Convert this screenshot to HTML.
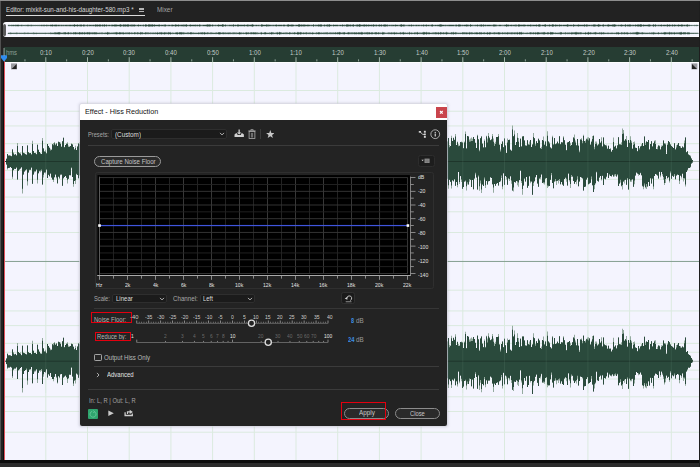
<!DOCTYPE html>
<html><head><meta charset="utf-8"><title>Effect - Hiss Reduction</title>
<style>
html,body{margin:0;padding:0;}
body{width:700px;height:467px;overflow:hidden;background:#222;position:relative;font-family:"Liberation Sans",sans-serif;}
#app,#dlg{position:absolute;left:0;top:0;width:700px;height:467px;overflow:hidden}
#app div,#dlg div,.abs{position:absolute}
.t{position:absolute;white-space:nowrap;transform-origin:0 50%;display:block}
</style></head><body>
<div id="app">
<div style="left:0.00px;top:0.00px;width:700.00px;height:1.00px;background:#8e8e8e"></div>
<div style="left:0.00px;top:1.00px;width:1.00px;height:466.00px;background:#505050"></div>
<span class="t" style="left:6.00px;top:4.93px;font-size:7.6px;line-height:9.12px;color:#d6d6d6;transform:scaleX(0.8215);">Editor: mixkit-sun-and-his-daughter-580.mp3 *</span>
<div style="left:139.40px;top:7.50px;width:4.80px;height:0.80px;background:#b4b4b4"></div>
<div style="left:139.40px;top:9.30px;width:4.80px;height:0.80px;background:#b4b4b4"></div>
<div style="left:139.40px;top:11.10px;width:4.80px;height:0.80px;background:#b4b4b4"></div>
<div style="left:6.00px;top:15.00px;width:138.60px;height:0.90px;background:#dcdcdc"></div>
<span class="t" style="left:157.20px;top:4.93px;font-size:7.6px;line-height:9.12px;color:#a6a6a6;transform:scaleX(0.8343);">Mixer</span>
<div style="left:3.00px;top:22.00px;width:697.00px;height:15.40px;background:#fbfbff;border-radius:3px 0 0 3px"></div>
<div style="left:5.50px;top:24.00px;width:694.50px;height:11.60px;background:#f5f5ff"></div>
<div style="left:3.00px;top:24.00px;width:2.60px;height:12.00px;background:#5a5a5a;border-radius:1.5px"></div>
<div style="left:4.00px;top:47.40px;width:695.00px;height:14.60px;background:#263d33"></div>
<div style="left:5.00px;top:62.00px;width:694.00px;height:398.40px;background:#fdfdff"></div>
<div style="left:5.00px;top:63.20px;width:694.00px;height:397.20px;background:#f4f4fe"></div>
<svg class="abs" style="left:0;top:0" width="700" height="467" viewBox="0 0 700 467"><path d="M8.0,25.24 L8.8,25.21 L9.6,25.22 L10.4,25.33 L11.2,25.19 L12.0,24.98 L12.8,25.30 L13.6,25.08 L14.4,25.29 L15.2,24.93 L16.0,25.31 L16.8,25.01 L17.6,24.97 L18.4,24.88 L19.2,25.25 L20.0,25.30 L20.8,25.23 L21.6,25.00 L22.4,25.17 L23.2,25.29 L24.0,25.33 L24.8,25.28 L25.6,25.21 L26.4,25.28 L27.2,24.90 L28.0,25.33 L28.8,24.92 L29.6,25.28 L30.4,25.17 L31.2,24.91 L32.0,25.19 L32.8,25.28 L33.6,25.25 L34.4,25.32 L35.2,25.21 L36.0,25.33 L36.8,25.32 L37.6,25.24 L38.4,25.28 L39.2,25.25 L40.0,25.15 L40.8,25.31 L41.6,25.05 L42.4,25.18 L43.2,25.03 L44.0,25.21 L44.8,24.96 L45.6,25.33 L46.4,24.93 L47.2,25.19 L48.0,25.00 L48.8,25.31 L49.6,25.29 L50.4,24.97 L51.2,24.98 L52.0,25.10 L52.8,24.76 L53.6,25.18 L54.4,24.97 L55.2,25.06 L56.0,24.84 L56.8,25.02 L57.6,25.13 L58.4,25.03 L59.2,25.05 L60.0,25.13 L60.8,25.15 L61.6,25.03 L62.4,25.15 L63.2,25.06 L64.0,25.22 L64.8,25.16 L65.6,25.10 L66.4,25.06 L67.2,25.13 L68.0,25.04 L68.8,25.13 L69.6,25.00 L70.4,24.98 L71.2,25.09 L72.0,25.18 L72.8,24.99 L73.6,25.05 L74.4,24.56 L75.2,25.07 L76.0,25.11 L76.8,25.03 L77.6,24.78 L78.4,25.11 L79.2,25.17 L80.0,24.70 L80.8,24.92 L81.6,24.87 L82.4,25.21 L83.2,25.12 L84.0,24.56 L84.8,25.22 L85.6,25.15 L86.4,25.19 L87.2,24.71 L88.0,25.20 L88.8,25.14 L89.6,24.98 L90.4,25.12 L91.2,25.06 L92.0,25.18 L92.8,25.08 L93.6,24.98 L94.4,25.13 L95.2,24.82 L96.0,24.65 L96.8,25.00 L97.6,24.81 L98.4,24.98 L99.2,24.98 L100.0,24.53 L100.8,25.10 L101.6,25.14 L102.4,24.73 L103.2,25.19 L104.0,24.64 L104.8,24.63 L105.6,25.15 L106.4,24.73 L107.2,25.18 L108.0,25.15 L108.8,25.10 L109.6,25.07 L110.4,25.19 L111.2,25.14 L112.0,24.75 L112.8,25.10 L113.6,25.03 L114.4,24.85 L115.2,24.99 L116.0,24.61 L116.8,25.11 L117.6,25.04 L118.4,25.10 L119.2,25.12 L120.0,24.70 L120.8,24.52 L121.6,25.05 L122.4,25.15 L123.2,24.62 L124.0,25.08 L124.8,24.73 L125.6,24.74 L126.4,25.02 L127.2,24.60 L128.0,24.98 L128.8,24.55 L129.6,25.17 L130.4,24.98 L131.2,24.67 L132.0,25.18 L132.8,24.70 L133.6,24.88 L134.4,24.80 L135.2,25.03 L136.0,25.19 L136.8,25.14 L137.6,25.10 L138.4,24.68 L139.2,25.18 L140.0,25.09 L140.8,25.08 L141.6,25.15 L142.4,25.16 L143.2,24.81 L144.0,25.13 L144.8,25.18 L145.6,24.62 L146.4,24.79 L147.2,25.16 L148.0,25.10 L148.8,24.57 L149.6,24.67 L150.4,24.81 L151.2,24.98 L152.0,24.60 L152.8,24.81 L153.6,25.07 L154.4,24.63 L155.2,25.06 L156.0,25.11 L156.8,25.09 L157.6,25.08 L158.4,24.91 L159.2,24.66 L160.0,25.10 L160.8,25.22 L161.6,25.00 L162.4,25.11 L163.2,24.94 L164.0,25.13 L164.8,24.71 L165.6,24.85 L166.4,25.16 L167.2,25.21 L168.0,25.13 L168.8,25.05 L169.6,25.10 L170.4,25.19 L171.2,25.15 L172.0,24.77 L172.8,24.99 L173.6,25.12 L174.4,25.13 L175.2,24.65 L176.0,24.76 L176.8,25.05 L177.6,25.06 L178.4,24.75 L179.2,25.03 L180.0,25.21 L180.8,24.97 L181.6,24.91 L182.4,25.00 L183.2,24.70 L184.0,25.21 L184.8,24.86 L185.6,24.93 L186.4,24.60 L187.2,25.12 L188.0,25.20 L188.8,25.19 L189.6,24.99 L190.4,24.80 L191.2,25.09 L192.0,25.08 L192.8,25.06 L193.6,24.99 L194.4,25.11 L195.2,24.85 L196.0,25.20 L196.8,25.02 L197.6,24.90 L198.4,25.20 L199.2,24.85 L200.0,24.77 L200.8,25.15 L201.6,25.20 L202.4,25.14 L203.2,25.08 L204.0,25.06 L204.8,25.08 L205.6,25.02 L206.4,24.98 L207.2,24.56 L208.0,24.90 L208.8,24.74 L209.6,24.68 L210.4,24.86 L211.2,25.19 L212.0,25.01 L212.8,24.72 L213.6,25.13 L214.4,25.22 L215.2,25.01 L216.0,25.20 L216.8,25.18 L217.6,25.11 L218.4,24.71 L219.2,24.99 L220.0,25.11 L220.8,25.03 L221.6,25.09 L222.4,24.59 L223.2,24.57 L224.0,25.21 L224.8,25.10 L225.6,24.82 L226.4,25.17 L227.2,25.13 L228.0,25.16 L228.8,25.16 L229.6,25.01 L230.4,25.07 L231.2,25.18 L232.0,24.84 L232.8,25.20 L233.6,24.52 L234.4,25.14 L235.2,25.00 L236.0,25.02 L236.8,25.22 L237.6,24.74 L238.4,24.83 L239.2,25.12 L240.0,25.04 L240.8,24.97 L241.6,24.99 L242.4,25.05 L243.2,25.02 L244.0,25.07 L244.8,24.86 L245.6,25.20 L246.4,25.07 L247.2,25.04 L248.0,24.54 L248.8,25.20 L249.6,25.05 L250.4,25.00 L251.2,25.01 L252.0,24.69 L252.8,24.45 L253.6,25.08 L254.4,25.22 L255.2,25.18 L256.0,25.00 L256.8,25.07 L257.6,25.19 L258.4,25.08 L259.2,25.13 L260.0,25.17 L260.8,25.15 L261.6,24.57 L262.4,24.81 L263.2,25.08 L264.0,25.00 L264.8,25.12 L265.6,25.09 L266.4,24.73 L267.2,24.77 L268.0,25.19 L268.8,24.80 L269.6,25.07 L270.4,25.05 L271.2,25.20 L272.0,25.01 L272.8,25.14 L273.6,25.06 L274.4,25.16 L275.2,25.01 L276.0,24.94 L276.8,24.78 L277.6,25.19 L278.4,25.04 L279.2,25.02 L280.0,24.99 L280.8,25.06 L281.6,24.97 L282.4,25.17 L283.2,25.11 L284.0,24.69 L284.8,25.08 L285.6,25.19 L286.4,25.13 L287.2,25.10 L288.0,24.52 L288.8,24.80 L289.6,25.10 L290.4,25.04 L291.2,24.75 L292.0,25.05 L292.8,24.76 L293.6,25.01 L294.4,25.21 L295.2,25.16 L296.0,24.97 L296.8,25.10 L297.6,25.08 L298.4,24.66 L299.2,24.55 L300.0,24.84 L300.8,25.11 L301.6,24.81 L302.4,24.98 L303.2,24.80 L304.0,24.98 L304.8,24.76 L305.6,25.03 L306.4,25.07 L307.2,25.06 L308.0,24.74 L308.8,25.12 L309.6,25.01 L310.4,25.13 L311.2,25.03 L312.0,25.18 L312.8,25.11 L313.6,24.62 L314.4,25.15 L315.2,25.15 L316.0,24.83 L316.8,25.20 L317.6,25.00 L318.4,24.68 L319.2,24.98 L320.0,24.66 L320.8,24.72 L321.6,24.65 L322.4,25.13 L323.2,25.18 L324.0,24.98 L324.8,24.77 L325.6,25.13 L326.4,25.10 L327.2,24.58 L328.0,25.15 L328.8,24.67 L329.6,24.57 L330.4,25.12 L331.2,25.07 L332.0,25.21 L332.8,25.21 L333.6,24.83 L334.4,25.11 L335.2,24.99 L336.0,25.09 L336.8,24.99 L337.6,24.97 L338.4,25.18 L339.2,25.20 L340.0,25.04 L340.8,25.12 L341.6,25.15 L342.4,24.69 L343.2,25.10 L344.0,25.17 L344.8,24.89 L345.6,25.18 L346.4,24.68 L347.2,24.54 L348.0,25.06 L348.8,24.77 L349.6,25.00 L350.4,24.75 L351.2,25.21 L352.0,24.86 L352.8,25.01 L353.6,24.60 L354.4,25.19 L355.2,25.07 L356.0,25.16 L356.8,24.75 L357.6,24.84 L358.4,25.06 L359.2,24.61 L360.0,24.55 L360.8,24.95 L361.6,25.03 L362.4,24.99 L363.2,24.89 L364.0,24.75 L364.8,24.78 L365.6,25.06 L366.4,24.80 L367.2,25.05 L368.0,25.08 L368.8,24.81 L369.6,25.09 L370.4,25.08 L371.2,25.12 L372.0,24.77 L372.8,25.16 L373.6,24.58 L374.4,25.06 L375.2,25.19 L376.0,24.71 L376.8,25.01 L377.6,25.21 L378.4,25.12 L379.2,24.70 L380.0,24.92 L380.8,25.04 L381.6,24.70 L382.4,25.17 L383.2,25.02 L384.0,24.75 L384.8,24.77 L385.6,24.77 L386.4,24.99 L387.2,24.63 L388.0,25.19 L388.8,25.20 L389.6,25.08 L390.4,25.15 L391.2,24.98 L392.0,25.17 L392.8,24.99 L393.6,25.06 L394.4,25.14 L395.2,24.87 L396.0,24.99 L396.8,25.11 L397.6,25.08 L398.4,25.15 L399.2,25.16 L400.0,25.03 L400.8,24.74 L401.6,24.49 L402.4,24.96 L403.2,25.11 L404.0,24.56 L404.8,25.19 L405.6,25.16 L406.4,25.21 L407.2,25.19 L408.0,25.14 L408.8,25.06 L409.6,25.00 L410.4,25.15 L411.2,24.65 L412.0,25.12 L412.8,25.19 L413.6,25.03 L414.4,25.22 L415.2,25.14 L416.0,25.05 L416.8,25.01 L417.6,25.14 L418.4,25.09 L419.2,25.07 L420.0,25.18 L420.8,25.22 L421.6,25.03 L422.4,25.21 L423.2,24.83 L424.0,24.98 L424.8,25.16 L425.6,25.06 L426.4,24.76 L427.2,25.22 L428.0,25.07 L428.8,25.09 L429.6,25.14 L430.4,25.13 L431.2,25.03 L432.0,24.76 L432.8,24.79 L433.6,25.22 L434.4,25.19 L435.2,25.11 L436.0,25.10 L436.8,25.21 L437.6,25.03 L438.4,25.01 L439.2,25.04 L440.0,24.56 L440.8,24.75 L441.6,24.81 L442.4,25.00 L443.2,25.11 L444.0,25.04 L444.8,25.18 L445.6,25.00 L446.4,25.17 L447.2,25.11 L448.0,25.21 L448.8,25.03 L449.6,25.00 L450.4,25.03 L451.2,24.99 L452.0,25.12 L452.8,25.06 L453.6,25.04 L454.4,25.17 L455.2,25.16 L456.0,24.64 L456.8,25.01 L457.6,25.20 L458.4,24.83 L459.2,24.87 L460.0,24.80 L460.8,24.98 L461.6,25.14 L462.4,25.00 L463.2,25.21 L464.0,25.03 L464.8,25.02 L465.6,24.99 L466.4,24.74 L467.2,25.11 L468.0,24.68 L468.8,25.20 L469.6,25.17 L470.4,24.62 L471.2,25.12 L472.0,25.01 L472.8,25.14 L473.6,25.19 L474.4,25.20 L475.2,24.99 L476.0,25.21 L476.8,25.10 L477.6,24.82 L478.4,25.20 L479.2,24.93 L480.0,25.14 L480.8,24.83 L481.6,24.66 L482.4,25.17 L483.2,24.60 L484.0,25.14 L484.8,25.11 L485.6,24.91 L486.4,25.15 L487.2,25.09 L488.0,25.09 L488.8,25.08 L489.6,25.06 L490.4,25.12 L491.2,25.19 L492.0,25.00 L492.8,25.13 L493.6,24.72 L494.4,24.80 L495.2,25.03 L496.0,24.78 L496.8,25.15 L497.6,25.21 L498.4,25.18 L499.2,25.05 L500.0,25.01 L500.8,25.07 L501.6,25.18 L502.4,25.14 L503.2,25.19 L504.0,25.13 L504.8,24.98 L505.6,25.12 L506.4,24.51 L507.2,25.04 L508.0,24.81 L508.8,24.99 L509.6,25.16 L510.4,25.11 L511.2,24.89 L512.0,25.02 L512.8,25.16 L513.6,25.07 L514.4,24.99 L515.2,25.14 L516.0,24.54 L516.8,25.21 L517.6,25.15 L518.4,24.66 L519.2,24.66 L520.0,24.94 L520.8,24.97 L521.6,24.92 L522.4,24.97 L523.2,24.99 L524.0,24.77 L524.8,24.89 L525.6,25.04 L526.4,25.22 L527.2,25.01 L528.0,25.04 L528.8,24.99 L529.6,25.12 L530.4,24.86 L531.2,24.88 L532.0,25.16 L532.8,24.98 L533.6,25.01 L534.4,25.07 L535.2,25.12 L536.0,25.06 L536.8,24.77 L537.6,25.22 L538.4,24.86 L539.2,24.73 L540.0,24.62 L540.8,25.17 L541.6,25.19 L542.4,25.04 L543.2,25.10 L544.0,25.06 L544.8,24.84 L545.6,24.62 L546.4,25.13 L547.2,25.09 L548.0,25.14 L548.8,25.07 L549.6,24.78 L550.4,25.07 L551.2,25.19 L552.0,24.84 L552.8,24.61 L553.6,24.85 L554.4,25.18 L555.2,24.67 L556.0,25.05 L556.8,24.92 L557.6,25.00 L558.4,25.16 L559.2,24.67 L560.0,25.04 L560.8,25.09 L561.6,24.98 L562.4,25.21 L563.2,25.05 L564.0,25.05 L564.8,25.07 L565.6,25.05 L566.4,25.04 L567.2,24.63 L568.0,24.60 L568.8,25.16 L569.6,25.09 L570.4,25.03 L571.2,24.99 L572.0,25.08 L572.8,25.14 L573.6,24.51 L574.4,25.06 L575.2,25.02 L576.0,25.18 L576.8,25.07 L577.6,24.98 L578.4,24.66 L579.2,24.99 L580.0,25.03 L580.8,25.03 L581.6,25.05 L582.4,25.00 L583.2,24.98 L584.0,25.10 L584.8,24.54 L585.6,25.14 L586.4,24.68 L587.2,24.67 L588.0,25.16 L588.8,25.08 L589.6,25.10 L590.4,25.16 L591.2,24.97 L592.0,25.14 L592.8,24.98 L593.6,24.74 L594.4,24.72 L595.2,24.68 L596.0,25.19 L596.8,25.03 L597.6,25.00 L598.4,24.47 L599.2,24.82 L600.0,24.97 L600.8,25.04 L601.6,25.22 L602.4,25.10 L603.2,24.45 L604.0,25.08 L604.8,25.20 L605.6,25.09 L606.4,25.14 L607.2,25.10 L608.0,24.68 L608.8,24.65 L609.6,25.06 L610.4,25.05 L611.2,25.09 L612.0,24.94 L612.8,24.68 L613.6,24.83 L614.4,24.60 L615.2,24.87 L616.0,25.00 L616.8,25.15 L617.6,25.21 L618.4,24.99 L619.2,25.21 L620.0,25.01 L620.8,24.95 L621.6,24.73 L622.4,25.00 L623.2,25.10 L624.0,25.19 L624.8,25.00 L625.6,24.46 L626.4,25.14 L627.2,25.01 L628.0,24.74 L628.8,25.06 L629.6,24.73 L630.4,24.85 L631.2,25.09 L632.0,25.15 L632.8,24.98 L633.6,25.03 L634.4,25.21 L635.2,24.74 L636.0,25.03 L636.8,25.10 L637.6,24.84 L638.4,24.66 L639.2,24.98 L640.0,24.64 L640.8,24.59 L641.6,24.63 L642.4,25.16 L643.2,24.82 L644.0,25.07 L644.8,25.10 L645.6,25.10 L646.4,25.11 L647.2,24.99 L648.0,25.07 L648.8,24.70 L649.6,24.74 L650.4,24.93 L651.2,25.21 L652.0,25.13 L652.8,25.05 L653.6,24.50 L654.4,25.17 L655.2,24.55 L656.0,25.07 L656.8,25.19 L657.6,25.15 L658.4,25.04 L659.2,25.15 L660.0,24.98 L660.8,25.10 L661.6,24.83 L662.4,25.19 L663.2,25.07 L664.0,25.06 L664.8,24.97 L665.6,25.11 L666.4,25.13 L667.2,24.54 L668.0,25.09 L668.8,25.08 L669.6,24.83 L670.4,25.04 L671.2,25.19 L672.0,25.03 L672.8,24.66 L673.6,25.17 L674.4,24.85 L675.2,25.07 L676.0,25.07 L676.8,25.16 L677.6,25.11 L678.4,24.75 L679.2,25.07 L680.0,25.07 L680.8,25.06 L681.6,24.68 L682.4,24.86 L683.2,25.13 L684.0,25.06 L684.8,25.02 L685.6,25.13 L686.4,25.05 L687.2,24.61 L688.0,25.01 L688.8,25.17 L689.6,25.09 L690.4,25.39 L691.2,25.37 L692.0,25.39 L692.8,25.41 L693.6,25.41 L694.4,25.25 L695.2,25.38 L696.0,25.29 L696.8,25.19 L697.6,25.35 L698.4,25.40 L698.4,25.60 L697.6,25.65 L696.8,25.81 L696.0,25.71 L695.2,25.62 L694.4,25.75 L693.6,25.59 L692.8,25.59 L692.0,25.61 L691.2,25.63 L690.4,25.61 L689.6,25.91 L688.8,25.83 L688.0,25.99 L687.2,26.39 L686.4,25.95 L685.6,25.87 L684.8,25.98 L684.0,25.94 L683.2,25.87 L682.4,26.14 L681.6,26.32 L680.8,25.94 L680.0,25.93 L679.2,25.93 L678.4,26.25 L677.6,25.89 L676.8,25.84 L676.0,25.93 L675.2,25.93 L674.4,26.15 L673.6,25.83 L672.8,26.34 L672.0,25.97 L671.2,25.81 L670.4,25.96 L669.6,26.17 L668.8,25.92 L668.0,25.91 L667.2,26.46 L666.4,25.87 L665.6,25.89 L664.8,26.03 L664.0,25.94 L663.2,25.93 L662.4,25.81 L661.6,26.17 L660.8,25.90 L660.0,26.02 L659.2,25.85 L658.4,25.96 L657.6,25.85 L656.8,25.81 L656.0,25.93 L655.2,26.45 L654.4,25.83 L653.6,26.50 L652.8,25.95 L652.0,25.87 L651.2,25.79 L650.4,26.07 L649.6,26.26 L648.8,26.30 L648.0,25.93 L647.2,26.01 L646.4,25.89 L645.6,25.90 L644.8,25.90 L644.0,25.93 L643.2,26.18 L642.4,25.84 L641.6,26.37 L640.8,26.41 L640.0,26.36 L639.2,26.02 L638.4,26.34 L637.6,26.16 L636.8,25.90 L636.0,25.97 L635.2,26.26 L634.4,25.79 L633.6,25.97 L632.8,26.02 L632.0,25.85 L631.2,25.91 L630.4,26.15 L629.6,26.27 L628.8,25.94 L628.0,26.26 L627.2,25.99 L626.4,25.86 L625.6,26.54 L624.8,26.00 L624.0,25.81 L623.2,25.90 L622.4,26.00 L621.6,26.27 L620.8,26.05 L620.0,25.99 L619.2,25.79 L618.4,26.01 L617.6,25.79 L616.8,25.85 L616.0,26.00 L615.2,26.13 L614.4,26.40 L613.6,26.17 L612.8,26.32 L612.0,26.06 L611.2,25.91 L610.4,25.95 L609.6,25.94 L608.8,26.35 L608.0,26.32 L607.2,25.90 L606.4,25.86 L605.6,25.91 L604.8,25.80 L604.0,25.92 L603.2,26.55 L602.4,25.90 L601.6,25.78 L600.8,25.96 L600.0,26.03 L599.2,26.18 L598.4,26.53 L597.6,26.00 L596.8,25.97 L596.0,25.81 L595.2,26.32 L594.4,26.28 L593.6,26.26 L592.8,26.02 L592.0,25.86 L591.2,26.03 L590.4,25.84 L589.6,25.90 L588.8,25.92 L588.0,25.84 L587.2,26.33 L586.4,26.32 L585.6,25.86 L584.8,26.46 L584.0,25.90 L583.2,26.02 L582.4,26.00 L581.6,25.95 L580.8,25.97 L580.0,25.97 L579.2,26.01 L578.4,26.34 L577.6,26.02 L576.8,25.93 L576.0,25.82 L575.2,25.98 L574.4,25.94 L573.6,26.49 L572.8,25.86 L572.0,25.92 L571.2,26.01 L570.4,25.97 L569.6,25.91 L568.8,25.84 L568.0,26.40 L567.2,26.37 L566.4,25.96 L565.6,25.95 L564.8,25.93 L564.0,25.95 L563.2,25.95 L562.4,25.79 L561.6,26.02 L560.8,25.91 L560.0,25.96 L559.2,26.33 L558.4,25.84 L557.6,26.00 L556.8,26.08 L556.0,25.95 L555.2,26.33 L554.4,25.82 L553.6,26.15 L552.8,26.39 L552.0,26.16 L551.2,25.81 L550.4,25.93 L549.6,26.22 L548.8,25.93 L548.0,25.86 L547.2,25.91 L546.4,25.87 L545.6,26.38 L544.8,26.16 L544.0,25.94 L543.2,25.90 L542.4,25.96 L541.6,25.81 L540.8,25.83 L540.0,26.38 L539.2,26.27 L538.4,26.14 L537.6,25.78 L536.8,26.23 L536.0,25.94 L535.2,25.88 L534.4,25.93 L533.6,25.99 L532.8,26.02 L532.0,25.84 L531.2,26.12 L530.4,26.14 L529.6,25.88 L528.8,26.01 L528.0,25.96 L527.2,25.99 L526.4,25.78 L525.6,25.96 L524.8,26.11 L524.0,26.23 L523.2,26.01 L522.4,26.03 L521.6,26.08 L520.8,26.03 L520.0,26.06 L519.2,26.34 L518.4,26.34 L517.6,25.85 L516.8,25.79 L516.0,26.46 L515.2,25.86 L514.4,26.01 L513.6,25.93 L512.8,25.84 L512.0,25.98 L511.2,26.11 L510.4,25.89 L509.6,25.84 L508.8,26.01 L508.0,26.19 L507.2,25.96 L506.4,26.49 L505.6,25.88 L504.8,26.02 L504.0,25.87 L503.2,25.81 L502.4,25.86 L501.6,25.82 L500.8,25.93 L500.0,25.99 L499.2,25.95 L498.4,25.82 L497.6,25.79 L496.8,25.85 L496.0,26.22 L495.2,25.97 L494.4,26.20 L493.6,26.28 L492.8,25.87 L492.0,26.00 L491.2,25.81 L490.4,25.88 L489.6,25.94 L488.8,25.92 L488.0,25.91 L487.2,25.91 L486.4,25.85 L485.6,26.09 L484.8,25.89 L484.0,25.86 L483.2,26.40 L482.4,25.83 L481.6,26.34 L480.8,26.17 L480.0,25.86 L479.2,26.07 L478.4,25.80 L477.6,26.18 L476.8,25.90 L476.0,25.79 L475.2,26.01 L474.4,25.80 L473.6,25.81 L472.8,25.86 L472.0,25.99 L471.2,25.88 L470.4,26.38 L469.6,25.83 L468.8,25.80 L468.0,26.32 L467.2,25.89 L466.4,26.26 L465.6,26.01 L464.8,25.98 L464.0,25.97 L463.2,25.79 L462.4,26.00 L461.6,25.86 L460.8,26.02 L460.0,26.20 L459.2,26.13 L458.4,26.17 L457.6,25.80 L456.8,25.99 L456.0,26.36 L455.2,25.84 L454.4,25.83 L453.6,25.96 L452.8,25.94 L452.0,25.88 L451.2,26.01 L450.4,25.97 L449.6,26.00 L448.8,25.97 L448.0,25.79 L447.2,25.89 L446.4,25.83 L445.6,26.00 L444.8,25.82 L444.0,25.96 L443.2,25.89 L442.4,26.00 L441.6,26.19 L440.8,26.25 L440.0,26.44 L439.2,25.96 L438.4,25.99 L437.6,25.97 L436.8,25.79 L436.0,25.90 L435.2,25.89 L434.4,25.81 L433.6,25.78 L432.8,26.21 L432.0,26.24 L431.2,25.97 L430.4,25.87 L429.6,25.86 L428.8,25.91 L428.0,25.93 L427.2,25.78 L426.4,26.24 L425.6,25.94 L424.8,25.84 L424.0,26.02 L423.2,26.17 L422.4,25.79 L421.6,25.97 L420.8,25.78 L420.0,25.82 L419.2,25.93 L418.4,25.91 L417.6,25.86 L416.8,25.99 L416.0,25.95 L415.2,25.86 L414.4,25.78 L413.6,25.97 L412.8,25.81 L412.0,25.88 L411.2,26.35 L410.4,25.85 L409.6,26.00 L408.8,25.94 L408.0,25.86 L407.2,25.81 L406.4,25.79 L405.6,25.84 L404.8,25.81 L404.0,26.44 L403.2,25.89 L402.4,26.04 L401.6,26.51 L400.8,26.26 L400.0,25.97 L399.2,25.84 L398.4,25.85 L397.6,25.92 L396.8,25.89 L396.0,26.01 L395.2,26.13 L394.4,25.86 L393.6,25.94 L392.8,26.01 L392.0,25.83 L391.2,26.02 L390.4,25.85 L389.6,25.92 L388.8,25.80 L388.0,25.81 L387.2,26.37 L386.4,26.01 L385.6,26.23 L384.8,26.23 L384.0,26.25 L383.2,25.98 L382.4,25.83 L381.6,26.30 L380.8,25.96 L380.0,26.08 L379.2,26.30 L378.4,25.88 L377.6,25.79 L376.8,25.99 L376.0,26.29 L375.2,25.81 L374.4,25.94 L373.6,26.42 L372.8,25.84 L372.0,26.23 L371.2,25.88 L370.4,25.92 L369.6,25.91 L368.8,26.19 L368.0,25.92 L367.2,25.95 L366.4,26.20 L365.6,25.94 L364.8,26.22 L364.0,26.25 L363.2,26.11 L362.4,26.01 L361.6,25.97 L360.8,26.05 L360.0,26.45 L359.2,26.39 L358.4,25.94 L357.6,26.16 L356.8,26.25 L356.0,25.84 L355.2,25.93 L354.4,25.81 L353.6,26.40 L352.8,25.99 L352.0,26.14 L351.2,25.79 L350.4,26.25 L349.6,26.00 L348.8,26.23 L348.0,25.94 L347.2,26.46 L346.4,26.32 L345.6,25.82 L344.8,26.11 L344.0,25.83 L343.2,25.90 L342.4,26.31 L341.6,25.85 L340.8,25.88 L340.0,25.96 L339.2,25.80 L338.4,25.82 L337.6,26.03 L336.8,26.01 L336.0,25.91 L335.2,26.01 L334.4,25.89 L333.6,26.17 L332.8,25.79 L332.0,25.79 L331.2,25.93 L330.4,25.88 L329.6,26.43 L328.8,26.33 L328.0,25.85 L327.2,26.42 L326.4,25.90 L325.6,25.87 L324.8,26.23 L324.0,26.02 L323.2,25.82 L322.4,25.87 L321.6,26.35 L320.8,26.28 L320.0,26.34 L319.2,26.02 L318.4,26.32 L317.6,26.00 L316.8,25.80 L316.0,26.17 L315.2,25.85 L314.4,25.85 L313.6,26.38 L312.8,25.89 L312.0,25.82 L311.2,25.97 L310.4,25.87 L309.6,25.99 L308.8,25.88 L308.0,26.26 L307.2,25.94 L306.4,25.93 L305.6,25.97 L304.8,26.24 L304.0,26.02 L303.2,26.20 L302.4,26.02 L301.6,26.19 L300.8,25.89 L300.0,26.16 L299.2,26.45 L298.4,26.34 L297.6,25.92 L296.8,25.90 L296.0,26.03 L295.2,25.84 L294.4,25.79 L293.6,25.99 L292.8,26.24 L292.0,25.95 L291.2,26.25 L290.4,25.96 L289.6,25.90 L288.8,26.20 L288.0,26.48 L287.2,25.90 L286.4,25.87 L285.6,25.81 L284.8,25.92 L284.0,26.31 L283.2,25.89 L282.4,25.83 L281.6,26.03 L280.8,25.94 L280.0,26.01 L279.2,25.98 L278.4,25.96 L277.6,25.81 L276.8,26.22 L276.0,26.06 L275.2,25.99 L274.4,25.84 L273.6,25.94 L272.8,25.86 L272.0,25.99 L271.2,25.80 L270.4,25.95 L269.6,25.93 L268.8,26.20 L268.0,25.81 L267.2,26.23 L266.4,26.27 L265.6,25.91 L264.8,25.88 L264.0,26.00 L263.2,25.92 L262.4,26.19 L261.6,26.43 L260.8,25.85 L260.0,25.83 L259.2,25.87 L258.4,25.92 L257.6,25.81 L256.8,25.93 L256.0,26.00 L255.2,25.82 L254.4,25.78 L253.6,25.92 L252.8,26.55 L252.0,26.31 L251.2,25.99 L250.4,26.00 L249.6,25.95 L248.8,25.80 L248.0,26.46 L247.2,25.96 L246.4,25.93 L245.6,25.80 L244.8,26.14 L244.0,25.93 L243.2,25.98 L242.4,25.95 L241.6,26.01 L240.8,26.03 L240.0,25.96 L239.2,25.88 L238.4,26.17 L237.6,26.26 L236.8,25.78 L236.0,25.98 L235.2,26.00 L234.4,25.86 L233.6,26.48 L232.8,25.80 L232.0,26.16 L231.2,25.82 L230.4,25.93 L229.6,25.99 L228.8,25.84 L228.0,25.84 L227.2,25.87 L226.4,25.83 L225.6,26.18 L224.8,25.90 L224.0,25.79 L223.2,26.43 L222.4,26.41 L221.6,25.91 L220.8,25.97 L220.0,25.89 L219.2,26.01 L218.4,26.29 L217.6,25.89 L216.8,25.82 L216.0,25.80 L215.2,25.99 L214.4,25.78 L213.6,25.87 L212.8,26.28 L212.0,25.99 L211.2,25.81 L210.4,26.14 L209.6,26.32 L208.8,26.26 L208.0,26.10 L207.2,26.44 L206.4,26.02 L205.6,25.98 L204.8,25.92 L204.0,25.94 L203.2,25.92 L202.4,25.86 L201.6,25.80 L200.8,25.85 L200.0,26.23 L199.2,26.15 L198.4,25.80 L197.6,26.10 L196.8,25.98 L196.0,25.80 L195.2,26.15 L194.4,25.89 L193.6,26.01 L192.8,25.94 L192.0,25.92 L191.2,25.91 L190.4,26.20 L189.6,26.01 L188.8,25.81 L188.0,25.80 L187.2,25.88 L186.4,26.40 L185.6,26.07 L184.8,26.14 L184.0,25.79 L183.2,26.30 L182.4,26.00 L181.6,26.09 L180.8,26.03 L180.0,25.79 L179.2,25.97 L178.4,26.25 L177.6,25.94 L176.8,25.95 L176.0,26.24 L175.2,26.35 L174.4,25.87 L173.6,25.88 L172.8,26.01 L172.0,26.23 L171.2,25.85 L170.4,25.81 L169.6,25.90 L168.8,25.95 L168.0,25.87 L167.2,25.79 L166.4,25.84 L165.6,26.15 L164.8,26.29 L164.0,25.87 L163.2,26.06 L162.4,25.89 L161.6,26.00 L160.8,25.78 L160.0,25.90 L159.2,26.34 L158.4,26.09 L157.6,25.92 L156.8,25.91 L156.0,25.89 L155.2,25.94 L154.4,26.37 L153.6,25.93 L152.8,26.19 L152.0,26.40 L151.2,26.02 L150.4,26.19 L149.6,26.33 L148.8,26.43 L148.0,25.90 L147.2,25.84 L146.4,26.21 L145.6,26.38 L144.8,25.82 L144.0,25.87 L143.2,26.19 L142.4,25.84 L141.6,25.85 L140.8,25.92 L140.0,25.91 L139.2,25.82 L138.4,26.32 L137.6,25.90 L136.8,25.86 L136.0,25.81 L135.2,25.97 L134.4,26.20 L133.6,26.12 L132.8,26.30 L132.0,25.82 L131.2,26.33 L130.4,26.02 L129.6,25.83 L128.8,26.45 L128.0,26.02 L127.2,26.40 L126.4,25.98 L125.6,26.26 L124.8,26.27 L124.0,25.92 L123.2,26.38 L122.4,25.85 L121.6,25.95 L120.8,26.48 L120.0,26.30 L119.2,25.88 L118.4,25.90 L117.6,25.96 L116.8,25.89 L116.0,26.39 L115.2,26.01 L114.4,26.15 L113.6,25.97 L112.8,25.90 L112.0,26.25 L111.2,25.86 L110.4,25.81 L109.6,25.93 L108.8,25.90 L108.0,25.85 L107.2,25.82 L106.4,26.27 L105.6,25.85 L104.8,26.37 L104.0,26.36 L103.2,25.81 L102.4,26.27 L101.6,25.86 L100.8,25.90 L100.0,26.47 L99.2,26.02 L98.4,26.02 L97.6,26.19 L96.8,26.00 L96.0,26.35 L95.2,26.18 L94.4,25.87 L93.6,26.02 L92.8,25.92 L92.0,25.82 L91.2,25.94 L90.4,25.88 L89.6,26.02 L88.8,25.86 L88.0,25.80 L87.2,26.29 L86.4,25.81 L85.6,25.85 L84.8,25.78 L84.0,26.44 L83.2,25.88 L82.4,25.79 L81.6,26.13 L80.8,26.08 L80.0,26.30 L79.2,25.83 L78.4,25.89 L77.6,26.22 L76.8,25.97 L76.0,25.89 L75.2,25.93 L74.4,26.44 L73.6,25.95 L72.8,26.01 L72.0,25.82 L71.2,25.91 L70.4,26.02 L69.6,26.00 L68.8,25.87 L68.0,25.96 L67.2,25.87 L66.4,25.94 L65.6,25.90 L64.8,25.84 L64.0,25.78 L63.2,25.94 L62.4,25.85 L61.6,25.97 L60.8,25.85 L60.0,25.87 L59.2,25.95 L58.4,25.97 L57.6,25.87 L56.8,25.98 L56.0,26.16 L55.2,25.94 L54.4,26.03 L53.6,25.82 L52.8,26.24 L52.0,25.90 L51.2,26.02 L50.4,26.03 L49.6,25.71 L48.8,25.69 L48.0,26.00 L47.2,25.81 L46.4,26.07 L45.6,25.67 L44.8,26.04 L44.0,25.79 L43.2,25.97 L42.4,25.82 L41.6,25.95 L40.8,25.69 L40.0,25.85 L39.2,25.75 L38.4,25.72 L37.6,25.76 L36.8,25.68 L36.0,25.67 L35.2,25.79 L34.4,25.68 L33.6,25.75 L32.8,25.72 L32.0,25.81 L31.2,26.09 L30.4,25.83 L29.6,25.72 L28.8,26.08 L28.0,25.67 L27.2,26.10 L26.4,25.72 L25.6,25.79 L24.8,25.72 L24.0,25.67 L23.2,25.71 L22.4,25.83 L21.6,26.00 L20.8,25.77 L20.0,25.70 L19.2,25.75 L18.4,26.12 L17.6,26.03 L16.8,25.99 L16.0,25.69 L15.2,26.07 L14.4,25.71 L13.6,25.92 L12.8,25.70 L12.0,26.02 L11.2,25.81 L10.4,25.67 L9.6,25.78 L8.8,25.79 L8.0,25.76Z" fill="#2a4a3c" stroke="#2a4a3c" stroke-width="0.5"/><path d="M8.0,33.00 L8.8,33.10 L9.6,32.99 L10.4,32.86 L11.2,32.93 L12.0,33.09 L12.8,33.12 L13.6,33.03 L14.4,33.04 L15.2,33.01 L16.0,33.04 L16.8,32.86 L17.6,33.00 L18.4,33.13 L19.2,33.04 L20.0,33.03 L20.8,33.11 L21.6,33.03 L22.4,33.09 L23.2,32.99 L24.0,33.10 L24.8,32.82 L25.6,33.02 L26.4,33.06 L27.2,33.09 L28.0,32.87 L28.8,33.07 L29.6,33.11 L30.4,33.09 L31.2,33.12 L32.0,32.98 L32.8,33.01 L33.6,32.82 L34.4,32.92 L35.2,33.11 L36.0,32.88 L36.8,32.90 L37.6,33.12 L38.4,33.09 L39.2,33.09 L40.0,32.99 L40.8,33.10 L41.6,33.06 L42.4,33.06 L43.2,33.09 L44.0,33.08 L44.8,33.03 L45.6,32.92 L46.4,33.08 L47.2,33.13 L48.0,33.00 L48.8,33.03 L49.6,33.04 L50.4,32.82 L51.2,32.90 L52.0,32.88 L52.8,32.94 L53.6,32.90 L54.4,32.77 L55.2,32.56 L56.0,32.94 L56.8,32.65 L57.6,32.71 L58.4,32.58 L59.2,32.37 L60.0,32.86 L60.8,32.84 L61.6,32.95 L62.4,32.93 L63.2,32.79 L64.0,32.82 L64.8,32.60 L65.6,32.54 L66.4,32.93 L67.2,32.91 L68.0,32.55 L68.8,32.56 L69.6,33.00 L70.4,32.80 L71.2,32.87 L72.0,32.88 L72.8,32.98 L73.6,32.54 L74.4,32.81 L75.2,32.52 L76.0,32.52 L76.8,32.92 L77.6,32.80 L78.4,32.89 L79.2,32.57 L80.0,32.35 L80.8,32.95 L81.6,32.65 L82.4,32.53 L83.2,32.84 L84.0,32.97 L84.8,32.33 L85.6,32.92 L86.4,32.87 L87.2,32.50 L88.0,32.61 L88.8,32.77 L89.6,32.41 L90.4,32.77 L91.2,32.84 L92.0,32.86 L92.8,32.64 L93.6,32.78 L94.4,32.55 L95.2,32.85 L96.0,32.44 L96.8,32.82 L97.6,32.91 L98.4,32.92 L99.2,32.94 L100.0,32.78 L100.8,32.99 L101.6,32.82 L102.4,32.80 L103.2,33.00 L104.0,32.92 L104.8,32.88 L105.6,32.86 L106.4,32.96 L107.2,32.44 L108.0,32.36 L108.8,32.90 L109.6,32.77 L110.4,32.88 L111.2,32.95 L112.0,32.78 L112.8,32.95 L113.6,32.87 L114.4,32.85 L115.2,32.82 L116.0,32.55 L116.8,32.43 L117.6,32.77 L118.4,32.96 L119.2,32.50 L120.0,32.62 L120.8,32.67 L121.6,32.87 L122.4,32.79 L123.2,32.39 L124.0,32.94 L124.8,32.91 L125.6,32.83 L126.4,32.83 L127.2,32.98 L128.0,32.48 L128.8,32.94 L129.6,32.57 L130.4,33.02 L131.2,32.84 L132.0,32.86 L132.8,32.93 L133.6,33.01 L134.4,32.57 L135.2,32.82 L136.0,32.83 L136.8,32.98 L137.6,32.51 L138.4,32.82 L139.2,32.92 L140.0,32.95 L140.8,32.24 L141.6,32.80 L142.4,32.61 L143.2,32.98 L144.0,32.88 L144.8,32.90 L145.6,32.50 L146.4,32.81 L147.2,32.82 L148.0,32.83 L148.8,32.83 L149.6,32.97 L150.4,32.79 L151.2,33.01 L152.0,32.77 L152.8,32.90 L153.6,32.86 L154.4,32.90 L155.2,32.80 L156.0,32.84 L156.8,32.97 L157.6,32.42 L158.4,32.96 L159.2,32.81 L160.0,32.59 L160.8,32.84 L161.6,32.44 L162.4,32.82 L163.2,32.88 L164.0,32.68 L164.8,32.47 L165.6,32.85 L166.4,32.85 L167.2,32.86 L168.0,32.92 L168.8,32.30 L169.6,32.86 L170.4,32.39 L171.2,32.88 L172.0,33.01 L172.8,32.78 L173.6,32.95 L174.4,32.99 L175.2,32.93 L176.0,32.60 L176.8,32.64 L177.6,32.45 L178.4,33.01 L179.2,32.56 L180.0,32.50 L180.8,32.57 L181.6,32.47 L182.4,32.78 L183.2,32.49 L184.0,32.93 L184.8,32.79 L185.6,32.97 L186.4,32.94 L187.2,32.87 L188.0,32.85 L188.8,32.82 L189.6,32.97 L190.4,32.62 L191.2,32.57 L192.0,32.78 L192.8,32.93 L193.6,32.85 L194.4,32.92 L195.2,32.95 L196.0,32.91 L196.8,32.93 L197.6,32.97 L198.4,32.65 L199.2,32.90 L200.0,32.82 L200.8,32.82 L201.6,32.72 L202.4,32.51 L203.2,32.99 L204.0,32.56 L204.8,32.44 L205.6,32.89 L206.4,32.89 L207.2,32.81 L208.0,32.57 L208.8,33.01 L209.6,32.90 L210.4,32.81 L211.2,32.85 L212.0,32.84 L212.8,32.97 L213.6,32.90 L214.4,32.97 L215.2,32.90 L216.0,32.81 L216.8,32.87 L217.6,32.96 L218.4,32.58 L219.2,32.55 L220.0,32.46 L220.8,32.87 L221.6,32.97 L222.4,32.87 L223.2,32.58 L224.0,32.88 L224.8,32.86 L225.6,32.81 L226.4,32.89 L227.2,32.84 L228.0,32.97 L228.8,32.66 L229.6,32.85 L230.4,32.79 L231.2,32.90 L232.0,32.99 L232.8,32.77 L233.6,32.77 L234.4,32.84 L235.2,32.81 L236.0,33.01 L236.8,32.74 L237.6,32.96 L238.4,32.91 L239.2,32.53 L240.0,32.41 L240.8,32.94 L241.6,32.79 L242.4,33.00 L243.2,32.84 L244.0,32.95 L244.8,33.00 L245.6,32.81 L246.4,32.45 L247.2,32.92 L248.0,32.60 L248.8,32.86 L249.6,33.01 L250.4,32.80 L251.2,32.62 L252.0,32.87 L252.8,32.85 L253.6,32.60 L254.4,32.70 L255.2,32.79 L256.0,32.44 L256.8,32.98 L257.6,32.75 L258.4,32.90 L259.2,33.00 L260.0,32.99 L260.8,32.79 L261.6,32.44 L262.4,33.00 L263.2,32.95 L264.0,32.95 L264.8,32.52 L265.6,32.52 L266.4,32.89 L267.2,32.94 L268.0,32.97 L268.8,32.96 L269.6,32.75 L270.4,32.95 L271.2,32.45 L272.0,32.60 L272.8,32.81 L273.6,32.79 L274.4,32.94 L275.2,33.01 L276.0,32.81 L276.8,32.81 L277.6,32.42 L278.4,32.98 L279.2,32.35 L280.0,32.37 L280.8,32.86 L281.6,32.80 L282.4,32.95 L283.2,32.97 L284.0,32.66 L284.8,32.98 L285.6,32.79 L286.4,32.81 L287.2,32.82 L288.0,32.93 L288.8,32.96 L289.6,32.48 L290.4,32.82 L291.2,32.92 L292.0,33.01 L292.8,32.85 L293.6,32.91 L294.4,32.55 L295.2,32.83 L296.0,32.96 L296.8,32.89 L297.6,32.34 L298.4,32.38 L299.2,32.77 L300.0,32.68 L300.8,32.33 L301.6,32.76 L302.4,32.99 L303.2,32.69 L304.0,32.86 L304.8,32.97 L305.6,32.84 L306.4,32.48 L307.2,33.01 L308.0,32.79 L308.8,32.90 L309.6,32.83 L310.4,32.84 L311.2,32.92 L312.0,32.97 L312.8,32.46 L313.6,32.94 L314.4,33.01 L315.2,32.90 L316.0,32.99 L316.8,32.58 L317.6,32.92 L318.4,32.52 L319.2,32.56 L320.0,32.80 L320.8,32.91 L321.6,32.83 L322.4,32.97 L323.2,32.79 L324.0,32.89 L324.8,32.78 L325.6,32.82 L326.4,32.80 L327.2,32.48 L328.0,32.99 L328.8,32.88 L329.6,32.86 L330.4,32.78 L331.2,32.78 L332.0,32.93 L332.8,32.78 L333.6,32.82 L334.4,32.94 L335.2,32.54 L336.0,32.80 L336.8,32.92 L337.6,32.59 L338.4,32.83 L339.2,32.35 L340.0,32.52 L340.8,32.79 L341.6,32.92 L342.4,32.85 L343.2,32.82 L344.0,32.41 L344.8,32.57 L345.6,33.01 L346.4,32.97 L347.2,32.96 L348.0,32.48 L348.8,32.50 L349.6,32.77 L350.4,32.78 L351.2,33.01 L352.0,32.37 L352.8,32.99 L353.6,32.85 L354.4,32.54 L355.2,32.95 L356.0,32.38 L356.8,32.78 L357.6,32.88 L358.4,32.57 L359.2,32.89 L360.0,32.35 L360.8,32.89 L361.6,32.31 L362.4,32.45 L363.2,33.01 L364.0,32.78 L364.8,32.78 L365.6,32.80 L366.4,32.79 L367.2,32.36 L368.0,33.00 L368.8,32.55 L369.6,32.61 L370.4,32.92 L371.2,32.85 L372.0,32.39 L372.8,32.85 L373.6,32.98 L374.4,32.87 L375.2,32.79 L376.0,32.33 L376.8,32.78 L377.6,32.93 L378.4,32.55 L379.2,32.85 L380.0,33.01 L380.8,32.85 L381.6,32.98 L382.4,32.38 L383.2,32.42 L384.0,32.87 L384.8,32.77 L385.6,33.01 L386.4,32.98 L387.2,33.00 L388.0,32.87 L388.8,32.78 L389.6,32.84 L390.4,32.88 L391.2,32.57 L392.0,32.92 L392.8,32.81 L393.6,32.84 L394.4,32.40 L395.2,32.90 L396.0,32.71 L396.8,32.82 L397.6,32.92 L398.4,32.91 L399.2,32.95 L400.0,32.78 L400.8,32.49 L401.6,32.91 L402.4,32.87 L403.2,32.29 L404.0,32.65 L404.8,32.89 L405.6,32.87 L406.4,32.97 L407.2,32.88 L408.0,32.85 L408.8,32.99 L409.6,32.34 L410.4,33.02 L411.2,32.63 L412.0,32.96 L412.8,32.89 L413.6,32.98 L414.4,32.68 L415.2,32.78 L416.0,32.78 L416.8,32.83 L417.6,32.36 L418.4,32.97 L419.2,32.83 L420.0,33.00 L420.8,32.86 L421.6,32.88 L422.4,32.78 L423.2,32.40 L424.0,32.33 L424.8,32.53 L425.6,32.85 L426.4,32.28 L427.2,32.87 L428.0,32.75 L428.8,32.64 L429.6,32.67 L430.4,32.96 L431.2,32.91 L432.0,32.88 L432.8,32.81 L433.6,32.80 L434.4,32.80 L435.2,32.87 L436.0,32.24 L436.8,32.96 L437.6,32.83 L438.4,32.46 L439.2,32.97 L440.0,32.81 L440.8,32.37 L441.6,32.87 L442.4,32.92 L443.2,32.60 L444.0,32.83 L444.8,32.89 L445.6,32.79 L446.4,32.27 L447.2,32.83 L448.0,32.67 L448.8,33.01 L449.6,32.92 L450.4,32.91 L451.2,32.84 L452.0,32.33 L452.8,32.98 L453.6,32.34 L454.4,32.97 L455.2,32.48 L456.0,32.80 L456.8,32.85 L457.6,32.98 L458.4,32.94 L459.2,33.01 L460.0,32.89 L460.8,32.92 L461.6,33.02 L462.4,32.60 L463.2,32.85 L464.0,32.50 L464.8,32.87 L465.6,32.78 L466.4,32.64 L467.2,32.71 L468.0,32.99 L468.8,32.87 L469.6,32.38 L470.4,32.84 L471.2,32.80 L472.0,32.48 L472.8,32.89 L473.6,32.95 L474.4,32.78 L475.2,32.89 L476.0,32.60 L476.8,32.65 L477.6,32.64 L478.4,32.94 L479.2,32.80 L480.0,32.33 L480.8,32.95 L481.6,32.50 L482.4,32.95 L483.2,32.96 L484.0,32.62 L484.8,32.80 L485.6,32.96 L486.4,32.94 L487.2,32.40 L488.0,32.70 L488.8,32.94 L489.6,32.41 L490.4,32.58 L491.2,32.99 L492.0,32.86 L492.8,32.96 L493.6,32.79 L494.4,32.54 L495.2,33.00 L496.0,32.59 L496.8,32.96 L497.6,32.81 L498.4,32.53 L499.2,32.45 L500.0,32.95 L500.8,32.85 L501.6,33.00 L502.4,32.62 L503.2,32.94 L504.0,32.85 L504.8,32.85 L505.6,32.77 L506.4,32.91 L507.2,32.47 L508.0,32.84 L508.8,32.87 L509.6,32.86 L510.4,32.80 L511.2,32.91 L512.0,32.23 L512.8,32.98 L513.6,32.86 L514.4,32.67 L515.2,32.73 L516.0,32.81 L516.8,32.81 L517.6,32.40 L518.4,32.99 L519.2,32.51 L520.0,32.35 L520.8,32.83 L521.6,32.33 L522.4,32.89 L523.2,32.82 L524.0,33.01 L524.8,33.01 L525.6,32.97 L526.4,32.92 L527.2,32.86 L528.0,32.96 L528.8,33.00 L529.6,32.84 L530.4,32.59 L531.2,32.82 L532.0,32.77 L532.8,32.91 L533.6,32.62 L534.4,33.01 L535.2,32.47 L536.0,32.90 L536.8,32.82 L537.6,32.45 L538.4,32.52 L539.2,32.66 L540.0,32.95 L540.8,32.83 L541.6,32.81 L542.4,32.77 L543.2,32.41 L544.0,32.81 L544.8,32.34 L545.6,32.91 L546.4,32.96 L547.2,32.78 L548.0,32.44 L548.8,32.87 L549.6,33.02 L550.4,32.36 L551.2,32.62 L552.0,32.41 L552.8,32.60 L553.6,32.87 L554.4,33.01 L555.2,32.83 L556.0,32.96 L556.8,32.96 L557.6,32.88 L558.4,32.88 L559.2,32.78 L560.0,32.94 L560.8,32.27 L561.6,32.55 L562.4,33.01 L563.2,33.00 L564.0,32.82 L564.8,32.99 L565.6,32.50 L566.4,32.98 L567.2,32.77 L568.0,32.91 L568.8,32.86 L569.6,32.85 L570.4,33.01 L571.2,32.39 L572.0,32.95 L572.8,32.62 L573.6,32.84 L574.4,32.81 L575.2,32.36 L576.0,32.63 L576.8,32.29 L577.6,32.78 L578.4,32.66 L579.2,32.81 L580.0,32.73 L580.8,32.61 L581.6,32.81 L582.4,32.98 L583.2,32.93 L584.0,32.91 L584.8,32.95 L585.6,32.43 L586.4,32.90 L587.2,32.93 L588.0,32.43 L588.8,32.33 L589.6,32.93 L590.4,32.62 L591.2,32.86 L592.0,32.91 L592.8,32.89 L593.6,32.85 L594.4,32.86 L595.2,32.33 L596.0,32.87 L596.8,32.86 L597.6,32.96 L598.4,32.97 L599.2,32.87 L600.0,32.53 L600.8,32.99 L601.6,32.45 L602.4,32.91 L603.2,32.62 L604.0,32.79 L604.8,32.92 L605.6,32.96 L606.4,32.99 L607.2,32.97 L608.0,32.80 L608.8,32.94 L609.6,33.00 L610.4,32.94 L611.2,32.96 L612.0,32.81 L612.8,32.97 L613.6,33.00 L614.4,32.94 L615.2,32.99 L616.0,32.95 L616.8,32.53 L617.6,32.84 L618.4,32.46 L619.2,32.93 L620.0,32.90 L620.8,32.98 L621.6,32.51 L622.4,32.80 L623.2,32.91 L624.0,32.78 L624.8,32.51 L625.6,32.94 L626.4,32.82 L627.2,32.43 L628.0,32.93 L628.8,32.91 L629.6,33.02 L630.4,32.79 L631.2,32.93 L632.0,32.97 L632.8,32.82 L633.6,32.83 L634.4,32.83 L635.2,32.83 L636.0,32.57 L636.8,32.29 L637.6,32.33 L638.4,32.52 L639.2,32.85 L640.0,32.87 L640.8,32.94 L641.6,32.78 L642.4,32.54 L643.2,32.92 L644.0,32.77 L644.8,32.99 L645.6,32.88 L646.4,32.93 L647.2,32.90 L648.0,32.94 L648.8,32.98 L649.6,32.87 L650.4,32.90 L651.2,32.98 L652.0,32.46 L652.8,33.00 L653.6,32.42 L654.4,32.82 L655.2,32.88 L656.0,32.91 L656.8,33.00 L657.6,32.97 L658.4,32.59 L659.2,32.96 L660.0,33.02 L660.8,32.96 L661.6,32.87 L662.4,32.90 L663.2,32.95 L664.0,32.59 L664.8,32.38 L665.6,32.56 L666.4,32.79 L667.2,32.86 L668.0,32.77 L668.8,32.80 L669.6,32.27 L670.4,32.77 L671.2,32.78 L672.0,32.40 L672.8,33.00 L673.6,32.82 L674.4,32.42 L675.2,32.90 L676.0,32.87 L676.8,32.84 L677.6,32.86 L678.4,32.85 L679.2,32.74 L680.0,32.42 L680.8,32.43 L681.6,32.37 L682.4,32.90 L683.2,32.79 L684.0,32.36 L684.8,32.85 L685.6,32.57 L686.4,32.98 L687.2,32.85 L688.0,32.41 L688.8,32.82 L689.6,32.67 L690.4,33.19 L691.2,33.03 L692.0,33.17 L692.8,33.12 L693.6,33.08 L694.4,33.17 L695.2,33.21 L696.0,33.07 L696.8,33.20 L697.6,33.15 L698.4,33.16 L698.4,33.44 L697.6,33.45 L696.8,33.40 L696.0,33.53 L695.2,33.39 L694.4,33.43 L693.6,33.52 L692.8,33.48 L692.0,33.43 L691.2,33.57 L690.4,33.41 L689.6,33.93 L688.8,33.78 L688.0,34.19 L687.2,33.75 L686.4,33.62 L685.6,34.03 L684.8,33.75 L684.0,34.24 L683.2,33.81 L682.4,33.70 L681.6,34.23 L680.8,34.17 L680.0,34.18 L679.2,33.86 L678.4,33.75 L677.6,33.74 L676.8,33.76 L676.0,33.73 L675.2,33.70 L674.4,34.18 L673.6,33.78 L672.8,33.60 L672.0,34.20 L671.2,33.82 L670.4,33.83 L669.6,34.33 L668.8,33.80 L668.0,33.83 L667.2,33.74 L666.4,33.81 L665.6,34.04 L664.8,34.22 L664.0,34.01 L663.2,33.65 L662.4,33.70 L661.6,33.73 L660.8,33.64 L660.0,33.58 L659.2,33.64 L658.4,34.01 L657.6,33.63 L656.8,33.60 L656.0,33.69 L655.2,33.72 L654.4,33.78 L653.6,34.18 L652.8,33.60 L652.0,34.14 L651.2,33.62 L650.4,33.70 L649.6,33.73 L648.8,33.62 L648.0,33.66 L647.2,33.70 L646.4,33.67 L645.6,33.72 L644.8,33.61 L644.0,33.83 L643.2,33.68 L642.4,34.06 L641.6,33.82 L640.8,33.66 L640.0,33.73 L639.2,33.75 L638.4,34.08 L637.6,34.27 L636.8,34.31 L636.0,34.03 L635.2,33.77 L634.4,33.77 L633.6,33.77 L632.8,33.78 L632.0,33.63 L631.2,33.67 L630.4,33.81 L629.6,33.58 L628.8,33.69 L628.0,33.67 L627.2,34.17 L626.4,33.78 L625.6,33.66 L624.8,34.09 L624.0,33.82 L623.2,33.69 L622.4,33.80 L621.6,34.09 L620.8,33.62 L620.0,33.70 L619.2,33.67 L618.4,34.14 L617.6,33.76 L616.8,34.07 L616.0,33.65 L615.2,33.61 L614.4,33.66 L613.6,33.60 L612.8,33.63 L612.0,33.79 L611.2,33.64 L610.4,33.66 L609.6,33.60 L608.8,33.66 L608.0,33.80 L607.2,33.63 L606.4,33.61 L605.6,33.64 L604.8,33.68 L604.0,33.81 L603.2,33.98 L602.4,33.69 L601.6,34.15 L600.8,33.61 L600.0,34.07 L599.2,33.73 L598.4,33.63 L597.6,33.64 L596.8,33.74 L596.0,33.73 L595.2,34.27 L594.4,33.74 L593.6,33.75 L592.8,33.71 L592.0,33.69 L591.2,33.74 L590.4,33.98 L589.6,33.67 L588.8,34.27 L588.0,34.17 L587.2,33.67 L586.4,33.70 L585.6,34.17 L584.8,33.65 L584.0,33.69 L583.2,33.67 L582.4,33.62 L581.6,33.79 L580.8,33.99 L580.0,33.87 L579.2,33.79 L578.4,33.94 L577.6,33.82 L576.8,34.31 L576.0,33.97 L575.2,34.24 L574.4,33.79 L573.6,33.76 L572.8,33.98 L572.0,33.65 L571.2,34.21 L570.4,33.59 L569.6,33.75 L568.8,33.74 L568.0,33.69 L567.2,33.83 L566.4,33.62 L565.6,34.10 L564.8,33.61 L564.0,33.78 L563.2,33.60 L562.4,33.59 L561.6,34.05 L560.8,34.33 L560.0,33.66 L559.2,33.82 L558.4,33.72 L557.6,33.72 L556.8,33.64 L556.0,33.64 L555.2,33.77 L554.4,33.59 L553.6,33.73 L552.8,34.00 L552.0,34.19 L551.2,33.98 L550.4,34.24 L549.6,33.58 L548.8,33.73 L548.0,34.16 L547.2,33.82 L546.4,33.64 L545.6,33.69 L544.8,34.26 L544.0,33.79 L543.2,34.19 L542.4,33.83 L541.6,33.79 L540.8,33.77 L540.0,33.65 L539.2,33.94 L538.4,34.08 L537.6,34.15 L536.8,33.78 L536.0,33.70 L535.2,34.13 L534.4,33.59 L533.6,33.98 L532.8,33.69 L532.0,33.83 L531.2,33.78 L530.4,34.01 L529.6,33.76 L528.8,33.60 L528.0,33.64 L527.2,33.74 L526.4,33.68 L525.6,33.63 L524.8,33.59 L524.0,33.59 L523.2,33.78 L522.4,33.71 L521.6,34.27 L520.8,33.77 L520.0,34.25 L519.2,34.09 L518.4,33.61 L517.6,34.20 L516.8,33.79 L516.0,33.79 L515.2,33.87 L514.4,33.93 L513.6,33.74 L512.8,33.62 L512.0,34.37 L511.2,33.69 L510.4,33.80 L509.6,33.74 L508.8,33.73 L508.0,33.76 L507.2,34.13 L506.4,33.69 L505.6,33.83 L504.8,33.75 L504.0,33.75 L503.2,33.66 L502.4,33.98 L501.6,33.60 L500.8,33.75 L500.0,33.65 L499.2,34.15 L498.4,34.07 L497.6,33.79 L496.8,33.64 L496.0,34.01 L495.2,33.60 L494.4,34.06 L493.6,33.81 L492.8,33.64 L492.0,33.74 L491.2,33.61 L490.4,34.02 L489.6,34.19 L488.8,33.66 L488.0,33.90 L487.2,34.20 L486.4,33.66 L485.6,33.64 L484.8,33.80 L484.0,33.98 L483.2,33.64 L482.4,33.65 L481.6,34.10 L480.8,33.65 L480.0,34.27 L479.2,33.80 L478.4,33.66 L477.6,33.96 L476.8,33.95 L476.0,34.00 L475.2,33.71 L474.4,33.82 L473.6,33.65 L472.8,33.71 L472.0,34.12 L471.2,33.80 L470.4,33.76 L469.6,34.22 L468.8,33.73 L468.0,33.61 L467.2,33.89 L466.4,33.96 L465.6,33.82 L464.8,33.73 L464.0,34.10 L463.2,33.75 L462.4,34.00 L461.6,33.58 L460.8,33.68 L460.0,33.71 L459.2,33.59 L458.4,33.66 L457.6,33.62 L456.8,33.75 L456.0,33.80 L455.2,34.12 L454.4,33.63 L453.6,34.26 L452.8,33.62 L452.0,34.27 L451.2,33.76 L450.4,33.69 L449.6,33.68 L448.8,33.59 L448.0,33.93 L447.2,33.77 L446.4,34.33 L445.6,33.81 L444.8,33.71 L444.0,33.77 L443.2,34.00 L442.4,33.68 L441.6,33.73 L440.8,34.23 L440.0,33.79 L439.2,33.63 L438.4,34.14 L437.6,33.77 L436.8,33.64 L436.0,34.36 L435.2,33.73 L434.4,33.80 L433.6,33.80 L432.8,33.79 L432.0,33.72 L431.2,33.69 L430.4,33.64 L429.6,33.93 L428.8,33.96 L428.0,33.85 L427.2,33.73 L426.4,34.32 L425.6,33.75 L424.8,34.07 L424.0,34.27 L423.2,34.20 L422.4,33.82 L421.6,33.72 L420.8,33.74 L420.0,33.60 L419.2,33.77 L418.4,33.63 L417.6,34.24 L416.8,33.77 L416.0,33.82 L415.2,33.82 L414.4,33.92 L413.6,33.62 L412.8,33.71 L412.0,33.64 L411.2,33.97 L410.4,33.58 L409.6,34.26 L408.8,33.61 L408.0,33.75 L407.2,33.72 L406.4,33.63 L405.6,33.73 L404.8,33.71 L404.0,33.95 L403.2,34.31 L402.4,33.73 L401.6,33.69 L400.8,34.11 L400.0,33.82 L399.2,33.65 L398.4,33.69 L397.6,33.68 L396.8,33.78 L396.0,33.89 L395.2,33.70 L394.4,34.20 L393.6,33.76 L392.8,33.79 L392.0,33.68 L391.2,34.03 L390.4,33.72 L389.6,33.76 L388.8,33.82 L388.0,33.73 L387.2,33.60 L386.4,33.62 L385.6,33.59 L384.8,33.83 L384.0,33.73 L383.2,34.18 L382.4,34.22 L381.6,33.62 L380.8,33.75 L380.0,33.59 L379.2,33.75 L378.4,34.05 L377.6,33.67 L376.8,33.82 L376.0,34.27 L375.2,33.81 L374.4,33.73 L373.6,33.62 L372.8,33.75 L372.0,34.21 L371.2,33.75 L370.4,33.68 L369.6,33.99 L368.8,34.05 L368.0,33.60 L367.2,34.24 L366.4,33.81 L365.6,33.80 L364.8,33.82 L364.0,33.82 L363.2,33.59 L362.4,34.15 L361.6,34.29 L360.8,33.71 L360.0,34.25 L359.2,33.71 L358.4,34.03 L357.6,33.72 L356.8,33.82 L356.0,34.22 L355.2,33.65 L354.4,34.06 L353.6,33.75 L352.8,33.61 L352.0,34.23 L351.2,33.59 L350.4,33.82 L349.6,33.83 L348.8,34.10 L348.0,34.12 L347.2,33.64 L346.4,33.63 L345.6,33.59 L344.8,34.03 L344.0,34.19 L343.2,33.78 L342.4,33.75 L341.6,33.68 L340.8,33.81 L340.0,34.08 L339.2,34.25 L338.4,33.77 L337.6,34.01 L336.8,33.68 L336.0,33.80 L335.2,34.06 L334.4,33.66 L333.6,33.78 L332.8,33.82 L332.0,33.67 L331.2,33.82 L330.4,33.82 L329.6,33.74 L328.8,33.72 L328.0,33.61 L327.2,34.12 L326.4,33.80 L325.6,33.78 L324.8,33.82 L324.0,33.71 L323.2,33.81 L322.4,33.63 L321.6,33.77 L320.8,33.69 L320.0,33.80 L319.2,34.04 L318.4,34.08 L317.6,33.68 L316.8,34.02 L316.0,33.61 L315.2,33.70 L314.4,33.59 L313.6,33.66 L312.8,34.14 L312.0,33.63 L311.2,33.68 L310.4,33.76 L309.6,33.77 L308.8,33.70 L308.0,33.81 L307.2,33.59 L306.4,34.12 L305.6,33.76 L304.8,33.63 L304.0,33.74 L303.2,33.91 L302.4,33.61 L301.6,33.84 L300.8,34.27 L300.0,33.92 L299.2,33.83 L298.4,34.22 L297.6,34.26 L296.8,33.71 L296.0,33.64 L295.2,33.77 L294.4,34.05 L293.6,33.69 L292.8,33.75 L292.0,33.59 L291.2,33.68 L290.4,33.78 L289.6,34.12 L288.8,33.64 L288.0,33.67 L287.2,33.78 L286.4,33.79 L285.6,33.81 L284.8,33.62 L284.0,33.94 L283.2,33.63 L282.4,33.65 L281.6,33.80 L280.8,33.74 L280.0,34.23 L279.2,34.25 L278.4,33.62 L277.6,34.18 L276.8,33.79 L276.0,33.79 L275.2,33.59 L274.4,33.66 L273.6,33.81 L272.8,33.79 L272.0,34.00 L271.2,34.15 L270.4,33.65 L269.6,33.85 L268.8,33.64 L268.0,33.63 L267.2,33.66 L266.4,33.71 L265.6,34.08 L264.8,34.08 L264.0,33.65 L263.2,33.65 L262.4,33.60 L261.6,34.16 L260.8,33.81 L260.0,33.61 L259.2,33.60 L258.4,33.70 L257.6,33.85 L256.8,33.62 L256.0,34.16 L255.2,33.81 L254.4,33.90 L253.6,34.00 L252.8,33.75 L252.0,33.73 L251.2,33.98 L250.4,33.80 L249.6,33.59 L248.8,33.74 L248.0,34.00 L247.2,33.68 L246.4,34.15 L245.6,33.79 L244.8,33.60 L244.0,33.65 L243.2,33.76 L242.4,33.60 L241.6,33.81 L240.8,33.66 L240.0,34.19 L239.2,34.07 L238.4,33.69 L237.6,33.64 L236.8,33.86 L236.0,33.59 L235.2,33.79 L234.4,33.76 L233.6,33.83 L232.8,33.83 L232.0,33.61 L231.2,33.70 L230.4,33.81 L229.6,33.75 L228.8,33.94 L228.0,33.63 L227.2,33.76 L226.4,33.71 L225.6,33.79 L224.8,33.74 L224.0,33.72 L223.2,34.02 L222.4,33.73 L221.6,33.63 L220.8,33.73 L220.0,34.14 L219.2,34.05 L218.4,34.02 L217.6,33.64 L216.8,33.73 L216.0,33.79 L215.2,33.70 L214.4,33.63 L213.6,33.70 L212.8,33.63 L212.0,33.76 L211.2,33.75 L210.4,33.79 L209.6,33.70 L208.8,33.59 L208.0,34.03 L207.2,33.79 L206.4,33.71 L205.6,33.71 L204.8,34.16 L204.0,34.04 L203.2,33.61 L202.4,34.09 L201.6,33.88 L200.8,33.78 L200.0,33.78 L199.2,33.70 L198.4,33.95 L197.6,33.63 L196.8,33.67 L196.0,33.69 L195.2,33.65 L194.4,33.68 L193.6,33.75 L192.8,33.67 L192.0,33.82 L191.2,34.03 L190.4,33.98 L189.6,33.63 L188.8,33.78 L188.0,33.75 L187.2,33.73 L186.4,33.66 L185.6,33.63 L184.8,33.81 L184.0,33.67 L183.2,34.11 L182.4,33.82 L181.6,34.13 L180.8,34.03 L180.0,34.10 L179.2,34.04 L178.4,33.59 L177.6,34.15 L176.8,33.96 L176.0,34.00 L175.2,33.67 L174.4,33.61 L173.6,33.65 L172.8,33.82 L172.0,33.59 L171.2,33.72 L170.4,34.21 L169.6,33.74 L168.8,34.30 L168.0,33.68 L167.2,33.74 L166.4,33.75 L165.6,33.75 L164.8,34.13 L164.0,33.92 L163.2,33.72 L162.4,33.78 L161.6,34.16 L160.8,33.76 L160.0,34.01 L159.2,33.79 L158.4,33.64 L157.6,34.18 L156.8,33.63 L156.0,33.76 L155.2,33.80 L154.4,33.70 L153.6,33.74 L152.8,33.70 L152.0,33.83 L151.2,33.59 L150.4,33.81 L149.6,33.63 L148.8,33.77 L148.0,33.77 L147.2,33.78 L146.4,33.79 L145.6,34.10 L144.8,33.70 L144.0,33.72 L143.2,33.62 L142.4,33.99 L141.6,33.80 L140.8,34.36 L140.0,33.65 L139.2,33.68 L138.4,33.78 L137.6,34.09 L136.8,33.62 L136.0,33.77 L135.2,33.78 L134.4,34.03 L133.6,33.59 L132.8,33.67 L132.0,33.74 L131.2,33.76 L130.4,33.58 L129.6,34.03 L128.8,33.66 L128.0,34.12 L127.2,33.62 L126.4,33.77 L125.6,33.77 L124.8,33.69 L124.0,33.66 L123.2,34.21 L122.4,33.81 L121.6,33.73 L120.8,33.93 L120.0,33.98 L119.2,34.10 L118.4,33.64 L117.6,33.83 L116.8,34.17 L116.0,34.05 L115.2,33.78 L114.4,33.75 L113.6,33.73 L112.8,33.65 L112.0,33.82 L111.2,33.65 L110.4,33.72 L109.6,33.83 L108.8,33.70 L108.0,34.24 L107.2,34.16 L106.4,33.64 L105.6,33.74 L104.8,33.72 L104.0,33.68 L103.2,33.60 L102.4,33.80 L101.6,33.78 L100.8,33.61 L100.0,33.82 L99.2,33.66 L98.4,33.68 L97.6,33.69 L96.8,33.78 L96.0,34.16 L95.2,33.75 L94.4,34.05 L93.6,33.82 L92.8,33.96 L92.0,33.74 L91.2,33.76 L90.4,33.83 L89.6,34.19 L88.8,33.83 L88.0,33.99 L87.2,34.10 L86.4,33.73 L85.6,33.68 L84.8,34.27 L84.0,33.63 L83.2,33.76 L82.4,34.07 L81.6,33.95 L80.8,33.65 L80.0,34.25 L79.2,34.03 L78.4,33.71 L77.6,33.80 L76.8,33.68 L76.0,34.08 L75.2,34.08 L74.4,33.79 L73.6,34.06 L72.8,33.62 L72.0,33.72 L71.2,33.73 L70.4,33.80 L69.6,33.60 L68.8,34.04 L68.0,34.05 L67.2,33.69 L66.4,33.67 L65.6,34.06 L64.8,34.00 L64.0,33.78 L63.2,33.81 L62.4,33.67 L61.6,33.65 L60.8,33.76 L60.0,33.74 L59.2,34.23 L58.4,34.02 L57.6,33.89 L56.8,33.95 L56.0,33.66 L55.2,34.04 L54.4,33.83 L53.6,33.70 L52.8,33.66 L52.0,33.72 L51.2,33.70 L50.4,33.78 L49.6,33.56 L48.8,33.57 L48.0,33.60 L47.2,33.47 L46.4,33.52 L45.6,33.68 L44.8,33.57 L44.0,33.52 L43.2,33.51 L42.4,33.54 L41.6,33.54 L40.8,33.50 L40.0,33.61 L39.2,33.51 L38.4,33.51 L37.6,33.48 L36.8,33.70 L36.0,33.72 L35.2,33.49 L34.4,33.68 L33.6,33.78 L32.8,33.59 L32.0,33.62 L31.2,33.48 L30.4,33.51 L29.6,33.49 L28.8,33.53 L28.0,33.73 L27.2,33.51 L26.4,33.54 L25.6,33.58 L24.8,33.78 L24.0,33.50 L23.2,33.61 L22.4,33.51 L21.6,33.57 L20.8,33.49 L20.0,33.57 L19.2,33.56 L18.4,33.47 L17.6,33.60 L16.8,33.74 L16.0,33.56 L15.2,33.59 L14.4,33.56 L13.6,33.57 L12.8,33.48 L12.0,33.51 L11.2,33.67 L10.4,33.74 L9.6,33.61 L8.8,33.50 L8.0,33.60Z" fill="#2a4a3c" stroke="#2a4a3c" stroke-width="0.5"/><rect x="5" y="89.99" width="694" height="1" fill="#dbeadf"/><rect x="5" y="232.01" width="694" height="1" fill="#dbeadf"/><rect x="5" y="110.73" width="694" height="1" fill="#dbeadf"/><rect x="5" y="211.27" width="694" height="1" fill="#dbeadf"/><rect x="5" y="125.41" width="694" height="1" fill="#dbeadf"/><rect x="5" y="196.59" width="694" height="1" fill="#dbeadf"/><rect x="5" y="143.16" width="694" height="1" fill="#dbeadf"/><rect x="5" y="178.84" width="694" height="1" fill="#dbeadf"/><rect x="5" y="152.06" width="694" height="1" fill="#dbeadf"/><rect x="5" y="169.94" width="694" height="1" fill="#dbeadf"/><rect x="5" y="289.69" width="694" height="1" fill="#dbeadf"/><rect x="5" y="431.71" width="694" height="1" fill="#dbeadf"/><rect x="5" y="310.43" width="694" height="1" fill="#dbeadf"/><rect x="5" y="410.97" width="694" height="1" fill="#dbeadf"/><rect x="5" y="325.11" width="694" height="1" fill="#dbeadf"/><rect x="5" y="396.29" width="694" height="1" fill="#dbeadf"/><rect x="5" y="342.86" width="694" height="1" fill="#dbeadf"/><rect x="5" y="378.54" width="694" height="1" fill="#dbeadf"/><rect x="5" y="351.76" width="694" height="1" fill="#dbeadf"/><rect x="5" y="369.64" width="694" height="1" fill="#dbeadf"/><rect x="45.30" y="61.4" width="1" height="399" fill="#dbeadf"/><rect x="87.00" y="61.4" width="1" height="399" fill="#dbeadf"/><rect x="128.70" y="61.4" width="1" height="399" fill="#dbeadf"/><rect x="170.40" y="61.4" width="1" height="399" fill="#dbeadf"/><rect x="212.10" y="61.4" width="1" height="399" fill="#dbeadf"/><rect x="253.80" y="61.4" width="1" height="399" fill="#dbeadf"/><rect x="295.50" y="61.4" width="1" height="399" fill="#dbeadf"/><rect x="337.20" y="61.4" width="1" height="399" fill="#dbeadf"/><rect x="378.90" y="61.4" width="1" height="399" fill="#dbeadf"/><rect x="420.60" y="61.4" width="1" height="399" fill="#dbeadf"/><rect x="462.30" y="61.4" width="1" height="399" fill="#dbeadf"/><rect x="504.00" y="61.4" width="1" height="399" fill="#dbeadf"/><rect x="545.70" y="61.4" width="1" height="399" fill="#dbeadf"/><rect x="587.40" y="61.4" width="1" height="399" fill="#dbeadf"/><rect x="629.10" y="61.4" width="1" height="399" fill="#dbeadf"/><rect x="670.80" y="61.4" width="1" height="399" fill="#dbeadf"/><path d="M6,161.5V158.7H7V153.9H8V155.2H9V155.4H10V155.7H11V156.3H12V149.3H13V152.2H14V154.7H15V153.9H16V155.5H17V143.0H18V152.2H19V153.3H20V152.5H21V155.5H22V145.9H23V152.5H24V153.2H25V154.0H26V154.8H27V145.5H28V152.1H29V153.2H30V153.1H31V154.3H32V140.7H33V150.9H34V153.1H35V152.8H36V154.3H37V144.7H38V149.7H39V152.0H40V153.5H41V154.0H42V137.9H43V148.2H44V151.5H45V149.8H46V153.0H47V144.1H48V146.0H49V147.8H50V148.8H51V149.8H52V144.3H53V143.0H54V142.0H55V144.2H56V143.5H57V146.1H58V141.7H59V142.3H60V142.5H61V146.8H62V141.2H63V137.8H64V147.2H65V145.1H66V143.7H67V142.2H68V145.5H69V146.3H70V146.0H71V143.8H72V144.4H73V146.9H74V149.0H75V145.8H76V150.1H77V146.4H78V143.4H79V142.1H80V148.6H81V144.0H82V144.2H83V137.1H84V143.5H85V144.0H86V140.3H87V143.3H88V140.2H89V145.9H90V143.8H91V144.8H92V149.2H93V139.7H94V141.8H95V142.6H96V143.4H97V139.9H98V138.2H99V141.6H100V145.0H101V147.5H102V150.8H103V134.9H104V148.5H105V143.4H106V140.9H107V146.7H108V144.2H109V146.2H110V153.2H111V142.4H112V152.5H113V133.7H114V139.6H115V150.1H116V144.8H117V147.8H118V140.8H119V143.5H120V149.2H121V149.0H122V148.8H123V135.6H124V147.4H125V143.4H126V149.4H127V150.4H128V140.5H129V145.3H130V146.2H131V144.6H132V149.4H133V132.6H134V138.9H135V147.2H136V144.2H137V153.8H138V135.9H139V140.8H140V141.4H141V146.5H142V144.3H143V145.1H144V141.5H145V145.2H146V149.0H147V142.6H148V143.2H149V137.8H150V148.2H151V142.3H152V147.9H153V139.2H154V141.8H155V145.9H156V146.9H157V149.8H158V138.2H159V144.1H160V148.2H161V145.2H162V138.4H163V140.8H164V142.4H165V147.1H166V148.9H167V146.9H168V142.9H169V146.1H170V141.0H171V142.8H172V144.2H173V146.1H174V139.7H175V148.5H176V151.3H177V145.7H178V145.9H179V149.2H180V139.8H181V147.3H182V152.0H183V141.0H184V141.7H185V146.8H186V144.7H187V146.0H188V141.3H189V143.4H190V145.1H191V145.6H192V148.7H193V144.3H194V143.5H195V142.2H196V142.1H197V140.3H198V144.4H199V140.4H200V145.7H201V147.1H202V140.0H203V141.6H204V137.5H205V146.4H206V148.0H207V143.2H208V150.9H209V136.6H210V145.8H211V146.7H212V148.3H213V147.0H214V135.0H215V145.6H216V145.8H217V142.0H218V142.5H219V142.3H220V141.2H221V144.6H222V148.8H223V148.0H224V140.6H225V145.5H226V144.4H227V147.0H228V144.4H229V140.3H230V145.3H231V140.0H232V144.6H233V153.2H234V140.7H235V145.8H236V147.3H237V144.2H238V149.1H239V137.0H240V140.7H241V148.6H242V147.1H243V148.6H244V129.9H245V144.1H246V141.4H247V148.0H248V144.1H249V139.4H250V138.4H251V139.5H252V145.8H253V149.3H254V147.7H255V142.1H256V145.4H257V141.9H258V143.9H259V143.7H260V139.4H261V149.5H262V150.4H263V147.9H264V146.3H265V144.2H266V145.8H267V143.7H268V149.6H269V137.3H270V135.1H271V145.5H272V146.0H273V147.2H274V140.6H275V141.3H276V141.5H277V142.0H278V148.1H279V148.0H280V138.1H281V142.2H282V150.6H283V147.4H284V146.9H285V148.6H286V145.6H287V140.9H288V149.7H289V149.6H290V143.6H291V146.6H292V145.8H293V149.5H294V148.9H295V143.0H296V140.6H297V147.2H298V149.7H299V148.4H300V144.6H301V141.8H302V152.2H303V143.7H304V146.9H305V139.9H306V146.8H307V146.5H308V141.5H309V145.9H310V139.8H311V144.6H312V146.7H313V146.7H314V152.1H315V132.4H316V143.0H317V147.0H318V150.7H319V149.3H320V134.6H321V147.3H322V145.5H323V147.8H324V149.9H325V133.3H326V140.7H327V142.5H328V145.8H329V145.4H330V138.8H331V147.8H332V145.7H333V143.2H334V142.7H335V140.6H336V140.5H337V147.0H338V148.5H339V148.7H340V139.6H341V141.6H342V149.0H343V143.7H344V143.9H345V140.1H346V143.7H347V147.0H348V144.2H349V147.0H350V142.0H351V145.7H352V147.4H353V150.2H354V149.1H355V143.0H356V147.0H357V143.9H358V144.2H359V142.0H360V143.6H361V141.5H362V146.4H363V153.1H364V153.9H365V152.6H366V147.2H367V142.0H368V147.7H369V142.3H370V143.4H371V146.7H372V142.6H373V151.3H374V144.5H375V138.5H376V145.4H377V143.7H378V152.5H379V152.5H380V147.9H381V148.3H382V141.8H383V146.6H384V144.7H385V145.7H386V136.0H387V142.3H388V145.2H389V143.5H390V143.9H391V140.0H392V144.3H393V144.9H394V145.0H395V139.7H396V139.2H397V147.5H398V139.5H399V143.4H400V147.6H401V139.1H402V147.0H403V152.5H404V151.6H405V141.7H406V140.1H407V140.1H408V147.7H409V146.3H410V150.9H411V137.6H412V143.8H413V142.7H414V145.2H415V149.2H416V136.3H417V143.9H418V140.8H419V148.5H420V145.0H421V139.7H422V145.1H423V144.0H424V149.1H425V146.2H426V134.2H427V148.7H428V144.9H429V143.4H430V149.6H431V140.0H432V141.4H433V143.0H434V154.4H435V144.7H436V141.0H437V137.3H438V142.5H439V146.6H440V150.6H441V144.9H442V144.4H443V147.7H444V154.2H445V150.9H446V143.2H447V141.6H448V138.0H449V144.9H450V145.9H451V135.7H452V141.0H453V137.5H454V139.5H455V134.0H456V145.0H457V141.6H458V144.2H459V145.8H460V142.1H461V141.6H462V142.1H463V148.2H464V141.4H465V131.6H466V148.4H467V136.0H468V136.6H469V139.5H470V138.5H471V137.5H472V138.8H473V136.9H474V139.0H475V142.5H476V148.0H477V134.8H478V139.0H479V149.8H480V138.3H481V136.5H482V143.1H483V147.4H484V139.4H485V146.9H486V135.7H487V138.5H488V133.1H489V137.2H490V140.3H491V139.2H492V133.9H493V138.5H494V143.2H495V141.8H496V136.9H497V136.9H498V134.0H499V144.7H500V149.5H501V143.9H502V141.4H503V147.3H504V138.6H505V145.4H506V153.1H507V138.4H508V140.0H509V139.8H510V149.8H511V150.8H512V125.6H513V136.3H514V130.4H515V145.1H516V142.0H517V133.1H518V138.0H519V147.0H520V138.5H521V146.4H522V135.9H523V136.3H524V140.4H525V145.5H526V145.8H527V140.3H528V144.4H529V141.6H530V139.9H531V147.1H532V144.5H533V133.1H534V138.2H535V143.8H536V141.2H537V143.0H538V138.7H539V140.5H540V148.2H541V146.7H542V139.9H543V136.5H544V144.7H545V141.5H546V146.2H547V131.3H548V141.6H549V142.2H550V147.4H551V148.6H552V135.8H553V144.4H554V138.1H555V144.2H556V143.6H557V141.6H558V143.4H559V136.2H560V144.2H561V142.3H562V142.6H563V136.2H564V140.3H565V144.8H566V150.3H567V142.4H568V142.0H569V140.9H570V142.8H571V144.9H572V142.3H573V137.5H574V134.6H575V140.6H576V144.9H577V139.0H578V144.7H579V150.4H580V139.4H581V138.3H582V141.1H583V134.8H584V140.9H585V140.5H586V138.6H587V137.4H588V137.2H589V138.0H590V144.0H591V140.8H592V136.0H593V135.7H594V146.7H595V141.5H596V141.5H597V144.8H598V144.3H599V138.9H600V142.8H601V137.3H602V146.5H603V137.5H604V144.5H605V145.3H606V144.8H607V148.8H608V145.7H609V149.0H610V148.1H611V151.3H612V149.9H613V137.6H614V146.7H615V145.7H616V148.6H617V144.9H618V137.3H619V143.9H620V144.5H621V142.2H622V128.6H623V130.0H624V140.7H625V139.3H626V136.0H627V146.9H628V140.1H629V142.5H630V136.2H631V140.7H632V148.2H633V141.9H634V141.6H635V147.7H636V148.0H637V151.3H638V146.1H639V148.1H640V146.5H641V144.2H642V143.1H643V146.0H644V136.6H645V142.7H646V141.5H647V141.9H648V139.9H649V149.5H650V143.9H651V141.3H652V146.6H653V143.2H654V140.6H655V140.2H656V149.1H657V146.8H658V145.4H659V145.6H660V149.5H661V145.4H662V145.8H663V140.6H664V143.6H665V143.3H666V154.0H667V143.5H668V140.9H669V142.3H670V144.5H671V145.9H672V146.7H673V147.9H674V143.2H675V149.5H676V145.2H677V144.8H678V142.9H679V146.1H680V145.9H681V147.9H682V146.4H683V147.4H684V140.4H685V137.5H686V152.2H687V151.2H688V154.5H689V155.2H690V155.6H691V158.4H692V160.0H693V161.5V162.6H692V163.4H691V167.4H690V168.1H689V168.2H688V170.7H687V171.9H686V186.4H685V179.3H684V181.5H683V174.0H682V178.6H681V176.1H680V183.9H679V175.1H678V174.6H677V175.6H676V179.2H675V175.7H674V176.8H673V175.8H672V178.8H671V173.3H670V182.5H669V177.3H668V178.2H667V176.1H666V183.0H665V185.0H664V179.7H663V175.7H662V172.0H661V177.3H660V171.7H659V178.5H658V175.5H657V174.8H656V173.9H655V176.0H654V189.3H653V178.5H652V183.4H651V178.2H650V186.1H649V181.9H648V186.6H647V189.0H646V188.3H645V185.4H644V189.2H643V186.4H642V175.7H641V173.2H640V174.7H639V175.7H638V173.5H637V172.5H636V175.6H635V184.2H634V186.8H633V179.3H632V181.8H631V181.9H630V179.2H629V189.5H628V179.5H627V184.7H626V179.7H625V183.4H624V181.4H623V189.6H622V186.6H621V182.6H620V183.5H619V185.9H618V175.2H617V176.6H616V175.8H615V176.6H614V176.9H613V174.7H612V177.0H611V175.9H610V175.5H609V178.0H608V173.1H607V177.3H606V179.2H605V178.6H604V185.0H603V175.7H602V180.6H601V176.1H600V177.4H599V181.6H598V180.8H597V172.4H596V184.2H595V189.3H594V192.1H593V185.3H592V179.3H591V182.7H590V183.5H589V184.2H588V178.0H587V179.6H586V186.6H585V186.9H584V190.6H583V179.1H582V177.6H581V177.0H580V181.5H579V186.2H578V179.2H577V184.3H576V181.9H575V183.7H574V181.0H573V176.4H572V177.1H571V188.1H570V181.4H569V173.6H568V185.6H567V181.8H566V178.3H565V179.1H564V185.7H563V184.5H562V182.0H561V184.3H560V181.0H559V183.6H558V180.7H557V184.9H556V181.2H555V181.4H554V188.2H553V183.0H552V175.3H551V179.8H550V186.0H549V186.8H548V188.0H547V177.9H546V178.5H545V184.4H544V183.6H543V183.1H542V174.8H541V179.2H540V178.5H539V186.8H538V183.4H537V175.1H536V177.3H535V181.3H534V186.0H533V194.8H532V181.5H531V183.2H530V176.2H529V185.8H528V187.8H527V176.9H526V181.4H525V178.6H524V185.4H523V194.7H522V183.0H521V171.1H520V180.2H519V186.8H518V185.3H517V180.9H516V182.6H515V182.1H514V191.6H513V190.4H512V183.7H511V176.2H510V181.0H509V178.8H508V184.8H507V179.4H506V176.0H505V184.8H504V173.2H503V189.3H502V177.9H501V181.7H500V181.9H499V185.4H498V183.0H497V183.7H496V185.8H495V184.1H494V192.8H493V184.2H492V178.1H491V177.2H490V181.0H489V181.2H488V184.4H487V180.9H486V187.9H485V179.4H484V186.0H483V184.6H482V192.9H481V183.4H480V190.8H479V176.7H478V189.5H477V177.6H476V174.4H475V178.5H474V189.2H473V180.1H472V187.0H471V179.7H470V181.8H469V184.5H468V184.5H467V190.4H466V181.6H465V181.7H464V187.0H463V188.7H462V181.9H461V176.3H460V184.0H459V171.9H458V187.2H457V181.9H456V185.8H455V179.2H454V181.2H453V180.2H452V188.6H451V181.8H450V179.8H449V188.7H448V178.8H447V186.3H446V174.5H445V175.4H444V174.2H443V184.5H442V187.1H441V174.4H440V170.4H439V179.4H438V181.8H437V186.6H436V180.3H435V175.4H434V179.7H433V179.1H432V187.9H431V171.3H430V176.7H429V176.7H428V183.6H427V188.3H426V177.5H425V176.0H424V180.4H423V178.6H422V184.5H421V173.1H420V174.4H419V181.2H418V177.6H417V184.1H416V176.1H415V174.5H414V177.7H413V178.4H412V183.8H411V177.9H410V179.7H409V180.9H408V178.1H407V179.8H406V172.7H405V176.4H404V175.2H403V177.3H402V179.6H401V173.4H400V171.6H399V181.0H398V177.6H397V184.1H396V172.1H395V182.0H394V173.9H393V178.0H392V182.0H391V178.2H390V178.7H389V173.4H388V173.4H387V179.6H386V181.3H385V176.7H384V178.7H383V182.1H382V183.4H381V178.2H380V180.9H379V176.4H378V177.9H377V187.5H376V185.2H375V177.3H374V182.9H373V176.5H372V186.1H371V173.2H370V179.0H369V174.0H368V179.5H367V181.1H366V178.2H365V177.0H364V179.5H363V177.9H362V172.7H361V183.7H360V173.9H359V177.0H358V181.8H357V182.4H356V182.9H355V177.7H354V173.9H353V179.3H352V182.7H351V181.8H350V173.1H349V183.9H348V178.4H347V178.7H346V187.3H345V177.8H344V181.7H343V170.4H342V177.8H341V179.0H340V175.6H339V176.7H338V182.2H337V180.3H336V182.4H335V177.6H334V176.3H333V176.0H332V177.3H331V192.4H330V178.4H329V179.4H328V175.0H327V181.6H326V185.6H325V172.0H324V172.0H323V178.3H322V182.5H321V180.3H320V172.4H319V178.5H318V177.2H317V180.4H316V190.0H315V172.3H314V180.4H313V180.4H312V175.7H311V177.7H310V175.8H309V174.8H308V176.5H307V178.8H306V186.2H305V176.4H304V172.6H303V178.7H302V175.7H301V187.6H300V173.4H299V182.0H298V176.6H297V180.2H296V186.1H295V174.2H294V178.1H293V173.2H292V179.9H291V178.9H290V178.7H289V171.4H288V180.9H287V179.4H286V186.4H285V178.9H284V172.7H283V171.2H282V182.1H281V183.5H280V173.0H279V179.3H278V175.7H277V177.2H276V187.5H275V176.6H274V173.3H273V177.3H272V173.0H271V180.6H270V178.8H269V180.2H268V174.4H267V177.5H266V185.1H265V182.6H264V177.2H263V181.1H262V182.5H261V181.4H260V183.3H259V177.6H258V174.3H257V176.8H256V183.0H255V181.1H254V174.8H253V176.1H252V180.2H251V183.5H250V186.0H249V176.2H248V175.3H247V179.9H246V178.8H245V183.2H244V176.5H243V179.1H242V176.0H241V176.8H240V177.6H239V171.1H238V175.9H237V175.9H236V179.1H235V187.3H234V172.8H233V180.0H232V180.7H231V172.3H230V190.3H229V173.9H228V176.8H227V181.2H226V183.3H225V186.9H224V172.2H223V169.8H222V175.4H221V180.2H220V186.3H219V168.7H218V178.7H217V173.1H216V179.5H215V181.9H214V174.1H213V175.6H212V173.6H211V180.7H210V180.0H209V175.5H208V179.3H207V177.5H206V178.3H205V186.1H204V172.0H203V177.6H202V175.8H201V180.5H200V180.4H199V175.3H198V176.0H197V174.2H196V176.8H195V182.8H194V182.0H193V174.0H192V179.2H191V177.4H190V182.5H189V175.1H188V179.2H187V176.1H186V174.8H185V182.9H184V176.9H183V173.6H182V172.5H181V177.7H180V182.1H179V170.5H178V176.0H177V176.3H176V176.3H175V183.3H174V182.9H173V181.9H172V179.9H171V177.9H170V181.8H169V180.7H168V177.4H167V177.8H166V178.0H165V182.7H164V180.4H163V177.9H162V172.6H161V182.6H160V177.1H159V188.4H158V175.1H157V177.9H156V179.5H155V178.9H154V180.9H153V172.1H152V182.3H151V180.0H150V178.0H149V179.1H148V175.7H147V178.0H146V182.5H145V180.7H144V179.7H143V172.1H142V175.3H141V173.3H140V183.8H139V189.2H138V175.2H137V175.8H136V174.6H135V180.1H134V195.6H133V169.0H132V173.7H131V178.3H130V183.6H129V182.1H128V170.6H127V173.2H126V177.4H125V181.5H124V179.9H123V172.9H122V173.8H121V179.8H120V177.4H119V189.0H118V173.2H117V176.5H116V179.7H115V177.8H114V190.0H113V167.2H112V173.8H111V177.4H110V178.9H109V188.7H108V178.3H107V175.6H106V176.7H105V181.6H104V181.7H103V169.4H102V177.3H101V176.8H100V182.8H99V187.8H98V175.3H97V174.5H96V173.1H95V176.0H94V185.1H93V176.0H92V177.3H91V180.2H90V174.7H89V186.3H88V178.8H87V178.6H86V175.0H85V177.2H84V180.2H83V175.5H82V169.0H81V174.2H80V176.1H79V178.3H78V175.0H77V174.6H76V184.0H75V181.1H74V186.7H73V176.9H72V168.3H71V175.2H70V175.4H69V178.7H68V183.6H67V177.8H66V176.1H65V177.0H64V178.2H63V185.7H62V174.5H61V175.2H60V178.9H59V177.0H58V184.1H57V178.6H56V174.5H55V177.3H54V181.9H53V179.6H52V177.4H51V173.4H50V176.2H49V174.8H48V178.0H47V169.6H46V173.4H45V172.4H44V177.4H43V184.5H42V171.1H41V172.2H40V171.4H39V173.2H38V183.5H37V169.6H36V172.1H35V172.6H34V174.5H33V183.8H32V167.4H31V169.7H30V170.2H29V172.5H28V185.5H27V170.1H26V170.3H25V171.4H24V174.6H23V193.4H22V167.3H21V168.4H20V169.6H19V170.7H18V179.4H17V167.6H16V168.9H15V168.8H14V170.6H13V178.7H12V168.0H11V167.0H10V167.8H9V167.9H8V169.4H7V164.6H6Z" fill="#94aa9f"/><path d="M6,161.5V158.7H7V153.9H8V155.8H9V155.4H10V155.7H11V156.3H12V149.5H13V153.6H14V154.7H15V154.2H16V155.5H17V145.9H18V152.2H19V153.3H20V154.1H21V155.5H22V145.9H23V153.1H24V153.5H25V154.3H26V154.8H27V145.5H28V152.3H29V153.2H30V153.1H31V154.4H32V143.9H33V150.9H34V153.1H35V153.2H36V154.3H37V144.7H38V149.7H39V152.0H40V153.5H41V154.0H42V140.7H43V148.5H44V151.5H45V151.8H46V153.5H47V144.1H48V146.0H49V147.8H50V150.4H51V149.8H52V144.3H53V145.2H54V143.3H55V145.2H56V143.5H57V146.1H58V141.7H59V142.3H60V144.0H61V146.8H62V141.2H63V137.8H64V147.2H65V145.1H66V143.7H67V143.8H68V147.0H69V146.9H70V146.0H71V143.8H72V144.4H73V146.9H74V149.7H75V148.1H76V150.1H77V146.4H78V143.4H79V144.1H80V148.6H81V144.0H82V145.9H83V140.4H84V143.5H85V144.0H86V143.9H87V146.5H88V140.2H89V147.5H90V143.8H91V146.5H92V150.7H93V141.6H94V144.5H95V144.3H96V143.7H97V143.1H98V139.9H99V141.6H100V147.7H101V149.9H102V151.3H103V139.4H104V148.5H105V145.3H106V143.2H107V146.7H108V144.2H109V146.2H110V153.2H111V144.7H112V152.5H113V136.3H114V143.5H115V150.8H116V144.8H117V149.3H118V140.8H119V146.5H120V149.2H121V149.0H122V150.2H123V137.7H124V147.4H125V143.4H126V150.2H127V151.6H128V140.8H129V145.3H130V146.2H131V147.4H132V150.7H133V137.3H134V138.9H135V147.2H136V147.0H137V153.8H138V139.1H139V140.8H140V142.7H141V148.3H142V146.0H143V145.3H144V144.5H145V145.2H146V150.3H147V142.6H148V145.3H149V141.7H150V148.5H151V145.5H152V148.7H153V141.8H154V141.8H155V147.8H156V148.9H157V149.8H158V138.2H159V144.1H160V148.2H161V145.2H162V141.4H163V140.8H164V142.4H165V147.1H166V148.9H167V148.1H168V145.7H169V146.1H170V142.9H171V142.8H172V144.7H173V147.6H174V142.9H175V148.5H176V151.3H177V146.3H178V145.9H179V149.2H180V141.7H181V147.3H182V152.0H183V142.3H184V142.7H185V146.8H186V144.7H187V146.0H188V143.1H189V143.4H190V145.1H191V145.6H192V150.2H193V144.3H194V143.5H195V142.2H196V142.1H197V143.3H198V144.4H199V141.7H200V145.7H201V147.1H202V143.7H203V144.2H204V140.0H205V147.8H206V148.0H207V143.2H208V150.9H209V140.3H210V145.8H211V147.4H212V148.3H213V147.7H214V135.0H215V145.6H216V148.3H217V142.5H218V143.8H219V142.3H220V143.4H221V144.6H222V148.9H223V148.0H224V140.6H225V147.1H226V146.7H227V147.0H228V147.0H229V140.3H230V145.3H231V143.2H232V144.6H233V153.2H234V140.7H235V145.8H236V147.3H237V146.0H238V149.3H239V140.2H240V140.7H241V148.6H242V147.1H243V148.6H244V135.4H245V144.1H246V142.9H247V148.0H248V144.1H249V139.4H250V141.1H251V142.1H252V145.8H253V149.3H254V147.7H255V143.3H256V146.6H257V144.8H258V146.3H259V143.7H260V142.8H261V150.4H262V150.5H263V149.6H264V146.4H265V144.2H266V145.8H267V143.7H268V149.6H269V141.1H270V138.0H271V145.5H272V146.3H273V147.2H274V141.8H275V141.3H276V142.3H277V142.0H278V149.0H279V148.0H280V141.7H281V142.2H282V150.9H283V147.4H284V146.9H285V149.7H286V145.6H287V142.6H288V150.7H289V149.6H290V143.6H291V146.6H292V145.8H293V149.5H294V148.9H295V143.0H296V140.6H297V147.2H298V149.7H299V149.9H300V145.1H301V141.8H302V152.3H303V143.7H304V146.9H305V141.8H306V146.8H307V146.5H308V143.0H309V146.9H310V140.9H311V147.0H312V148.0H313V146.7H314V152.1H315V135.4H316V143.2H317V147.0H318V150.7H319V150.6H320V138.5H321V147.3H322V145.5H323V147.9H324V149.9H325V135.1H326V143.9H327V142.5H328V145.8H329V145.6H330V138.8H331V147.8H332V145.7H333V143.2H334V144.5H335V141.6H336V144.1H337V148.3H338V148.5H339V148.7H340V143.4H341V141.6H342V149.0H343V143.7H344V146.0H345V141.8H346V143.7H347V147.0H348V144.2H349V147.0H350V143.1H351V145.7H352V148.8H353V150.2H354V149.1H355V143.0H356V147.0H357V147.0H358V144.3H359V144.8H360V143.6H361V141.5H362V149.1H363V153.1H364V154.5H365V152.6H366V147.2H367V142.8H368V150.0H369V142.4H370V143.4H371V146.7H372V142.6H373V151.3H374V144.5H375V140.6H376V145.4H377V143.7H378V152.5H379V152.5H380V147.9H381V148.3H382V141.8H383V146.6H384V144.7H385V145.7H386V138.7H387V145.0H388V145.2H389V143.9H390V143.9H391V142.2H392V144.3H393V144.9H394V145.0H395V142.3H396V142.2H397V147.5H398V142.9H399V145.1H400V147.6H401V140.0H402V147.0H403V153.0H404V151.6H405V144.7H406V140.1H407V143.1H408V147.7H409V146.8H410V150.9H411V138.5H412V143.8H413V143.1H414V147.3H415V149.2H416V136.3H417V143.9H418V142.9H419V148.5H420V145.0H421V139.7H422V145.1H423V144.0H424V149.1H425V148.9H426V136.2H427V148.7H428V147.8H429V143.4H430V149.6H431V140.0H432V141.7H433V145.3H434V155.0H435V146.7H436V141.0H437V140.8H438V144.9H439V146.6H440V151.0H441V144.9H442V146.8H443V148.8H444V154.2H445V150.9H446V143.2H447V141.6H448V138.0H449V147.3H450V145.9H451V138.1H452V141.0H453V138.0H454V140.0H455V136.6H456V145.0H457V142.2H458V146.2H459V145.8H460V142.1H461V142.3H462V142.8H463V148.2H464V142.4H465V133.9H466V148.4H467V136.0H468V136.6H469V141.7H470V141.5H471V141.1H472V141.0H473V136.9H474V139.0H475V143.1H476V148.0H477V135.8H478V139.4H479V151.2H480V138.3H481V136.5H482V143.9H483V147.4H484V140.9H485V147.5H486V136.4H487V142.6H488V136.1H489V138.3H490V140.3H491V139.5H492V136.3H493V141.7H494V145.9H495V144.0H496V136.9H497V136.9H498V136.3H499V144.7H500V151.5H501V143.9H502V141.4H503V147.3H504V138.6H505V145.4H506V153.1H507V142.6H508V140.0H509V139.8H510V149.8H511V150.8H512V129.6H513V136.3H514V134.4H515V145.1H516V142.1H517V137.8H518V141.7H519V147.0H520V138.7H521V146.4H522V136.7H523V136.3H524V140.4H525V145.5H526V145.8H527V140.3H528V144.4H529V144.8H530V139.9H531V147.1H532V144.5H533V137.1H534V138.2H535V145.8H536V141.2H537V143.0H538V138.7H539V140.5H540V148.2H541V149.0H542V139.9H543V140.8H544V144.7H545V141.5H546V146.2H547V135.7H548V141.6H549V143.4H550V147.4H551V148.6H552V137.2H553V144.4H554V138.1H555V144.2H556V143.6H557V141.7H558V143.4H559V136.2H560V144.2H561V142.3H562V142.6H563V137.4H564V140.3H565V144.8H566V150.3H567V142.4H568V142.0H569V140.9H570V146.1H571V144.9H572V142.3H573V137.5H574V138.4H575V142.5H576V145.5H577V139.0H578V146.0H579V152.2H580V139.4H581V139.8H582V143.2H583V135.9H584V140.9H585V142.7H586V139.2H587V139.4H588V140.6H589V138.4H590V144.9H591V142.0H592V139.1H593V135.7H594V149.2H595V144.0H596V143.4H597V145.8H598V144.5H599V138.9H600V142.8H601V141.2H602V146.5H603V137.5H604V144.5H605V145.3H606V146.2H607V148.8H608V145.7H609V149.0H610V149.2H611V151.9H612V149.9H613V141.9H614V146.7H615V145.7H616V148.6H617V145.5H618V137.3H619V144.4H620V144.5H621V145.0H622V133.9H623V133.4H624V140.7H625V139.3H626V140.5H627V146.9H628V140.1H629V143.1H630V140.0H631V142.8H632V149.0H633V144.9H634V143.7H635V147.7H636V148.0H637V151.3H638V146.1H639V149.4H640V146.5H641V146.1H642V143.1H643V146.0H644V136.6H645V145.0H646V141.5H647V141.9H648V139.9H649V149.5H650V143.9H651V141.3H652V146.6H653V143.2H654V141.6H655V144.0H656V149.1H657V149.3H658V145.4H659V146.3H660V149.5H661V147.0H662V145.8H663V140.6H664V143.6H665V144.4H666V154.0H667V144.9H668V140.9H669V142.3H670V144.5H671V145.9H672V146.9H673V147.9H674V143.2H675V149.5H676V147.5H677V144.8H678V142.9H679V146.1H680V147.6H681V147.9H682V146.4H683V147.5H684V143.3H685V137.5H686V152.2H687V151.2H688V154.5H689V155.2H690V156.4H691V158.4H692V160.0H693V161.5V162.6H692V163.4H691V166.8H690V168.1H689V168.0H688V169.7H687V171.9H686V184.5H685V178.0H684V177.9H683V173.6H682V176.8H681V175.6H680V180.7H679V175.1H678V174.6H677V175.6H676V179.2H675V174.0H674V176.8H673V175.8H672V178.8H671V171.6H670V180.7H669V177.3H668V178.2H667V176.1H666V179.1H665V183.0H664V177.1H663V174.0H662V172.0H661V175.6H660V171.7H659V178.5H658V175.5H657V174.4H656V173.9H655V176.0H654V186.6H653V178.5H652V183.4H651V178.2H650V186.1H649V181.9H648V186.6H647V184.1H646V187.0H645V183.5H644V186.7H643V185.8H642V175.0H641V172.7H640V174.7H639V173.9H638V173.5H637V172.5H636V175.6H635V180.4H634V186.8H633V179.3H632V179.8H631V180.6H630V178.9H629V189.5H628V177.9H627V184.7H626V179.7H625V180.3H624V181.4H623V184.9H622V185.7H621V179.8H620V183.5H619V185.9H618V174.2H617V176.6H616V174.0H615V174.6H614V176.3H613V174.7H612V176.0H611V175.9H610V174.3H609V178.0H608V173.1H607V176.4H606V179.2H605V178.6H604V185.0H603V175.7H602V179.3H601V176.1H600V177.4H599V181.6H598V180.8H597V171.8H596V183.1H595V185.0H594V192.1H593V185.3H592V176.5H591V182.7H590V183.5H589V184.2H588V177.5H587V179.6H586V186.6H585V186.9H584V190.6H583V178.0H582V177.6H581V176.9H580V181.5H579V186.2H578V176.2H577V180.5H576V181.9H575V183.7H574V181.0H573V176.4H572V174.9H571V184.0H570V179.9H569V173.6H568V185.6H567V178.7H566V177.4H565V179.1H564V185.7H563V184.5H562V182.0H561V184.3H560V178.9H559V179.9H558V180.7H557V180.9H556V178.9H555V181.4H554V188.2H553V183.0H552V173.0H551V179.7H550V186.0H549V185.7H548V185.4H547V177.9H546V178.5H545V182.4H544V182.2H543V183.1H542V174.2H541V177.2H540V178.5H539V186.8H538V183.4H537V175.1H536V177.3H535V181.3H534V182.8H533V194.8H532V181.5H531V181.5H530V176.2H529V185.8H528V187.8H527V176.9H526V181.4H525V178.6H524V185.4H523V189.0H522V181.0H521V170.4H520V180.0H519V182.6H518V181.6H517V180.9H516V182.6H515V182.1H514V187.6H513V190.4H512V180.6H511V176.2H510V179.0H509V178.3H508V184.8H507V176.9H506V176.0H505V184.8H504V173.2H503V186.4H502V175.6H501V180.7H500V181.9H499V185.4H498V183.0H497V183.7H496V185.8H495V184.1H494V187.5H493V184.2H492V178.1H491V177.2H490V181.0H489V181.2H488V184.4H487V180.9H486V185.2H485V177.4H484V186.0H483V184.6H482V189.6H481V180.5H480V186.2H479V175.4H478V189.5H477V177.6H476V172.7H475V178.5H474V189.2H473V180.1H472V187.0H471V179.7H470V179.0H469V184.5H468V182.2H467V186.3H466V180.4H465V181.5H464V187.0H463V188.7H462V179.4H461V175.9H460V182.0H459V171.9H458V185.0H457V181.9H456V185.8H455V179.2H454V181.2H453V180.2H452V185.5H451V181.7H450V179.8H449V185.2H448V178.8H447V186.3H446V174.5H445V174.9H444V174.2H443V181.0H442V187.1H441V174.3H440V169.3H439V179.4H438V179.9H437V184.2H436V177.9H435V175.3H434V177.3H433V179.1H432V187.7H431V171.1H430V176.7H429V175.9H428V180.7H427V185.0H426V177.5H425V174.9H424V177.3H423V177.7H422V184.5H421V173.1H420V174.4H419V179.7H418V177.5H417V184.1H416V176.1H415V174.5H414V177.7H413V178.4H412V183.8H411V177.9H410V176.7H409V179.0H408V176.7H407V177.9H406V172.7H405V176.4H404V175.2H403V177.3H402V179.6H401V173.4H400V171.6H399V180.9H398V177.6H397V181.2H396V172.1H395V179.8H394V172.6H393V175.1H392V181.3H391V178.2H390V176.7H389V173.4H388V173.4H387V177.4H386V181.3H385V176.7H384V178.6H383V182.1H382V181.8H381V176.1H380V178.6H379V174.2H378V177.9H377V186.0H376V184.6H375V175.9H374V180.3H373V176.5H372V186.1H371V173.2H370V178.7H369V174.0H368V179.5H367V179.5H366V178.2H365V177.0H364V179.5H363V175.4H362V172.7H361V183.7H360V173.9H359V177.0H358V179.0H357V182.4H356V182.6H355V177.7H354V173.9H353V179.3H352V178.9H351V181.8H350V173.1H349V181.3H348V178.4H347V178.7H346V186.0H345V175.1H344V181.4H343V170.4H342V177.8H341V179.0H340V175.6H339V176.7H338V179.5H337V180.3H336V182.4H335V174.8H334V176.3H333V176.0H332V175.9H331V190.6H330V177.0H329V178.3H328V174.2H327V181.6H326V185.6H325V171.6H324V171.1H323V176.8H322V181.0H321V180.3H320V172.4H319V178.5H318V177.2H317V177.1H316V187.1H315V172.3H314V180.4H313V180.4H312V174.0H311V177.7H310V173.7H309V174.8H308V176.5H307V177.5H306V186.2H305V176.4H304V172.6H303V178.7H302V175.2H301V187.6H300V173.4H299V180.0H298V176.6H297V178.4H296V186.1H295V172.7H294V178.1H293V173.2H292V177.2H291V178.9H290V177.7H289V171.4H288V180.9H287V179.4H286V186.4H285V178.9H284V172.7H283V171.2H282V181.6H281V182.7H280V172.6H279V177.2H278V175.7H277V176.3H276V183.9H275V176.6H274V173.3H273V177.3H272V171.9H271V180.6H270V178.8H269V178.2H268V174.4H267V177.5H266V185.1H265V180.2H264V177.2H263V177.6H262V179.7H261V181.4H260V183.3H259V177.6H258V174.3H257V176.8H256V183.0H255V181.1H254V174.8H253V176.1H252V180.2H251V181.7H250V186.0H249V176.2H248V175.3H247V178.2H246V178.8H245V183.2H244V176.5H243V178.8H242V176.0H241V174.6H240V177.6H239V170.4H238V175.9H237V173.4H236V179.1H235V187.3H234V172.8H233V180.0H232V179.7H231V172.3H230V190.3H229V173.9H228V176.8H227V179.1H226V183.3H225V186.9H224V171.2H223V168.5H222V175.4H221V177.4H220V185.1H219V168.3H218V178.7H217V173.1H216V179.5H215V181.9H214V171.8H213V174.9H212V173.6H211V180.7H210V180.0H209V175.5H208V179.3H207V177.5H206V178.3H205V183.6H204V171.9H203V174.9H202V174.5H201V180.5H200V178.5H199V174.6H198V176.0H197V174.2H196V175.9H195V180.3H194V180.8H193V174.0H192V176.6H191V174.9H190V182.0H189V174.7H188V176.8H187V174.3H186V174.8H185V179.7H184V176.9H183V173.6H182V172.5H181V177.7H180V182.1H179V169.8H178V176.0H177V173.7H176V175.1H175V181.1H174V179.5H173V179.0H172V179.9H171V175.8H170V181.8H169V180.7H168V176.0H167V177.8H166V178.0H165V181.4H164V180.4H163V177.9H162V172.6H161V181.0H160V177.1H159V188.4H158V175.1H157V177.9H156V177.4H155V178.9H154V180.9H153V172.1H152V179.3H151V178.7H150V177.7H149V177.7H148V175.7H147V177.3H146V179.2H145V180.5H144V179.7H143V171.4H142V175.3H141V172.1H140V180.0H139V188.1H138V175.2H137V175.8H136V174.4H135V179.0H134V191.0H133V168.6H132V173.3H131V178.3H130V180.8H129V182.1H128V170.6H127V173.2H126V177.4H125V181.5H124V179.9H123V171.4H122V173.8H121V179.8H120V177.4H119V186.9H118V172.7H117V176.5H116V179.7H115V177.8H114V190.0H113V166.7H112V173.8H111V174.7H110V178.9H109V186.0H108V175.8H107V175.6H106V174.2H105V179.2H104V181.7H103V169.4H102V177.3H101V176.8H100V181.5H99V187.8H98V173.8H97V174.5H96V173.1H95V176.0H94V185.1H93V176.0H92V175.6H91V178.1H90V174.6H89V186.3H88V175.9H87V178.6H86V173.6H85V176.0H84V180.2H83V175.5H82V168.4H81V174.2H80V175.0H79V178.3H78V175.0H77V173.7H76V180.3H75V181.1H74V184.1H73V176.9H72V167.6H71V175.2H70V174.9H69V178.7H68V179.7H67V177.8H66V176.1H65V177.0H64V178.2H63V185.7H62V174.5H61V174.6H60V177.8H59V176.6H58V183.1H57V177.3H56V174.5H55V177.3H54V179.7H53V179.6H52V177.4H51V173.4H50V176.2H49V174.8H48V178.0H47V169.6H46V172.3H45V172.4H44V174.7H43V184.5H42V169.4H41V170.4H40V170.7H39V173.2H38V179.8H37V169.6H36V171.0H35V171.2H34V174.5H33V183.8H32V167.4H31V169.7H30V169.8H29V172.5H28V181.2H27V168.9H26V170.3H25V171.4H24V174.6H23V188.7H22V167.3H21V168.4H20V169.6H19V170.7H18V179.4H17V167.6H16V168.9H15V168.8H14V170.0H13V176.8H12V168.0H11V167.0H10V167.8H9V167.9H8V168.2H7V164.4H6Z" fill="#2a4a3c"/><path d="M6,361.2V358.4H7V353.7H8V355.0H9V355.2H10V355.5H11V356.1H12V349.2H13V352.1H14V354.5H15V353.7H16V355.3H17V343.0H18V352.0H19V353.1H20V352.3H21V355.3H22V345.8H23V352.3H24V353.0H25V353.8H26V354.6H27V345.4H28V352.0H29V353.0H30V352.9H31V354.2H32V340.7H33V350.8H34V352.9H35V352.7H36V354.1H37V344.7H38V349.6H39V351.8H40V353.4H41V353.8H42V338.0H43V348.1H44V351.4H45V349.7H46V352.8H47V344.1H48V345.9H49V347.7H50V348.7H51V349.7H52V344.2H53V343.0H54V341.9H55V344.2H56V343.5H57V346.0H58V341.7H59V342.3H60V342.5H61V346.7H62V341.2H63V337.8H64V347.2H65V345.1H66V343.7H67V342.2H68V345.5H69V346.2H70V345.9H71V343.8H72V344.3H73V346.8H74V348.9H75V345.7H76V350.0H77V346.4H78V343.4H79V342.1H80V348.5H81V344.0H82V344.1H83V337.2H84V343.5H85V343.9H86V340.3H87V343.3H88V340.3H89V345.8H90V343.8H91V344.7H92V349.1H93V339.7H94V341.8H95V342.6H96V343.4H97V340.0H98V338.3H99V341.6H100V344.9H101V347.5H102V350.6H103V335.0H104V348.4H105V343.3H106V340.9H107V346.6H108V344.2H109V346.1H110V353.0H111V342.4H112V352.3H113V333.8H114V339.6H115V349.9H116V344.8H117V347.7H118V340.8H119V343.4H120V349.1H121V348.9H122V348.7H123V335.7H124V347.3H125V343.4H126V349.3H127V350.2H128V340.5H129V345.3H130V346.2H131V344.5H132V349.3H133V332.8H134V339.0H135V347.1H136V344.2H137V353.6H138V335.9H139V340.8H140V341.4H141V346.4H142V344.3H143V345.1H144V341.5H145V345.2H146V348.9H147V342.6H148V343.2H149V337.8H150V348.1H151V342.3H152V347.8H153V339.2H154V341.8H155V345.9H156V346.8H157V349.7H158V338.3H159V344.1H160V348.1H161V345.1H162V338.4H163V340.8H164V342.4H165V347.1H166V348.8H167V346.8H168V342.9H169V346.0H170V341.0H171V342.8H172V344.1H173V346.1H174V339.7H175V348.4H176V351.1H177V345.7H178V345.8H179V349.1H180V339.8H181V347.2H182V351.9H183V341.0H184V341.7H185V346.7H186V344.7H187V346.0H188V341.3H189V343.4H190V345.0H191V345.5H192V348.6H193V344.3H194V343.4H195V342.2H196V342.1H197V340.3H198V344.3H199V340.5H200V345.7H201V347.0H202V340.0H203V341.6H204V337.6H205V346.3H206V347.9H207V343.2H208V350.7H209V336.7H210V345.7H211V346.6H212V348.2H213V347.0H214V335.1H215V345.5H216V345.7H217V342.0H218V342.5H219V342.2H220V341.2H221V344.5H222V348.7H223V347.9H224V340.6H225V345.4H226V344.4H227V346.9H228V344.3H229V340.3H230V345.3H231V340.0H232V344.6H233V353.1H234V340.7H235V345.7H236V347.3H237V344.2H238V349.0H239V337.1H240V340.7H241V348.5H242V347.0H243V348.5H244V330.1H245V344.0H246V341.4H247V347.9H248V344.0H249V339.4H250V338.4H251V339.6H252V345.7H253V349.2H254V347.6H255V342.1H256V345.4H257V341.9H258V343.9H259V343.7H260V339.4H261V349.3H262V350.3H263V347.8H264V346.3H265V344.1H266V345.8H267V343.7H268V349.5H269V337.3H270V335.2H271V345.4H272V345.9H273V347.1H274V340.6H275V341.3H276V341.5H277V342.0H278V348.0H279V347.9H280V338.1H281V342.2H282V350.5H283V347.3H284V346.8H285V348.5H286V345.5H287V340.9H288V349.5H289V349.5H290V343.6H291V346.5H292V345.7H293V349.3H294V348.8H295V343.0H296V340.7H297V347.1H298V349.6H299V348.3H300V344.6H301V341.8H302V352.1H303V343.7H304V346.8H305V340.0H306V346.7H307V346.4H308V341.5H309V345.8H310V339.8H311V344.6H312V346.6H313V346.6H314V352.0H315V332.5H316V342.9H317V346.9H318V350.6H319V349.2H320V334.7H321V347.2H322V345.4H323V347.7H324V349.7H325V333.4H326V340.7H327V342.4H328V345.7H329V345.3H330V338.8H331V347.7H332V345.6H333V343.2H334V342.7H335V340.6H336V340.5H337V346.9H338V348.4H339V348.6H340V339.6H341V341.6H342V348.8H343V343.6H344V343.8H345V340.1H346V343.7H347V346.9H348V344.2H349V346.9H350V342.0H351V345.6H352V347.4H353V350.1H354V349.0H355V343.0H356V346.9H357V343.9H358V344.2H359V342.0H360V343.5H361V341.5H362V346.4H363V352.9H364V353.7H365V352.4H366V347.1H367V342.0H368V347.6H369V342.3H370V343.4H371V346.7H372V342.5H373V351.2H374V344.5H375V338.6H376V345.3H377V343.7H378V352.3H379V352.3H380V347.8H381V348.2H382V341.8H383V346.6H384V344.6H385V345.6H386V336.1H387V342.3H388V345.1H389V343.5H390V343.9H391V340.0H392V344.3H393V344.8H394V344.9H395V339.7H396V339.2H397V347.4H398V339.6H399V343.3H400V347.5H401V339.1H402V346.9H403V352.4H404V351.5H405V341.7H406V340.1H407V340.2H408V347.6H409V346.3H410V350.8H411V337.7H412V343.8H413V342.7H414V345.1H415V349.1H416V336.3H417V343.9H418V340.8H419V348.4H420V345.0H421V339.7H422V345.1H423V343.9H424V349.0H425V346.2H426V334.3H427V348.6H428V344.9H429V343.4H430V349.5H431V340.0H432V341.4H433V343.0H434V354.3H435V344.6H436V341.1H437V337.4H438V342.5H439V346.6H440V350.4H441V344.8H442V344.4H443V347.6H444V354.0H445V350.7H446V343.2H447V341.6H448V338.1H449V344.8H450V345.8H451V335.8H452V341.0H453V337.6H454V339.5H455V334.2H456V344.9H457V341.6H458V344.1H459V345.7H460V342.1H461V341.6H462V342.1H463V348.1H464V341.4H465V331.7H466V348.3H467V336.0H468V336.7H469V339.6H470V338.5H471V337.6H472V338.8H473V337.0H474V339.1H475V342.5H476V347.9H477V334.9H478V339.0H479V349.7H480V338.4H481V336.6H482V343.1H483V347.3H484V339.5H485V346.8H486V335.8H487V338.6H488V333.2H489V337.3H490V340.3H491V339.3H492V334.0H493V338.5H494V343.2H495V341.8H496V337.0H497V337.0H498V334.1H499V344.6H500V349.4H501V343.9H502V341.4H503V347.2H504V338.7H505V345.3H506V352.9H507V338.5H508V340.0H509V339.8H510V349.7H511V350.7H512V325.8H513V336.4H514V330.6H515V345.0H516V342.0H517V333.2H518V338.1H519V346.9H520V338.6H521V346.3H522V336.0H523V336.4H524V340.4H525V345.5H526V345.7H527V340.3H528V344.3H529V341.6H530V339.9H531V347.0H532V344.4H533V333.2H534V338.2H535V343.8H536V341.2H537V343.0H538V338.7H539V340.5H540V348.1H541V346.6H542V340.0H543V336.6H544V344.6H545V341.5H546V346.1H547V331.5H548V341.6H549V342.2H550V347.3H551V348.5H552V335.9H553V344.3H554V338.1H555V344.1H556V343.5H557V341.6H558V343.3H559V336.3H560V344.1H561V342.3H562V342.6H563V336.3H564V340.3H565V344.8H566V350.2H567V342.4H568V341.9H569V340.9H570V342.8H571V344.9H572V342.3H573V337.6H574V334.7H575V340.6H576V344.9H577V339.1H578V344.7H579V350.3H580V339.4H581V338.4H582V341.1H583V334.9H584V340.9H585V340.5H586V338.7H587V337.4H588V337.2H589V338.1H590V344.0H591V340.8H592V336.1H593V335.8H594V346.6H595V341.5H596V341.5H597V344.7H598V344.2H599V338.9H600V342.8H601V337.3H602V346.4H603V337.6H604V344.5H605V345.3H606V344.8H607V348.7H608V345.7H609V348.8H610V348.0H611V351.2H612V349.8H613V337.7H614V346.7H615V345.6H616V348.5H617V344.9H618V337.4H619V343.9H620V344.4H621V342.2H622V328.8H623V330.1H624V340.7H625V339.3H626V336.1H627V346.8H628V340.1H629V342.5H630V336.3H631V340.7H632V348.1H633V341.9H634V341.6H635V347.6H636V347.9H637V351.2H638V346.0H639V348.0H640V346.4H641V344.2H642V343.0H643V345.9H644V336.7H645V342.6H646V341.5H647V341.9H648V339.9H649V349.4H650V343.9H651V341.3H652V346.6H653V343.1H654V340.6H655V340.3H656V349.0H657V346.8H658V345.4H659V345.6H660V349.4H661V345.3H662V345.8H663V340.6H664V343.5H665V343.3H666V353.8H667V343.4H668V340.9H669V342.3H670V344.5H671V345.9H672V346.7H673V347.8H674V343.2H675V349.4H676V345.1H677V344.7H678V342.9H679V346.0H680V345.9H681V347.8H682V346.4H683V347.3H684V340.4H685V337.6H686V352.0H687V351.1H688V354.3H689V355.0H690V355.4H691V358.1H692V359.7H693V361.2V362.3H692V363.1H691V367.0H690V367.7H689V367.8H688V370.3H687V371.4H686V385.7H685V378.8H684V380.9H683V373.6H682V378.0H681V375.6H680V383.3H679V374.6H678V374.1H677V375.1H676V378.6H675V375.2H674V376.3H673V375.3H672V378.2H671V372.8H670V381.8H669V376.8H668V377.7H667V375.5H666V382.3H665V384.4H664V379.1H663V375.1H662V371.5H661V376.7H660V371.2H659V377.9H658V375.0H657V374.3H656V373.4H655V375.4H654V388.6H653V378.0H652V382.8H651V377.7H650V385.4H649V381.3H648V385.9H647V388.3H646V387.6H645V384.7H644V388.5H643V385.7H642V375.1H641V372.7H640V374.2H639V375.2H638V373.0H637V372.1H636V375.1H635V383.5H634V386.1H633V378.7H632V381.2H631V381.3H630V378.6H629V388.8H628V379.0H627V384.1H626V379.1H625V382.8H624V380.9H623V388.9H622V385.9H621V382.0H620V382.8H619V385.2H618V374.6H617V376.1H616V375.2H615V376.1H614V376.3H613V374.3H612V376.5H611V375.4H610V375.0H609V377.5H608V372.6H607V376.7H606V378.6H605V378.1H604V384.4H603V375.2H602V380.0H601V375.6H600V376.8H599V381.0H598V380.2H597V372.0H596V383.6H595V388.5H594V391.4H593V384.6H592V378.7H591V382.1H590V382.9H589V383.6H588V377.4H587V379.0H586V385.9H585V386.2H584V389.9H583V378.6H582V377.0H581V376.5H580V380.9H579V385.5H578V378.7H577V383.6H576V381.2H575V383.1H574V380.4H573V375.8H572V376.6H571V387.4H570V380.8H569V373.2H568V384.9H567V381.2H566V377.7H565V378.5H564V385.0H563V383.9H562V381.3H561V383.6H560V380.4H559V383.0H558V380.2H557V384.3H556V380.6H555V380.8H554V387.5H553V382.4H552V374.8H551V379.2H550V385.3H549V386.1H548V387.3H547V377.3H546V378.0H545V383.8H544V383.0H543V382.4H542V374.3H541V378.6H540V377.9H539V386.1H538V382.8H537V374.6H536V376.7H535V380.7H534V385.4H533V394.0H532V380.9H531V382.5H530V375.7H529V385.1H528V387.1H527V376.3H526V380.8H525V378.1H524V384.8H523V393.9H522V382.4H521V370.7H520V379.6H519V386.1H518V384.7H517V380.3H516V382.0H515V381.5H514V390.9H513V389.7H512V383.1H511V375.7H510V380.4H509V378.2H508V384.2H507V378.8H506V375.5H505V384.2H504V372.7H503V388.6H502V377.3H501V381.1H500V381.3H499V384.8H498V382.3H497V383.1H496V385.1H495V383.5H494V392.0H493V383.5H492V377.5H491V376.6H490V380.4H489V380.6H488V383.8H487V380.3H486V387.2H485V378.9H484V385.3H483V383.9H482V392.2H481V382.8H480V390.1H479V376.2H478V388.8H477V377.1H476V373.9H475V378.0H474V388.5H473V379.5H472V386.3H471V379.1H470V381.2H469V383.9H468V383.9H467V389.6H466V381.0H465V381.1H464V386.4H463V388.0H462V381.3H461V375.8H460V383.3H459V371.4H458V386.5H457V381.3H456V385.2H455V378.6H454V380.6H453V379.6H452V387.9H451V381.2H450V379.3H449V388.0H448V378.2H447V385.6H446V374.0H445V374.9H444V373.7H443V383.8H442V386.4H441V374.0H440V370.0H439V378.8H438V381.2H437V385.9H436V379.7H435V374.9H434V379.1H433V378.6H432V387.2H431V370.8H430V376.1H429V376.2H428V382.9H427V387.6H426V377.0H425V375.5H424V379.8H423V378.1H422V383.8H421V372.6H420V373.9H419V380.7H418V377.0H417V383.5H416V375.6H415V374.0H414V377.2H413V377.9H412V383.1H411V377.3H410V379.2H409V380.3H408V377.5H407V379.2H406V372.2H405V375.9H404V374.7H403V376.8H402V379.0H401V372.9H400V371.1H399V380.4H398V377.1H397V383.5H396V371.6H395V381.4H394V373.4H393V377.5H392V381.4H391V377.7H390V378.1H389V373.0H388V373.0H387V379.1H386V380.7H385V376.2H384V378.1H383V381.5H382V382.8H381V377.7H380V380.3H379V375.9H378V377.4H377V386.8H376V384.5H375V376.7H374V382.2H373V375.9H372V385.5H371V372.7H370V378.4H369V373.5H368V378.9H367V380.5H366V377.6H365V376.5H364V378.9H363V377.4H362V372.3H361V383.1H360V373.4H359V376.5H358V381.2H357V381.8H356V382.3H355V377.1H354V373.4H353V378.7H352V382.1H351V381.2H350V372.6H349V383.3H348V377.8H347V378.2H346V386.6H345V377.3H344V381.1H343V369.9H342V377.3H341V378.4H340V375.1H339V376.2H338V381.6H337V379.7H336V381.8H335V377.0H334V375.8H333V375.5H332V376.8H331V391.6H330V377.8H329V378.8H328V374.5H327V381.0H326V384.9H325V371.5H324V371.6H323V377.8H322V381.9H321V379.8H320V371.9H319V378.0H318V376.6H317V379.8H316V389.3H315V371.8H314V379.8H313V379.8H312V375.2H311V377.1H310V375.3H309V374.3H308V376.0H307V378.3H306V385.6H305V375.9H304V372.1H303V378.1H302V375.2H301V386.9H300V372.9H299V381.3H298V376.1H297V379.6H296V385.4H295V373.7H294V377.6H293V372.8H292V379.4H291V378.3H290V378.1H289V371.0H288V380.3H287V378.9H286V385.7H285V378.4H284V372.2H283V370.8H282V381.4H281V382.9H280V372.5H279V378.7H278V375.2H277V376.7H276V386.8H275V376.1H274V372.8H273V376.8H272V372.5H271V380.1H270V378.3H269V379.6H268V373.9H267V377.0H266V384.4H265V382.0H264V376.6H263V380.5H262V381.9H261V380.8H260V382.7H259V377.0H258V373.8H257V376.3H256V382.4H255V380.5H254V374.3H253V375.5H252V379.6H251V382.9H250V385.3H249V375.6H248V374.8H247V379.3H246V378.2H245V382.6H244V375.9H243V378.5H242V375.5H241V376.2H240V377.1H239V370.6H238V375.4H237V375.4H236V378.5H235V386.6H234V372.3H233V379.5H232V380.1H231V371.8H230V389.6H229V373.4H228V376.3H227V380.6H226V382.7H225V386.2H224V371.8H223V369.4H222V374.9H221V379.6H220V385.6H219V368.3H218V378.2H217V372.7H216V378.9H215V381.3H214V373.6H213V375.1H212V373.1H211V380.1H210V379.4H209V375.0H208V378.7H207V376.9H206V377.7H205V385.5H204V371.5H203V377.1H202V375.3H201V379.9H200V379.8H199V374.8H198V375.5H197V373.7H196V376.3H195V382.2H194V381.3H193V373.5H192V378.6H191V376.9H190V381.9H189V374.6H188V378.7H187V375.6H186V374.3H185V382.3H184V376.4H183V373.1H182V372.1H181V377.1H180V381.5H179V370.1H178V375.5H177V375.7H176V375.8H175V382.7H174V382.3H173V381.2H172V379.3H171V377.4H170V381.2H169V380.1H168V376.9H167V377.3H166V377.4H165V382.1H164V379.8H163V377.4H162V372.1H161V382.0H160V376.5H159V387.7H158V374.6H157V377.3H156V378.9H155V378.3H154V380.3H153V371.6H152V381.6H151V379.4H150V377.5H149V378.5H148V375.2H147V377.5H146V381.9H145V380.2H144V379.1H143V371.6H142V374.8H141V372.8H140V383.1H139V388.5H138V374.7H137V375.3H136V374.1H135V379.5H134V394.8H133V368.6H132V373.2H131V377.7H130V383.0H129V381.5H128V370.1H127V372.7H126V376.9H125V380.9H124V379.3H123V372.4H122V373.3H121V379.2H120V376.9H119V388.3H118V372.7H117V376.0H116V379.1H115V377.2H114V389.2H113V366.8H112V373.3H111V376.9H110V378.4H109V388.0H108V377.7H107V375.1H106V376.1H105V381.0H104V381.1H103V369.0H102V376.7H101V376.3H100V382.2H99V387.1H98V374.8H97V374.0H96V372.7H95V375.5H94V384.4H93V375.4H92V376.8H91V379.7H90V374.2H89V385.6H88V378.2H87V378.1H86V374.5H85V376.6H84V379.6H83V375.0H82V368.6H81V373.8H80V375.5H79V377.7H78V374.5H77V374.1H76V383.4H75V380.5H74V386.0H73V376.4H72V367.9H71V374.7H70V374.9H69V378.2H68V382.9H67V377.2H66V375.6H65V376.5H64V377.6H63V385.1H62V374.0H61V374.7H60V378.3H59V376.4H58V383.5H57V378.1H56V374.0H55V376.8H54V381.3H53V379.0H52V376.9H51V372.9H50V375.7H49V374.3H48V377.4H47V369.2H46V372.9H45V372.0H44V376.8H43V383.9H42V370.7H41V371.8H40V371.0H39V372.7H38V382.9H37V369.2H36V371.6H35V372.2H34V374.0H33V383.2H32V367.1H31V369.3H30V369.7H29V372.0H28V384.8H27V369.7H26V369.9H25V370.9H24V374.1H23V392.6H22V366.9H21V368.0H20V369.2H19V370.3H18V378.9H17V367.2H16V368.4H15V368.4H14V370.2H13V378.1H12V367.6H11V366.7H10V367.4H9V367.5H8V369.0H7V364.2H6Z" fill="#94aa9f"/><path d="M6,361.2V358.4H7V353.7H8V355.6H9V355.2H10V355.5H11V356.1H12V349.4H13V353.4H14V354.5H15V354.1H16V355.3H17V345.9H18V352.0H19V353.1H20V353.9H21V355.3H22V345.8H23V353.0H24V353.3H25V354.1H26V354.6H27V345.4H28V352.2H29V353.0H30V352.9H31V354.2H32V343.9H33V350.8H34V352.9H35V353.0H36V354.1H37V344.7H38V349.6H39V351.8H40V353.4H41V353.8H42V340.7H43V348.4H44V351.4H45V351.6H46V353.3H47V344.1H48V345.9H49V347.7H50V350.3H51V349.7H52V344.2H53V345.2H54V343.3H55V345.1H56V343.5H57V346.0H58V341.7H59V342.3H60V344.0H61V346.7H62V341.2H63V337.8H64V347.2H65V345.1H66V343.7H67V343.8H68V346.9H69V346.8H70V345.9H71V343.8H72V344.3H73V346.8H74V349.6H75V348.0H76V350.0H77V346.4H78V343.4H79V344.1H80V348.5H81V344.0H82V345.9H83V340.4H84V343.5H85V343.9H86V343.9H87V346.4H88V340.3H89V347.4H90V343.8H91V346.4H92V350.5H93V341.6H94V344.5H95V344.3H96V343.7H97V343.1H98V339.9H99V341.6H100V347.6H101V349.7H102V351.2H103V339.5H104V348.4H105V345.3H106V343.2H107V346.6H108V344.2H109V346.1H110V353.0H111V344.7H112V352.3H113V336.3H114V343.5H115V350.7H116V344.8H117V349.2H118V340.8H119V346.4H120V349.1H121V348.9H122V350.0H123V337.7H124V347.3H125V343.4H126V350.1H127V351.5H128V340.8H129V345.3H130V346.2H131V347.3H132V350.6H133V337.4H134V339.0H135V347.1H136V346.9H137V353.6H138V339.2H139V340.8H140V342.7H141V348.2H142V345.9H143V345.3H144V344.5H145V345.2H146V350.1H147V342.6H148V345.2H149V341.7H150V348.4H151V345.4H152V348.6H153V341.8H154V341.8H155V347.7H156V348.8H157V349.7H158V338.3H159V344.1H160V348.1H161V345.1H162V341.4H163V340.8H164V342.4H165V347.1H166V348.8H167V348.0H168V345.7H169V346.0H170V342.8H171V342.8H172V344.7H173V347.5H174V342.9H175V348.4H176V351.1H177V346.2H178V345.8H179V349.1H180V341.7H181V347.2H182V351.9H183V342.3H184V342.7H185V346.7H186V344.7H187V346.0H188V343.1H189V343.4H190V345.0H191V345.5H192V350.1H193V344.3H194V343.4H195V342.2H196V342.1H197V343.3H198V344.3H199V341.7H200V345.7H201V347.0H202V343.7H203V344.1H204V340.1H205V347.7H206V347.9H207V343.2H208V350.8H209V340.4H210V345.7H211V347.4H212V348.2H213V347.6H214V335.1H215V345.5H216V348.2H217V342.5H218V343.8H219V342.2H220V343.4H221V344.5H222V348.8H223V347.9H224V340.6H225V347.0H226V346.6H227V346.9H228V346.9H229V340.3H230V345.3H231V343.2H232V344.6H233V353.1H234V340.7H235V345.7H236V347.3H237V345.9H238V349.2H239V340.2H240V340.7H241V348.5H242V347.0H243V348.5H244V335.5H245V344.0H246V342.9H247V347.9H248V344.0H249V339.4H250V341.1H251V342.1H252V345.7H253V349.2H254V347.6H255V343.3H256V346.6H257V344.7H258V346.2H259V343.7H260V342.8H261V350.2H262V350.4H263V349.5H264V346.3H265V344.1H266V345.8H267V343.7H268V349.5H269V341.1H270V338.0H271V345.4H272V346.2H273V347.1H274V341.7H275V341.3H276V342.3H277V342.0H278V348.9H279V347.9H280V341.7H281V342.2H282V350.8H283V347.3H284V346.8H285V349.5H286V345.5H287V342.6H288V350.6H289V349.5H290V343.6H291V346.5H292V345.7H293V349.3H294V348.8H295V343.0H296V340.7H297V347.1H298V349.6H299V349.8H300V345.1H301V341.8H302V352.2H303V343.7H304V346.8H305V341.8H306V346.7H307V346.4H308V343.0H309V346.8H310V341.0H311V346.9H312V347.9H313V346.6H314V352.0H315V335.5H316V343.1H317V346.9H318V350.6H319V350.5H320V338.5H321V347.2H322V345.4H323V347.8H324V349.7H325V335.2H326V343.8H327V342.4H328V345.7H329V345.6H330V338.8H331V347.7H332V345.6H333V343.2H334V344.4H335V341.6H336V344.0H337V348.2H338V348.4H339V348.6H340V343.4H341V341.6H342V348.8H343V343.6H344V346.0H345V341.8H346V343.7H347V346.9H348V344.2H349V346.9H350V343.1H351V345.6H352V348.7H353V350.1H354V349.0H355V343.0H356V346.9H357V346.9H358V344.3H359V344.8H360V343.5H361V341.5H362V348.9H363V352.9H364V354.3H365V352.4H366V347.1H367V342.8H368V349.9H369V342.3H370V343.4H371V346.7H372V342.5H373V351.2H374V344.5H375V340.6H376V345.3H377V343.7H378V352.4H379V352.3H380V347.8H381V348.2H382V341.8H383V346.6H384V344.6H385V345.6H386V338.7H387V344.9H388V345.1H389V343.8H390V343.9H391V342.2H392V344.3H393V344.8H394V344.9H395V342.3H396V342.2H397V347.4H398V342.9H399V345.1H400V347.5H401V340.0H402V346.9H403V352.9H404V351.5H405V344.7H406V340.1H407V343.1H408V347.6H409V346.7H410V350.8H411V338.6H412V343.8H413V343.1H414V347.3H415V349.1H416V336.3H417V343.9H418V342.8H419V348.4H420V345.0H421V339.7H422V345.1H423V343.9H424V349.0H425V348.8H426V336.3H427V348.6H428V347.7H429V343.4H430V349.5H431V340.0H432V341.7H433V345.2H434V354.8H435V346.6H436V341.1H437V340.8H438V344.8H439V346.6H440V350.9H441V344.8H442V346.8H443V348.7H444V354.0H445V350.7H446V343.2H447V341.6H448V338.1H449V347.2H450V345.8H451V338.2H452V341.0H453V338.0H454V340.0H455V336.7H456V344.9H457V342.1H458V346.1H459V345.7H460V342.1H461V342.3H462V342.8H463V348.1H464V342.4H465V334.0H466V348.3H467V336.0H468V336.7H469V341.7H470V341.5H471V341.1H472V341.0H473V337.0H474V339.1H475V343.1H476V347.9H477V335.9H478V339.5H479V351.1H480V338.4H481V336.6H482V343.9H483V347.3H484V341.0H485V347.4H486V336.5H487V342.6H488V336.2H489V338.3H490V340.3H491V339.5H492V336.3H493V341.7H494V345.9H495V344.0H496V337.0H497V337.0H498V336.4H499V344.6H500V351.4H501V343.9H502V341.4H503V347.2H504V338.7H505V345.3H506V352.9H507V342.6H508V340.0H509V339.8H510V349.7H511V350.7H512V329.8H513V336.4H514V334.5H515V345.0H516V342.1H517V337.9H518V341.7H519V346.9H520V338.7H521V346.3H522V336.7H523V336.4H524V340.4H525V345.5H526V345.7H527V340.3H528V344.3H529V344.8H530V339.9H531V347.0H532V344.4H533V337.2H534V338.2H535V345.7H536V341.2H537V343.0H538V338.7H539V340.5H540V348.1H541V348.9H542V340.0H543V340.8H544V344.6H545V341.5H546V346.1H547V335.8H548V341.6H549V343.3H550V347.3H551V348.5H552V337.2H553V344.3H554V338.1H555V344.1H556V343.5H557V341.7H558V343.3H559V336.3H560V344.1H561V342.3H562V342.6H563V337.4H564V340.3H565V344.8H566V350.2H567V342.4H568V341.9H569V340.9H570V346.0H571V344.9H572V342.3H573V337.6H574V338.4H575V342.5H576V345.4H577V339.1H578V345.9H579V352.1H580V339.4H581V339.8H582V343.2H583V336.0H584V340.9H585V342.6H586V339.2H587V339.4H588V340.6H589V338.4H590V344.8H591V342.0H592V339.2H593V335.8H594V349.1H595V344.0H596V343.4H597V345.7H598V344.5H599V338.9H600V342.8H601V341.2H602V346.4H603V337.6H604V344.5H605V345.3H606V346.1H607V348.7H608V345.7H609V348.8H610V349.1H611V351.8H612V349.8H613V341.9H614V346.7H615V345.6H616V348.5H617V345.4H618V337.4H619V344.3H620V344.4H621V345.0H622V334.0H623V333.5H624V340.7H625V339.3H626V340.5H627V346.8H628V340.1H629V343.0H630V340.1H631V342.7H632V348.9H633V344.9H634V343.7H635V347.6H636V347.9H637V351.2H638V346.0H639V349.3H640V346.4H641V346.0H642V343.0H643V345.9H644V336.7H645V345.0H646V341.5H647V341.9H648V339.9H649V349.4H650V343.9H651V341.3H652V346.6H653V343.1H654V341.6H655V343.9H656V349.0H657V349.1H658V345.4H659V346.2H660V349.4H661V346.9H662V345.8H663V340.6H664V343.5H665V344.4H666V353.8H667V344.8H668V340.9H669V342.3H670V344.5H671V345.9H672V346.8H673V347.8H674V343.2H675V349.4H676V347.4H677V344.7H678V342.9H679V346.0H680V347.5H681V347.8H682V346.4H683V347.4H684V343.3H685V337.6H686V352.0H687V351.1H688V354.3H689V355.0H690V356.2H691V358.1H692V359.7H693V361.2V362.3H692V363.1H691V366.4H690V367.7H689V367.6H688V369.3H687V371.4H686V383.9H685V377.5H684V377.4H683V373.2H682V376.2H681V375.1H680V380.1H679V374.6H678V374.1H677V375.1H676V378.6H675V373.5H674V376.3H673V375.3H672V378.2H671V371.2H670V380.1H669V376.8H668V377.7H667V375.5H666V378.6H665V382.4H664V376.6H663V373.5H662V371.5H661V375.0H660V371.2H659V377.9H658V375.0H657V373.9H656V373.4H655V375.4H654V385.9H653V378.0H652V382.8H651V377.7H650V385.4H649V381.3H648V385.9H647V383.5H646V386.3H645V382.9H644V386.0H643V385.1H642V374.5H641V372.2H640V374.2H639V373.4H638V373.0H637V372.1H636V375.1H635V379.8H634V386.1H633V378.7H632V379.2H631V380.0H630V378.4H629V388.8H628V377.4H627V384.1H626V379.1H625V379.7H624V380.9H623V384.3H622V385.0H621V379.2H620V382.8H619V385.2H618V373.7H617V376.1H616V373.6H615V374.2H614V375.8H613V374.3H612V375.5H611V375.4H610V373.8H609V377.5H608V372.6H607V375.9H606V378.6H605V378.1H604V384.4H603V375.2H602V378.8H601V375.6H600V376.8H599V381.0H598V380.2H597V371.4H596V382.4H595V384.3H594V391.4H593V384.6H592V376.0H591V382.1H590V382.9H589V383.6H588V377.0H587V379.0H586V385.9H585V386.2H584V389.9H583V377.5H582V377.0H581V376.4H580V380.9H579V385.5H578V375.7H577V380.0H576V381.2H575V383.1H574V380.4H573V375.8H572V374.4H571V383.3H570V379.3H569V373.2H568V384.9H567V378.1H566V376.9H565V378.5H564V385.0H563V383.9H562V381.3H561V383.6H560V378.4H559V379.3H558V380.2H557V380.3H556V378.3H555V380.8H554V387.5H553V382.4H552V372.5H551V379.2H550V385.3H549V385.0H548V384.7H547V377.3H546V378.0H545V381.8H544V381.6H543V382.4H542V373.7H541V376.6H540V377.9H539V386.1H538V382.8H537V374.6H536V376.7H535V380.7H534V382.2H533V394.0H532V380.9H531V380.9H530V375.7H529V385.1H528V387.1H527V376.3H526V380.8H525V378.1H524V384.8H523V388.3H522V380.4H521V370.0H520V379.4H519V382.0H518V381.0H517V380.3H516V382.0H515V381.5H514V386.9H513V389.7H512V380.0H511V375.7H510V378.4H509V377.8H508V384.2H507V376.4H506V375.5H505V384.2H504V372.7H503V385.7H502V375.1H501V380.1H500V381.3H499V384.8H498V382.3H497V383.1H496V385.1H495V383.5H494V386.8H493V383.5H492V377.5H491V376.6H490V380.4H489V380.6H488V383.8H487V380.3H486V384.5H485V376.9H484V385.3H483V383.9H482V388.9H481V379.9H480V385.5H479V374.9H478V388.8H477V377.1H476V372.2H475V378.0H474V388.5H473V379.5H472V386.3H471V379.1H470V378.5H469V383.9H468V381.6H467V385.6H466V379.8H465V380.9H464V386.4H463V388.0H462V378.8H461V375.4H460V381.4H459V371.4H458V384.3H457V381.3H456V385.2H455V378.6H454V380.6H453V379.6H452V384.8H451V381.1H450V379.3H449V384.5H448V378.2H447V385.6H446V374.0H445V374.4H444V373.7H443V380.4H442V386.4H441V373.8H440V368.9H439V378.8H438V379.3H437V383.6H436V377.4H435V374.7H434V376.8H433V378.6H432V387.0H431V370.6H430V376.1H429V375.4H428V380.1H427V384.4H426V377.0H425V374.4H424V376.7H423V377.2H422V383.8H421V372.6H420V373.9H419V379.2H418V376.9H417V383.5H416V375.6H415V374.0H414V377.2H413V377.9H412V383.1H411V377.3H410V376.2H409V378.4H408V376.2H407V377.3H406V372.2H405V375.9H404V374.7H403V376.8H402V379.0H401V372.9H400V371.1H399V380.3H398V377.1H397V380.6H396V371.6H395V379.2H394V372.2H393V374.6H392V380.7H391V377.7H390V376.2H389V373.0H388V373.0H387V376.8H386V380.7H385V376.2H384V378.0H383V381.5H382V381.2H381V375.6H380V378.1H379V373.7H378V377.4H377V385.3H376V383.9H375V375.4H374V379.7H373V375.9H372V385.5H371V372.7H370V378.1H369V373.5H368V378.9H367V378.9H366V377.6H365V376.5H364V378.9H363V374.9H362V372.3H361V383.1H360V373.4H359V376.5H358V378.5H357V381.8H356V381.9H355V377.1H354V373.4H353V378.7H352V378.4H351V381.2H350V372.6H349V380.7H348V377.8H347V378.2H346V385.4H345V374.6H344V380.8H343V369.9H342V377.3H341V378.4H340V375.1H339V376.2H338V379.0H337V379.7H336V381.8H335V374.3H334V375.8H333V375.5H332V375.4H331V389.9H330V376.5H329V377.8H328V373.7H327V381.0H326V384.9H325V371.1H324V370.7H323V376.3H322V380.4H321V379.8H320V371.9H319V378.0H318V376.6H317V376.6H316V386.4H315V371.8H314V379.8H313V379.8H312V373.5H311V377.1H310V373.2H309V374.3H308V376.0H307V377.0H306V385.6H305V375.9H304V372.1H303V378.1H302V374.7H301V386.9H300V372.9H299V379.4H298V376.1H297V377.9H296V385.4H295V372.2H294V377.6H293V372.8H292V376.7H291V378.3H290V377.2H289V371.0H288V380.3H287V378.9H286V385.7H285V378.4H284V372.2H283V370.8H282V381.0H281V382.1H280V372.1H279V376.7H278V375.2H277V375.8H276V383.3H275V376.1H274V372.8H273V376.8H272V371.5H271V380.1H270V378.3H269V377.6H268V373.9H267V377.0H266V384.4H265V379.6H264V376.6H263V377.0H262V379.1H261V380.8H260V382.7H259V377.0H258V373.8H257V376.3H256V382.4H255V380.5H254V374.3H253V375.5H252V379.6H251V381.1H250V385.3H249V375.6H248V374.8H247V377.7H246V378.2H245V382.6H244V375.9H243V378.3H242V375.5H241V374.1H240V377.1H239V369.9H238V375.4H237V373.0H236V378.5H235V386.6H234V372.3H233V379.5H232V379.1H231V371.8H230V389.6H229V373.4H228V376.3H227V378.5H226V382.7H225V386.2H224V370.8H223V368.1H222V374.9H221V376.9H220V384.5H219V367.9H218V378.2H217V372.7H216V378.9H215V381.3H214V371.4H213V374.4H212V373.1H211V380.1H210V379.4H209V375.0H208V378.7H207V376.9H206V377.7H205V382.9H204V371.4H203V374.4H202V374.0H201V379.9H200V377.9H199V374.1H198V375.5H197V373.7H196V375.4H195V379.7H194V380.2H193V373.5H192V376.1H191V374.4H190V381.4H189V374.2H188V376.2H187V373.8H186V374.3H185V379.1H184V376.4H183V373.1H182V372.1H181V377.1H180V381.5H179V369.4H178V375.5H177V373.2H176V374.6H175V380.5H174V378.9H173V378.4H172V379.3H171V375.3H170V381.2H169V380.1H168V375.5H167V377.3H166V377.4H165V380.8H164V379.8H163V377.3H162V372.1H161V380.5H160V376.5H159V387.7H158V374.6H157V377.3H156V376.9H155V378.3H154V380.3H153V371.6H152V378.7H151V378.1H150V377.2H149V377.2H148V375.2H147V376.8H146V378.7H145V379.9H144V379.1H143V370.9H142V374.8H141V371.6H140V379.4H139V387.4H138V374.7H137V375.3H136V373.9H135V378.4H134V390.2H133V368.2H132V372.9H131V377.7H130V380.2H129V381.5H128V370.1H127V372.7H126V376.9H125V380.9H124V379.3H123V370.9H122V373.3H121V379.2H120V376.9H119V386.2H118V372.2H117V376.0H116V379.1H115V377.2H114V389.2H113V366.3H112V373.3H111V374.2H110V378.4H109V385.4H108V375.3H107V375.1H106V373.7H105V378.7H104V381.1H103V369.0H102V376.7H101V376.3H100V380.9H99V387.1H98V373.3H97V374.0H96V372.7H95V375.5H94V384.4H93V375.4H92V375.1H91V377.5H90V374.1H89V385.6H88V375.4H87V378.1H86V373.1H85V375.4H84V379.6H83V375.0H82V368.0H81V373.8H80V374.5H79V377.7H78V374.5H77V373.3H76V379.7H75V380.5H74V383.4H73V376.4H72V367.2H71V374.7H70V374.4H69V378.2H68V379.1H67V377.2H66V375.6H65V376.5H64V377.6H63V385.1H62V374.0H61V374.1H60V377.2H59V376.0H58V382.5H57V376.8H56V374.0H55V376.8H54V379.1H53V379.0H52V376.9H51V372.9H50V375.7H49V374.3H48V377.4H47V369.2H46V371.8H45V372.0H44V374.2H43V383.9H42V368.9H41V370.0H40V370.3H39V372.7H38V379.3H37V369.2H36V370.6H35V370.7H34V374.0H33V383.2H32V367.1H31V369.3H30V369.4H29V372.0H28V380.6H27V368.5H26V369.9H25V370.9H24V374.1H23V388.0H22V366.9H21V368.0H20V369.2H19V370.3H18V378.9H17V367.2H16V368.4H15V368.4H14V369.5H13V376.3H12V367.6H11V366.7H10V367.4H9V367.5H8V367.8H7V364.0H6Z" fill="#2a4a3c"/><rect x="5" y="161.0" width="688" height="1" fill="#1e362b"/><rect x="5" y="360.7" width="688" height="1" fill="#1e362b"/><rect x="692.5" y="161.15" width="6.5" height="0.7" fill="#8e9a94"/><rect x="692.5" y="360.84999999999997" width="6.5" height="0.7" fill="#8e9a94"/><rect x="5" y="260.95" width="694" height="0.95" fill="#7f9b8b"/><rect x="45.30" y="130" width="1" height="63" fill="#9fc3ae" opacity="0.10"/><rect x="45.30" y="330" width="1" height="63" fill="#9fc3ae" opacity="0.10"/><rect x="87.00" y="130" width="1" height="63" fill="#9fc3ae" opacity="0.10"/><rect x="87.00" y="330" width="1" height="63" fill="#9fc3ae" opacity="0.10"/><rect x="128.70" y="130" width="1" height="63" fill="#9fc3ae" opacity="0.10"/><rect x="128.70" y="330" width="1" height="63" fill="#9fc3ae" opacity="0.10"/><rect x="170.40" y="130" width="1" height="63" fill="#9fc3ae" opacity="0.10"/><rect x="170.40" y="330" width="1" height="63" fill="#9fc3ae" opacity="0.10"/><rect x="212.10" y="130" width="1" height="63" fill="#9fc3ae" opacity="0.10"/><rect x="212.10" y="330" width="1" height="63" fill="#9fc3ae" opacity="0.10"/><rect x="253.80" y="130" width="1" height="63" fill="#9fc3ae" opacity="0.10"/><rect x="253.80" y="330" width="1" height="63" fill="#9fc3ae" opacity="0.10"/><rect x="295.50" y="130" width="1" height="63" fill="#9fc3ae" opacity="0.10"/><rect x="295.50" y="330" width="1" height="63" fill="#9fc3ae" opacity="0.10"/><rect x="337.20" y="130" width="1" height="63" fill="#9fc3ae" opacity="0.10"/><rect x="337.20" y="330" width="1" height="63" fill="#9fc3ae" opacity="0.10"/><rect x="378.90" y="130" width="1" height="63" fill="#9fc3ae" opacity="0.10"/><rect x="378.90" y="330" width="1" height="63" fill="#9fc3ae" opacity="0.10"/><rect x="420.60" y="130" width="1" height="63" fill="#9fc3ae" opacity="0.10"/><rect x="420.60" y="330" width="1" height="63" fill="#9fc3ae" opacity="0.10"/><rect x="462.30" y="130" width="1" height="63" fill="#9fc3ae" opacity="0.10"/><rect x="462.30" y="330" width="1" height="63" fill="#9fc3ae" opacity="0.10"/><rect x="504.00" y="130" width="1" height="63" fill="#9fc3ae" opacity="0.10"/><rect x="504.00" y="330" width="1" height="63" fill="#9fc3ae" opacity="0.10"/><rect x="545.70" y="130" width="1" height="63" fill="#9fc3ae" opacity="0.10"/><rect x="545.70" y="330" width="1" height="63" fill="#9fc3ae" opacity="0.10"/><rect x="587.40" y="130" width="1" height="63" fill="#9fc3ae" opacity="0.10"/><rect x="587.40" y="330" width="1" height="63" fill="#9fc3ae" opacity="0.10"/><rect x="629.10" y="130" width="1" height="63" fill="#9fc3ae" opacity="0.10"/><rect x="629.10" y="330" width="1" height="63" fill="#9fc3ae" opacity="0.10"/><rect x="670.80" y="130" width="1" height="63" fill="#9fc3ae" opacity="0.10"/><rect x="670.80" y="330" width="1" height="63" fill="#9fc3ae" opacity="0.10"/><rect x="3.60" y="57.2" width="1" height="4.2" fill="#a2b3a9"/><rect x="24.45" y="59.3" width="1" height="2.1" fill="#8fa298"/><rect x="45.30" y="57.2" width="1" height="4.2" fill="#a2b3a9"/><rect x="66.15" y="59.3" width="1" height="2.1" fill="#8fa298"/><rect x="87.00" y="57.2" width="1" height="4.2" fill="#a2b3a9"/><rect x="107.85" y="59.3" width="1" height="2.1" fill="#8fa298"/><rect x="128.70" y="57.2" width="1" height="4.2" fill="#a2b3a9"/><rect x="149.55" y="59.3" width="1" height="2.1" fill="#8fa298"/><rect x="170.40" y="57.2" width="1" height="4.2" fill="#a2b3a9"/><rect x="191.25" y="59.3" width="1" height="2.1" fill="#8fa298"/><rect x="212.10" y="57.2" width="1" height="4.2" fill="#a2b3a9"/><rect x="232.95" y="59.3" width="1" height="2.1" fill="#8fa298"/><rect x="253.80" y="57.2" width="1" height="4.2" fill="#a2b3a9"/><rect x="274.65" y="59.3" width="1" height="2.1" fill="#8fa298"/><rect x="295.50" y="57.2" width="1" height="4.2" fill="#a2b3a9"/><rect x="316.35" y="59.3" width="1" height="2.1" fill="#8fa298"/><rect x="337.20" y="57.2" width="1" height="4.2" fill="#a2b3a9"/><rect x="358.05" y="59.3" width="1" height="2.1" fill="#8fa298"/><rect x="378.90" y="57.2" width="1" height="4.2" fill="#a2b3a9"/><rect x="399.75" y="59.3" width="1" height="2.1" fill="#8fa298"/><rect x="420.60" y="57.2" width="1" height="4.2" fill="#a2b3a9"/><rect x="441.45" y="59.3" width="1" height="2.1" fill="#8fa298"/><rect x="462.30" y="57.2" width="1" height="4.2" fill="#a2b3a9"/><rect x="483.15" y="59.3" width="1" height="2.1" fill="#8fa298"/><rect x="504.00" y="57.2" width="1" height="4.2" fill="#a2b3a9"/><rect x="524.85" y="59.3" width="1" height="2.1" fill="#8fa298"/><rect x="545.70" y="57.2" width="1" height="4.2" fill="#a2b3a9"/><rect x="566.55" y="59.3" width="1" height="2.1" fill="#8fa298"/><rect x="587.40" y="57.2" width="1" height="4.2" fill="#a2b3a9"/><rect x="608.25" y="59.3" width="1" height="2.1" fill="#8fa298"/><rect x="629.10" y="57.2" width="1" height="4.2" fill="#a2b3a9"/><rect x="649.95" y="59.3" width="1" height="2.1" fill="#8fa298"/><rect x="670.80" y="57.2" width="1" height="4.2" fill="#a2b3a9"/><rect x="691.65" y="59.3" width="1" height="2.1" fill="#8fa298"/><rect x="3.2" y="61.4" width="0.8" height="399" fill="#0a0a0a"/><rect x="4" y="61.4" width="1" height="399" fill="#e0525c"/><path d="M1,55.2 H7 V58 L4,61.6 L1,58 Z" fill="#2f8df0"/><rect x="3.6" y="48" width="0.9" height="8" fill="#9fb0a8"/><rect x="11" y="63.4" width="6" height="6" fill="#9a9aa0"/><path d="M11.6,69 L16.6,64 V69 Z" fill="#222"/><rect x="691.4" y="63.4" width="6" height="6" fill="#9a9aa0"/><path d="M692,64 L697,69 H692 Z" fill="#222"/></svg>
<span class="t" style="left:6.20px;top:49.43px;font-size:6.4px;line-height:7.68px;color:#8fa198;transform:scaleX(0.9098);">hms</span>
<span class="t" style="left:39.85px;top:49.33px;font-size:6.4px;line-height:7.68px;color:#c3ccc7;transform:scaleX(0.9473);">0:10</span>
<span class="t" style="left:81.59px;top:49.33px;font-size:6.4px;line-height:7.68px;color:#c3ccc7;transform:scaleX(0.9473);">0:20</span>
<span class="t" style="left:123.34px;top:49.33px;font-size:6.4px;line-height:7.68px;color:#c3ccc7;transform:scaleX(0.9473);">0:30</span>
<span class="t" style="left:165.08px;top:49.33px;font-size:6.4px;line-height:7.68px;color:#c3ccc7;transform:scaleX(0.9473);">0:40</span>
<span class="t" style="left:206.83px;top:49.33px;font-size:6.4px;line-height:7.68px;color:#c3ccc7;transform:scaleX(0.9473);">0:50</span>
<span class="t" style="left:248.57px;top:49.33px;font-size:6.4px;line-height:7.68px;color:#c3ccc7;transform:scaleX(0.9473);">1:00</span>
<span class="t" style="left:290.32px;top:49.33px;font-size:6.4px;line-height:7.68px;color:#c3ccc7;transform:scaleX(0.9473);">1:10</span>
<span class="t" style="left:332.06px;top:49.33px;font-size:6.4px;line-height:7.68px;color:#c3ccc7;transform:scaleX(0.9473);">1:20</span>
<span class="t" style="left:373.81px;top:49.33px;font-size:6.4px;line-height:7.68px;color:#c3ccc7;transform:scaleX(0.9473);">1:30</span>
<span class="t" style="left:415.56px;top:49.33px;font-size:6.4px;line-height:7.68px;color:#c3ccc7;transform:scaleX(0.9473);">1:40</span>
<span class="t" style="left:457.30px;top:49.33px;font-size:6.4px;line-height:7.68px;color:#c3ccc7;transform:scaleX(0.9473);">1:50</span>
<span class="t" style="left:499.05px;top:49.33px;font-size:6.4px;line-height:7.68px;color:#c3ccc7;transform:scaleX(0.9473);">2:00</span>
<span class="t" style="left:540.79px;top:49.33px;font-size:6.4px;line-height:7.68px;color:#c3ccc7;transform:scaleX(0.9473);">2:10</span>
<span class="t" style="left:582.53px;top:49.33px;font-size:6.4px;line-height:7.68px;color:#c3ccc7;transform:scaleX(0.9473);">2:20</span>
<span class="t" style="left:624.28px;top:49.33px;font-size:6.4px;line-height:7.68px;color:#c3ccc7;transform:scaleX(0.9473);">2:30</span>
<span class="t" style="left:666.02px;top:49.33px;font-size:6.4px;line-height:7.68px;color:#c3ccc7;transform:scaleX(0.9473);">2:40</span>
<div style="left:0.00px;top:460.40px;width:700.00px;height:2.20px;background:#0c0c0c"></div>
<div style="left:0.00px;top:462.60px;width:700.00px;height:4.40px;background:#2b2b2b"></div>
<div style="left:699.00px;top:1.00px;width:1.00px;height:466.00px;background:#1e1e1e"></div>
</div>
<div id="dlg">
<div style="left:80.20px;top:103.90px;width:367.30px;height:321.80px;border-radius:2px;box-shadow:0 0 0 0.8px rgba(218,218,228,0.8),0 0 3px 0.5px rgba(110,110,130,0.28)"></div>
<div style="left:80.20px;top:119.70px;width:367.30px;height:306.00px;background:#232323;border-radius:0 0 2px 2px"></div>
<div style="left:80.20px;top:103.90px;width:367.30px;height:15.90px;background:#ffffff;border-radius:2px 2px 0 0"></div>
<span class="t" style="left:84.90px;top:106.93px;font-size:7.6px;line-height:9.12px;color:#141414;transform:scaleX(0.9500);">Effect - Hiss Reduction</span>
<div style="left:436.20px;top:107.40px;width:10.80px;height:10.60px;background:#c9444c"></div>
<svg class="abs" style="left:436.2px;top:107.4px" width="10.8" height="10.6" viewBox="0 0 10.8 10.6"><path d="M4,4 L6.7,6.7 M6.7,4 L4,6.7" stroke="#fff" stroke-width="1.1" fill="none"/></svg>
<span class="t" style="left:87.90px;top:130.80px;font-size:7.3px;line-height:8.76px;color:#a8a8a8;transform:scaleX(0.7805);">Presets:</span>
<div style="left:111.00px;top:129.20px;width:116.00px;height:10.00px;background:#1b1b1b;border:0.6px solid #2e2e2e;border-radius:2px;box-sizing:border-box"></div>
<span class="t" style="left:115.00px;top:130.80px;font-size:7.3px;line-height:8.76px;color:#dedede;transform:scaleX(0.8663);">(Custom)</span>
<svg class="abs" style="left:218.90px;top:132.30px" width="6" height="4" viewBox="0 0 6 4"><path d="M1,0.9 L3,2.9 L5,0.9" stroke="#c8c8c8" stroke-width="0.9" fill="none"/></svg>
<svg class="abs" style="left:233.5px;top:129.4px" width="10.5" height="8.4" viewBox="0 0 10.5 8.4"><path d="M4.5,0.4 H5.8 V3.4 H7.4 L5.15,5.6 L2.9,3.4 H4.5 Z" fill="#d0d0d0"/><path d="M0.5,7.9 V5.6 L2,4.2 H3 L3.6,5.9 H6.8 L7.4,4.2 H8.4 L9.9,5.6 V7.9 Z" fill="#d0d0d0"/></svg>
<svg class="abs" style="left:247.8px;top:129.3px" width="8" height="10.4" viewBox="0 0 8 10.4"><path d="M0.4,1.9 H7.6 M2.8,1.6 V0.7 H5.2 V1.6" stroke="#b4b4b4" stroke-width="0.8" fill="none"/><rect x="1.1" y="2.6" width="5.8" height="7" fill="none" stroke="#ababab" stroke-width="0.8"/><rect x="2.9" y="3.9" width="2.2" height="4.6" fill="#6e6e6e"/></svg>
<div style="left:260.00px;top:129.20px;width:0.80px;height:9.80px;background:#3c3c3c"></div>
<svg class="abs" style="left:265.6px;top:129.7px" width="8.6" height="8.6" viewBox="0 0 8.4 8.4"><polygon points="4.20,0.00 5.26,2.84 8.29,2.97 5.91,4.86 6.73,7.78 4.20,6.10 1.67,7.78 2.49,4.86 0.11,2.97 3.14,2.84" fill="#c8c8c8"/></svg>
<svg class="abs" style="left:418px;top:130px" width="9" height="9" viewBox="0 0 9 9"><rect x="0.8" y="1" width="2.2" height="1.7" fill="#cfcfcf"/><path d="M2.6,2.2 L4.6,4.4 H6.4" stroke="#cfcfcf" stroke-width="0.9" fill="none"/><rect x="5.9" y="0.8" width="1.9" height="1.9" fill="#d6d6d6"/><rect x="5.9" y="3.5" width="1.9" height="1.8" fill="#d6d6d6"/><rect x="5.9" y="6" width="1.9" height="1.8" fill="#d6d6d6"/></svg>
<svg class="abs" style="left:430.4px;top:129.2px" width="10.4" height="10.4" viewBox="0 0 10.4 10.4"><circle cx="5.25" cy="5.2" r="4.4" fill="none" stroke="#c2c2c2" stroke-width="0.85"/><rect x="4.65" y="4.5" width="1.2" height="3" fill="#d0d0d0"/><rect x="4.65" y="2.9" width="1.2" height="1.1" fill="#d0d0d0"/></svg>
<div style="left:88.00px;top:145.10px;width:351.00px;height:0.80px;background:#3b3b3b"></div>
<div style="left:93.90px;top:156.00px;width:67.40px;height:11.00px;border:0.9px solid #9a9a9a;border-radius:5.5px;box-sizing:border-box;background:#2b2b2b"></div>
<span class="t" style="left:100.70px;top:158.08px;font-size:7.0px;line-height:8.40px;color:#c4c4c4;transform:scaleX(0.8717);">Capture Noise Floor</span>
<div style="left:418.30px;top:155.00px;width:16.30px;height:12.10px;background:#1d1d1d;border:0.9px solid #2d2d2d;border-radius:2.5px;box-sizing:border-box"></div>
<svg class="abs" style="left:421.4px;top:158.1px" width="9" height="5.4" viewBox="0 0 9 5.4"><path d="M0.4,1.7 H2.8 L1.6,3.1 Z" fill="#dadada"/><rect x="3.5" y="0.6" width="5.1" height="4.4" fill="#8c8c8c"/><path d="M3.5,2.1 H8.6 M3.5,3.5 H8.6 M6.05,0.6 V5" stroke="#6a6a6a" stroke-width="0.4"/></svg>
<div style="left:95.00px;top:172.20px;width:339.20px;height:116.90px;border:0.8px solid #2f2f2f;border-radius:2.5px;box-sizing:border-box"></div>
<svg class="abs" style="left:0;top:0" width="700" height="467" viewBox="0 0 700 467"><rect x="97.5" y="175.1" width="312.4" height="100.1" fill="#000"/><rect x="98.95" y="177.60" width="0.9" height="95.90" fill="#3e3e3e"/><rect x="112.96" y="177.60" width="0.9" height="95.90" fill="#262626"/><rect x="126.97" y="177.60" width="0.9" height="95.90" fill="#3e3e3e"/><rect x="140.98" y="177.60" width="0.9" height="95.90" fill="#262626"/><rect x="154.99" y="177.60" width="0.9" height="95.90" fill="#3e3e3e"/><rect x="169.00" y="177.60" width="0.9" height="95.90" fill="#262626"/><rect x="183.00" y="177.60" width="0.9" height="95.90" fill="#3e3e3e"/><rect x="197.01" y="177.60" width="0.9" height="95.90" fill="#262626"/><rect x="211.02" y="177.60" width="0.9" height="95.90" fill="#3e3e3e"/><rect x="225.03" y="177.60" width="0.9" height="95.90" fill="#262626"/><rect x="239.04" y="177.60" width="0.9" height="95.90" fill="#3e3e3e"/><rect x="253.05" y="177.60" width="0.9" height="95.90" fill="#262626"/><rect x="267.06" y="177.60" width="0.9" height="95.90" fill="#3e3e3e"/><rect x="281.07" y="177.60" width="0.9" height="95.90" fill="#262626"/><rect x="295.08" y="177.60" width="0.9" height="95.90" fill="#3e3e3e"/><rect x="309.09" y="177.60" width="0.9" height="95.90" fill="#262626"/><rect x="323.10" y="177.60" width="0.9" height="95.90" fill="#3e3e3e"/><rect x="337.10" y="177.60" width="0.9" height="95.90" fill="#262626"/><rect x="351.11" y="177.60" width="0.9" height="95.90" fill="#3e3e3e"/><rect x="365.12" y="177.60" width="0.9" height="95.90" fill="#262626"/><rect x="379.13" y="177.60" width="0.9" height="95.90" fill="#3e3e3e"/><rect x="393.14" y="177.60" width="0.9" height="95.90" fill="#262626"/><rect x="407.15" y="177.60" width="0.9" height="95.90" fill="#3e3e3e"/><rect x="99.40" y="177.15" width="308.30" height="0.9" fill="#383838"/><rect x="99.40" y="184.00" width="308.30" height="0.9" fill="#242424"/><rect x="99.40" y="190.85" width="308.30" height="0.9" fill="#383838"/><rect x="99.40" y="197.70" width="308.30" height="0.9" fill="#242424"/><rect x="99.40" y="204.55" width="308.30" height="0.9" fill="#383838"/><rect x="99.40" y="211.40" width="308.30" height="0.9" fill="#242424"/><rect x="99.40" y="218.25" width="308.30" height="0.9" fill="#383838"/><rect x="99.40" y="225.10" width="308.30" height="0.9" fill="#242424"/><rect x="99.40" y="231.95" width="308.30" height="0.9" fill="#383838"/><rect x="99.40" y="238.80" width="308.30" height="0.9" fill="#242424"/><rect x="99.40" y="245.65" width="308.30" height="0.9" fill="#383838"/><rect x="99.40" y="252.50" width="308.30" height="0.9" fill="#242424"/><rect x="99.40" y="259.35" width="308.30" height="0.9" fill="#383838"/><rect x="99.40" y="266.20" width="308.30" height="0.9" fill="#242424"/><rect x="99.40" y="273.05" width="308.30" height="0.9" fill="#383838"/><rect x="99.1" y="176.60" width="0.7" height="99.00" fill="#6a6a6a"/><rect x="97.2" y="275" width="313.5" height="0.85" fill="#c4c4c4"/><rect x="410.1" y="176.60" width="0.75" height="99.20" fill="#a2a2a2"/><rect x="99.00" y="275.6" width="0.8" height="4.2" fill="#a4a4a4"/><rect x="113.01" y="275.6" width="0.8" height="3" fill="#a4a4a4"/><rect x="127.02" y="275.6" width="0.8" height="4.2" fill="#a4a4a4"/><rect x="141.03" y="275.6" width="0.8" height="3" fill="#a4a4a4"/><rect x="155.04" y="275.6" width="0.8" height="4.2" fill="#a4a4a4"/><rect x="169.05" y="275.6" width="0.8" height="3" fill="#a4a4a4"/><rect x="183.05" y="275.6" width="0.8" height="4.2" fill="#a4a4a4"/><rect x="197.06" y="275.6" width="0.8" height="3" fill="#a4a4a4"/><rect x="211.07" y="275.6" width="0.8" height="4.2" fill="#a4a4a4"/><rect x="225.08" y="275.6" width="0.8" height="3" fill="#a4a4a4"/><rect x="239.09" y="275.6" width="0.8" height="4.2" fill="#a4a4a4"/><rect x="253.10" y="275.6" width="0.8" height="3" fill="#a4a4a4"/><rect x="267.11" y="275.6" width="0.8" height="4.2" fill="#a4a4a4"/><rect x="281.12" y="275.6" width="0.8" height="3" fill="#a4a4a4"/><rect x="295.13" y="275.6" width="0.8" height="4.2" fill="#a4a4a4"/><rect x="309.14" y="275.6" width="0.8" height="3" fill="#a4a4a4"/><rect x="323.15" y="275.6" width="0.8" height="4.2" fill="#a4a4a4"/><rect x="337.15" y="275.6" width="0.8" height="3" fill="#a4a4a4"/><rect x="351.16" y="275.6" width="0.8" height="4.2" fill="#a4a4a4"/><rect x="365.17" y="275.6" width="0.8" height="3" fill="#a4a4a4"/><rect x="379.18" y="275.6" width="0.8" height="4.2" fill="#a4a4a4"/><rect x="393.19" y="275.6" width="0.8" height="3" fill="#a4a4a4"/><rect x="407.20" y="275.6" width="0.8" height="4.2" fill="#a4a4a4"/><rect x="410.5" y="177.20" width="5" height="0.8" fill="#a0a0a0"/><rect x="410.5" y="184.05" width="3.3" height="0.8" fill="#a0a0a0"/><rect x="410.5" y="190.90" width="5" height="0.8" fill="#a0a0a0"/><rect x="410.5" y="197.75" width="3.3" height="0.8" fill="#a0a0a0"/><rect x="410.5" y="204.60" width="5" height="0.8" fill="#a0a0a0"/><rect x="410.5" y="211.45" width="3.3" height="0.8" fill="#a0a0a0"/><rect x="410.5" y="218.30" width="5" height="0.8" fill="#a0a0a0"/><rect x="410.5" y="225.15" width="3.3" height="0.8" fill="#a0a0a0"/><rect x="410.5" y="232.00" width="5" height="0.8" fill="#a0a0a0"/><rect x="410.5" y="238.85" width="3.3" height="0.8" fill="#a0a0a0"/><rect x="410.5" y="245.70" width="5" height="0.8" fill="#a0a0a0"/><rect x="410.5" y="252.55" width="3.3" height="0.8" fill="#a0a0a0"/><rect x="410.5" y="259.40" width="5" height="0.8" fill="#a0a0a0"/><rect x="410.5" y="266.25" width="3.3" height="0.8" fill="#a0a0a0"/><rect x="410.5" y="273.10" width="5" height="0.8" fill="#a0a0a0"/><rect x="99.4" y="224.95" width="308.30" height="1.2" fill="#3f55dd"/><rect x="98.2" y="224.25" width="2.6" height="2.6" fill="#fff"/><rect x="406.6" y="224.25" width="2.6" height="2.6" fill="#fff"/></svg>
<span class="t" style="left:96.27px;top:282.25px;font-size:5.7px;line-height:6.84px;color:#e2e2e2;transform:scaleX(0.9000);">Hz</span>
<span class="t" style="left:124.71px;top:282.25px;font-size:5.7px;line-height:6.84px;color:#e2e2e2;transform:scaleX(0.9000);">2k</span>
<span class="t" style="left:152.73px;top:282.25px;font-size:5.7px;line-height:6.84px;color:#e2e2e2;transform:scaleX(0.9000);">4k</span>
<span class="t" style="left:180.75px;top:282.25px;font-size:5.7px;line-height:6.84px;color:#e2e2e2;transform:scaleX(0.9000);">6k</span>
<span class="t" style="left:208.76px;top:282.25px;font-size:5.7px;line-height:6.84px;color:#e2e2e2;transform:scaleX(0.9000);">8k</span>
<span class="t" style="left:235.36px;top:282.25px;font-size:5.7px;line-height:6.84px;color:#e2e2e2;transform:scaleX(0.9000);">10k</span>
<span class="t" style="left:263.37px;top:282.25px;font-size:5.7px;line-height:6.84px;color:#e2e2e2;transform:scaleX(0.9000);">12k</span>
<span class="t" style="left:291.39px;top:282.25px;font-size:5.7px;line-height:6.84px;color:#e2e2e2;transform:scaleX(0.9000);">14k</span>
<span class="t" style="left:319.41px;top:282.25px;font-size:5.7px;line-height:6.84px;color:#e2e2e2;transform:scaleX(0.9000);">16k</span>
<span class="t" style="left:347.43px;top:282.25px;font-size:5.7px;line-height:6.84px;color:#e2e2e2;transform:scaleX(0.9000);">18k</span>
<span class="t" style="left:375.45px;top:282.25px;font-size:5.7px;line-height:6.84px;color:#e2e2e2;transform:scaleX(0.9000);">20k</span>
<span class="t" style="left:403.46px;top:282.25px;font-size:5.7px;line-height:6.84px;color:#e2e2e2;transform:scaleX(0.9000);">22k</span>
<span class="t" style="left:418.00px;top:174.25px;font-size:5.7px;line-height:6.84px;color:#e0e0e0;transform:scaleX(0.9000);">dB</span>
<span class="t" style="left:418.00px;top:188.38px;font-size:5.7px;line-height:6.84px;color:#e0e0e0;transform:scaleX(0.9000);">-20</span>
<span class="t" style="left:418.00px;top:202.31px;font-size:5.7px;line-height:6.84px;color:#e0e0e0;transform:scaleX(0.9000);">-40</span>
<span class="t" style="left:418.00px;top:216.24px;font-size:5.7px;line-height:6.84px;color:#e0e0e0;transform:scaleX(0.9000);">-60</span>
<span class="t" style="left:418.00px;top:230.17px;font-size:5.7px;line-height:6.84px;color:#e0e0e0;transform:scaleX(0.9000);">-80</span>
<span class="t" style="left:418.00px;top:244.10px;font-size:5.7px;line-height:6.84px;color:#e0e0e0;transform:scaleX(0.9000);">-100</span>
<span class="t" style="left:418.00px;top:258.03px;font-size:5.7px;line-height:6.84px;color:#e0e0e0;transform:scaleX(0.9000);">-120</span>
<span class="t" style="left:418.00px;top:271.96px;font-size:5.7px;line-height:6.84px;color:#e0e0e0;transform:scaleX(0.9000);">-140</span>
<span class="t" style="left:94.10px;top:294.80px;font-size:7.3px;line-height:8.76px;color:#a8a8a8;transform:scaleX(0.7837);">Scale:</span>
<div style="left:111.60px;top:294.00px;width:55.60px;height:9.20px;background:#1b1b1b;border:0.6px solid #2e2e2e;border-radius:2px;box-sizing:border-box"></div>
<span class="t" style="left:115.50px;top:294.80px;font-size:7.3px;line-height:8.76px;color:#dedede;transform:scaleX(0.8279);">Linear</span>
<svg class="abs" style="left:158.70px;top:296.60px" width="6" height="4" viewBox="0 0 6 4"><path d="M1,0.9 L3,2.9 L5,0.9" stroke="#c8c8c8" stroke-width="0.9" fill="none"/></svg>
<span class="t" style="left:173.00px;top:294.80px;font-size:7.3px;line-height:8.76px;color:#a8a8a8;transform:scaleX(0.8487);">Channel:</span>
<div style="left:199.70px;top:294.00px;width:55.10px;height:9.20px;background:#1b1b1b;border:0.6px solid #2e2e2e;border-radius:2px;box-sizing:border-box"></div>
<span class="t" style="left:203.20px;top:294.80px;font-size:7.3px;line-height:8.76px;color:#dedede;transform:scaleX(0.8049);">Left</span>
<svg class="abs" style="left:246.90px;top:296.60px" width="6" height="4" viewBox="0 0 6 4"><path d="M1,0.9 L3,2.9 L5,0.9" stroke="#c8c8c8" stroke-width="0.9" fill="none"/></svg>
<div style="left:340.60px;top:292.40px;width:14.90px;height:11.50px;background:#1a1a1a;border:0.9px solid #303030;border-radius:2.5px;box-sizing:border-box"></div>
<svg class="abs" style="left:343.6px;top:294.4px" width="9" height="8.6" viewBox="0 0 9 8.6"><path d="M2.9,4.1 A2.4,2.4 0 1 1 6.2,6.5" stroke="#bebebe" stroke-width="1.0" fill="none"/><path d="M0.7,4.5 L3.3,2.9 L3.4,5.8 Z" fill="#d4d4d4"/><rect x="1.7" y="7.4" width="5.8" height="0.8" fill="#a8a8a8"/></svg>
<div style="left:93.60px;top:307.80px;width:345.40px;height:0.80px;background:#363636"></div>
<span class="t" style="left:94.40px;top:315.60px;font-size:7.3px;line-height:8.76px;color:#b4b4b4;transform:scaleX(0.8208);">Noise Floor:</span>
<div style="left:91.40px;top:312.40px;width:40.40px;height:10.40px;border:1.2px solid #e3000f;box-sizing:border-box"></div>
<svg class="abs" style="left:0;top:0" width="700" height="467" viewBox="0 0 700 467"><rect x="136.3" y="322.9" width="192" height="0.75" fill="#747474"/><rect x="136.45" y="320.50" width="0.7" height="2.4" fill="#b4b4b4"/><rect x="138.84" y="321.70" width="0.7" height="1.2" fill="#8c8c8c"/><rect x="141.23" y="321.70" width="0.7" height="1.2" fill="#8c8c8c"/><rect x="143.62" y="321.70" width="0.7" height="1.2" fill="#8c8c8c"/><rect x="146.01" y="321.70" width="0.7" height="1.2" fill="#8c8c8c"/><rect x="148.40" y="320.50" width="0.7" height="2.4" fill="#b4b4b4"/><rect x="150.79" y="321.70" width="0.7" height="1.2" fill="#8c8c8c"/><rect x="153.18" y="321.70" width="0.7" height="1.2" fill="#8c8c8c"/><rect x="155.57" y="321.70" width="0.7" height="1.2" fill="#8c8c8c"/><rect x="157.96" y="321.70" width="0.7" height="1.2" fill="#8c8c8c"/><rect x="160.35" y="320.50" width="0.7" height="2.4" fill="#b4b4b4"/><rect x="162.74" y="321.70" width="0.7" height="1.2" fill="#8c8c8c"/><rect x="165.13" y="321.70" width="0.7" height="1.2" fill="#8c8c8c"/><rect x="167.52" y="321.70" width="0.7" height="1.2" fill="#8c8c8c"/><rect x="169.91" y="321.70" width="0.7" height="1.2" fill="#8c8c8c"/><rect x="172.30" y="320.50" width="0.7" height="2.4" fill="#b4b4b4"/><rect x="174.69" y="321.70" width="0.7" height="1.2" fill="#8c8c8c"/><rect x="177.08" y="321.70" width="0.7" height="1.2" fill="#8c8c8c"/><rect x="179.47" y="321.70" width="0.7" height="1.2" fill="#8c8c8c"/><rect x="181.86" y="321.70" width="0.7" height="1.2" fill="#8c8c8c"/><rect x="184.25" y="320.50" width="0.7" height="2.4" fill="#b4b4b4"/><rect x="186.64" y="321.70" width="0.7" height="1.2" fill="#8c8c8c"/><rect x="189.03" y="321.70" width="0.7" height="1.2" fill="#8c8c8c"/><rect x="191.42" y="321.70" width="0.7" height="1.2" fill="#8c8c8c"/><rect x="193.81" y="321.70" width="0.7" height="1.2" fill="#8c8c8c"/><rect x="196.20" y="320.50" width="0.7" height="2.4" fill="#b4b4b4"/><rect x="198.59" y="321.70" width="0.7" height="1.2" fill="#8c8c8c"/><rect x="200.98" y="321.70" width="0.7" height="1.2" fill="#8c8c8c"/><rect x="203.37" y="321.70" width="0.7" height="1.2" fill="#8c8c8c"/><rect x="205.76" y="321.70" width="0.7" height="1.2" fill="#8c8c8c"/><rect x="208.15" y="320.50" width="0.7" height="2.4" fill="#b4b4b4"/><rect x="210.54" y="321.70" width="0.7" height="1.2" fill="#8c8c8c"/><rect x="212.93" y="321.70" width="0.7" height="1.2" fill="#8c8c8c"/><rect x="215.32" y="321.70" width="0.7" height="1.2" fill="#8c8c8c"/><rect x="217.71" y="321.70" width="0.7" height="1.2" fill="#8c8c8c"/><rect x="220.10" y="320.50" width="0.7" height="2.4" fill="#b4b4b4"/><rect x="222.49" y="321.70" width="0.7" height="1.2" fill="#8c8c8c"/><rect x="224.88" y="321.70" width="0.7" height="1.2" fill="#8c8c8c"/><rect x="227.27" y="321.70" width="0.7" height="1.2" fill="#8c8c8c"/><rect x="229.66" y="321.70" width="0.7" height="1.2" fill="#8c8c8c"/><rect x="232.05" y="320.50" width="0.7" height="2.4" fill="#b4b4b4"/><rect x="234.44" y="321.70" width="0.7" height="1.2" fill="#8c8c8c"/><rect x="236.83" y="321.70" width="0.7" height="1.2" fill="#8c8c8c"/><rect x="239.22" y="321.70" width="0.7" height="1.2" fill="#8c8c8c"/><rect x="241.61" y="321.70" width="0.7" height="1.2" fill="#8c8c8c"/><rect x="244.00" y="320.50" width="0.7" height="2.4" fill="#b4b4b4"/><rect x="246.39" y="321.70" width="0.7" height="1.2" fill="#8c8c8c"/><rect x="248.78" y="321.70" width="0.7" height="1.2" fill="#8c8c8c"/><rect x="251.17" y="321.70" width="0.7" height="1.2" fill="#8c8c8c"/><rect x="253.56" y="321.70" width="0.7" height="1.2" fill="#8c8c8c"/><rect x="255.95" y="320.50" width="0.7" height="2.4" fill="#b4b4b4"/><rect x="258.34" y="321.70" width="0.7" height="1.2" fill="#8c8c8c"/><rect x="260.73" y="321.70" width="0.7" height="1.2" fill="#8c8c8c"/><rect x="263.12" y="321.70" width="0.7" height="1.2" fill="#8c8c8c"/><rect x="265.51" y="321.70" width="0.7" height="1.2" fill="#8c8c8c"/><rect x="267.90" y="320.50" width="0.7" height="2.4" fill="#b4b4b4"/><rect x="270.29" y="321.70" width="0.7" height="1.2" fill="#8c8c8c"/><rect x="272.68" y="321.70" width="0.7" height="1.2" fill="#8c8c8c"/><rect x="275.07" y="321.70" width="0.7" height="1.2" fill="#8c8c8c"/><rect x="277.46" y="321.70" width="0.7" height="1.2" fill="#8c8c8c"/><rect x="279.85" y="320.50" width="0.7" height="2.4" fill="#b4b4b4"/><rect x="282.24" y="321.70" width="0.7" height="1.2" fill="#8c8c8c"/><rect x="284.63" y="321.70" width="0.7" height="1.2" fill="#8c8c8c"/><rect x="287.02" y="321.70" width="0.7" height="1.2" fill="#8c8c8c"/><rect x="289.41" y="321.70" width="0.7" height="1.2" fill="#8c8c8c"/><rect x="291.80" y="320.50" width="0.7" height="2.4" fill="#b4b4b4"/><rect x="294.19" y="321.70" width="0.7" height="1.2" fill="#8c8c8c"/><rect x="296.58" y="321.70" width="0.7" height="1.2" fill="#8c8c8c"/><rect x="298.97" y="321.70" width="0.7" height="1.2" fill="#8c8c8c"/><rect x="301.36" y="321.70" width="0.7" height="1.2" fill="#8c8c8c"/><rect x="303.75" y="320.50" width="0.7" height="2.4" fill="#b4b4b4"/><rect x="306.14" y="321.70" width="0.7" height="1.2" fill="#8c8c8c"/><rect x="308.53" y="321.70" width="0.7" height="1.2" fill="#8c8c8c"/><rect x="310.92" y="321.70" width="0.7" height="1.2" fill="#8c8c8c"/><rect x="313.31" y="321.70" width="0.7" height="1.2" fill="#8c8c8c"/><rect x="315.70" y="320.50" width="0.7" height="2.4" fill="#b4b4b4"/><rect x="318.09" y="321.70" width="0.7" height="1.2" fill="#8c8c8c"/><rect x="320.48" y="321.70" width="0.7" height="1.2" fill="#8c8c8c"/><rect x="322.87" y="321.70" width="0.7" height="1.2" fill="#8c8c8c"/><rect x="325.26" y="321.70" width="0.7" height="1.2" fill="#8c8c8c"/><rect x="327.65" y="320.50" width="0.7" height="2.4" fill="#b4b4b4"/><rect x="136.3" y="342.0" width="192" height="0.75" fill="#7a7a7a"/><rect x="136.40" y="339.60" width="0.8" height="2.4" fill="#9a9a9a"/><rect x="165.18" y="340.90" width="0.8" height="1.1" fill="#9a9a9a"/><rect x="182.01" y="340.90" width="0.8" height="1.1" fill="#9a9a9a"/><rect x="193.96" y="340.90" width="0.8" height="1.1" fill="#9a9a9a"/><rect x="203.22" y="340.90" width="0.8" height="1.1" fill="#9a9a9a"/><rect x="210.79" y="340.90" width="0.8" height="1.1" fill="#9a9a9a"/><rect x="217.19" y="340.90" width="0.8" height="1.1" fill="#9a9a9a"/><rect x="222.74" y="340.90" width="0.8" height="1.1" fill="#9a9a9a"/><rect x="227.63" y="340.90" width="0.8" height="1.1" fill="#9a9a9a"/><rect x="232.00" y="339.60" width="0.8" height="2.4" fill="#9a9a9a"/><rect x="260.78" y="340.90" width="0.8" height="1.1" fill="#9a9a9a"/><rect x="277.61" y="340.90" width="0.8" height="1.1" fill="#9a9a9a"/><rect x="289.56" y="340.90" width="0.8" height="1.1" fill="#9a9a9a"/><rect x="298.82" y="340.90" width="0.8" height="1.1" fill="#9a9a9a"/><rect x="306.39" y="340.90" width="0.8" height="1.1" fill="#9a9a9a"/><rect x="312.79" y="340.90" width="0.8" height="1.1" fill="#9a9a9a"/><rect x="318.34" y="340.90" width="0.8" height="1.1" fill="#9a9a9a"/><rect x="323.23" y="340.90" width="0.8" height="1.1" fill="#9a9a9a"/><rect x="327.60" y="339.60" width="0.8" height="2.4" fill="#9a9a9a"/><circle cx="251.52" cy="323.3" r="3.1" fill="#232323" stroke="#dcdcdc" stroke-width="1.3"/><circle cx="268.25" cy="342.3" r="3.1" fill="#232323" stroke="#dcdcdc" stroke-width="1.3"/></svg>
<span class="t" style="left:129.90px;top:314.36px;font-size:5.5px;line-height:6.60px;color:#cdcdcd;transform:scaleX(1.0567);">-40</span>
<span class="t" style="left:145.09px;top:314.36px;font-size:5.5px;line-height:6.60px;color:#cdcdcd;transform:scaleX(0.9200);">-35</span>
<span class="t" style="left:157.04px;top:314.36px;font-size:5.5px;line-height:6.60px;color:#cdcdcd;transform:scaleX(0.9200);">-30</span>
<span class="t" style="left:168.99px;top:314.36px;font-size:5.5px;line-height:6.60px;color:#cdcdcd;transform:scaleX(0.9200);">-25</span>
<span class="t" style="left:180.94px;top:314.36px;font-size:5.5px;line-height:6.60px;color:#cdcdcd;transform:scaleX(0.9200);">-20</span>
<span class="t" style="left:192.89px;top:314.36px;font-size:5.5px;line-height:6.60px;color:#cdcdcd;transform:scaleX(0.9200);">-15</span>
<span class="t" style="left:204.84px;top:314.36px;font-size:5.5px;line-height:6.60px;color:#cdcdcd;transform:scaleX(0.9200);">-10</span>
<span class="t" style="left:218.20px;top:314.36px;font-size:5.5px;line-height:6.60px;color:#cdcdcd;transform:scaleX(0.9200);">-5</span>
<span class="t" style="left:230.99px;top:314.36px;font-size:5.5px;line-height:6.60px;color:#cdcdcd;transform:scaleX(0.9200);">0</span>
<span class="t" style="left:242.94px;top:314.36px;font-size:5.5px;line-height:6.60px;color:#cdcdcd;transform:scaleX(0.9200);">5</span>
<span class="t" style="left:253.49px;top:314.36px;font-size:5.5px;line-height:6.60px;color:#cdcdcd;transform:scaleX(0.9200);">10</span>
<span class="t" style="left:265.44px;top:314.36px;font-size:5.5px;line-height:6.60px;color:#cdcdcd;transform:scaleX(0.9200);">15</span>
<span class="t" style="left:277.39px;top:314.36px;font-size:5.5px;line-height:6.60px;color:#cdcdcd;transform:scaleX(0.9200);">20</span>
<span class="t" style="left:289.34px;top:314.36px;font-size:5.5px;line-height:6.60px;color:#cdcdcd;transform:scaleX(0.9200);">25</span>
<span class="t" style="left:301.29px;top:314.36px;font-size:5.5px;line-height:6.60px;color:#cdcdcd;transform:scaleX(0.9200);">30</span>
<span class="t" style="left:313.54px;top:314.36px;font-size:5.5px;line-height:6.60px;color:#cdcdcd;transform:scaleX(0.9200);">35</span>
<span class="t" style="left:327.19px;top:314.36px;font-size:5.5px;line-height:6.60px;color:#cdcdcd;transform:scaleX(0.9200);">40</span>
<span class="t" style="left:131.45px;top:333.46px;font-size:5.5px;line-height:6.60px;color:#e6e6e6;transform:scaleX(0.8800);">1</span>
<span class="t" style="left:164.23px;top:333.46px;font-size:5.5px;line-height:6.60px;color:#6a6a6a;transform:scaleX(0.8800);">2</span>
<span class="t" style="left:181.07px;top:333.46px;font-size:5.5px;line-height:6.60px;color:#6a6a6a;transform:scaleX(0.8800);">3</span>
<span class="t" style="left:193.01px;top:333.46px;font-size:5.5px;line-height:6.60px;color:#6a6a6a;transform:scaleX(0.8800);">4</span>
<span class="t" style="left:202.28px;top:333.46px;font-size:5.5px;line-height:6.60px;color:#6a6a6a;transform:scaleX(0.8800);">5</span>
<span class="t" style="left:209.85px;top:333.46px;font-size:5.5px;line-height:6.60px;color:#6a6a6a;transform:scaleX(0.8800);">6</span>
<span class="t" style="left:216.25px;top:333.46px;font-size:5.5px;line-height:6.60px;color:#6a6a6a;transform:scaleX(0.8800);">7</span>
<span class="t" style="left:221.79px;top:333.46px;font-size:5.5px;line-height:6.60px;color:#6a6a6a;transform:scaleX(0.8800);">8</span>
<span class="t" style="left:229.71px;top:333.46px;font-size:5.5px;line-height:6.60px;color:#e6e6e6;transform:scaleX(0.8800);">10</span>
<span class="t" style="left:258.49px;top:333.46px;font-size:5.5px;line-height:6.60px;color:#6a6a6a;transform:scaleX(0.8800);">20</span>
<span class="t" style="left:275.32px;top:333.46px;font-size:5.5px;line-height:6.60px;color:#6a6a6a;transform:scaleX(0.8800);">30</span>
<span class="t" style="left:287.27px;top:333.46px;font-size:5.5px;line-height:6.60px;color:#6a6a6a;transform:scaleX(0.8800);">40</span>
<span class="t" style="left:296.53px;top:333.46px;font-size:5.5px;line-height:6.60px;color:#6a6a6a;transform:scaleX(0.8800);">50</span>
<span class="t" style="left:304.10px;top:333.46px;font-size:5.5px;line-height:6.60px;color:#6a6a6a;transform:scaleX(0.8800);">60</span>
<span class="t" style="left:310.50px;top:333.46px;font-size:5.5px;line-height:6.60px;color:#6a6a6a;transform:scaleX(0.8800);">70</span>
<span class="t" style="left:324.46px;top:333.46px;font-size:5.5px;line-height:6.60px;color:#e6e6e6;transform:scaleX(0.8800);">100</span>
<span class="t" style="left:97.30px;top:333.30px;font-size:7.3px;line-height:8.76px;color:#b4b4b4;transform:scaleX(0.7961);">Reduce by:</span>
<div style="left:94.80px;top:332.10px;width:36.40px;height:9.40px;border:1.2px solid #e3000f;box-sizing:border-box"></div>
<span class="t" style="left:351.00px;top:316.90px;font-size:7.3px;line-height:8.76px;color:#3d8fe8;font-weight:bold;transform:scaleX(0.7389);">8</span>
<span class="t" style="left:355.60px;top:316.90px;font-size:7.3px;line-height:8.76px;color:#9a9a9a;transform:scaleX(0.8623);">dB</span>
<span class="t" style="left:347.50px;top:336.10px;font-size:7.3px;line-height:8.76px;color:#3d8fe8;font-weight:bold;transform:scaleX(0.8005);">24</span>
<span class="t" style="left:355.60px;top:336.10px;font-size:7.3px;line-height:8.76px;color:#9a9a9a;transform:scaleX(0.8623);">dB</span>
<div style="left:94.00px;top:353.70px;width:7.70px;height:7.70px;border:0.9px solid #a4a4a4;border-radius:1.2px;box-sizing:border-box;background:#262626"></div>
<span class="t" style="left:103.90px;top:353.90px;font-size:7.3px;line-height:8.76px;color:#b8b8b8;transform:scaleX(0.8373);">Output Hiss Only</span>
<div style="left:93.90px;top:366.30px;width:345.00px;height:0.80px;background:#3b3b3b"></div>
<svg class="abs" style="left:95.5px;top:372px" width="4" height="6" viewBox="0 0 4 6"><path d="M1,0.9 L3,3 L1,5.1" stroke="#bdbdbd" stroke-width="0.9" fill="none"/></svg>
<span class="t" style="left:107.40px;top:371.30px;font-size:7.3px;line-height:8.76px;color:#e2e2e2;transform:scaleX(0.8223);">Advanced</span>
<div style="left:88.10px;top:389.00px;width:350.60px;height:0.80px;background:#3b3b3b"></div>
<span class="t" style="left:88.50px;top:396.80px;font-size:7.3px;line-height:8.76px;color:#a4a4a4;transform:scaleX(0.7939);">In: L, R | Out: L, R</span>
<div style="left:88.10px;top:408.60px;width:10.00px;height:10.00px;background:#2fa56e;border-radius:1px"></div>
<svg class="abs" style="left:88.1px;top:408.6px" width="10" height="10" viewBox="0 0 10 10"><path d="M6.6,2.6 A3,3 0 1 1 4.2,2.3" stroke="#66c698" stroke-width="0.9" fill="none"/><path d="M5.3,1.4 L6.9,2.9 L5,3.6" stroke="#66c698" stroke-width="0.8" fill="none"/></svg>
<svg class="abs" style="left:107.6px;top:410.3px" width="6.4" height="6.4" viewBox="0 0 6.4 6.4"><path d="M0.3,0.4 L5.8,3.2 L0.3,6 Z" fill="#cacaca"/></svg>
<svg class="abs" style="left:124.4px;top:409.4px" width="9.4" height="8.2" viewBox="0 0 9.4 8.2"><path d="M1.1,3.2 V6.5 H8.3 V4.4" stroke="#cdcdcd" stroke-width="1.3" fill="none"/><path d="M2.9,5 V2.2 H5.7 V0.8 L8.9,2.9 L5.7,4.9 V3.6 H4.1 V5 Z" fill="#cdcdcd"/></svg>
<div style="left:343.90px;top:407.50px;width:45.10px;height:11.10px;border:0.9px solid #8c8c8c;border-radius:5.6px;box-sizing:border-box;background:#2a2a2a"></div>
<span class="t" style="left:358.80px;top:409.10px;font-size:7.3px;line-height:8.76px;color:#c8c8c8;transform:scaleX(0.8652);">Apply</span>
<div style="left:394.60px;top:407.50px;width:45.30px;height:11.10px;border:0.9px solid #8c8c8c;border-radius:5.6px;box-sizing:border-box;background:#2a2a2a"></div>
<span class="t" style="left:409.90px;top:409.50px;font-size:7.3px;line-height:8.76px;color:#c8c8c8;transform:scaleX(0.7930);">Close</span>
<div style="left:341.40px;top:402.20px;width:45.00px;height:17.80px;border:1.2px solid #e3000f;box-sizing:border-box"></div>
</div>
</body></html>
